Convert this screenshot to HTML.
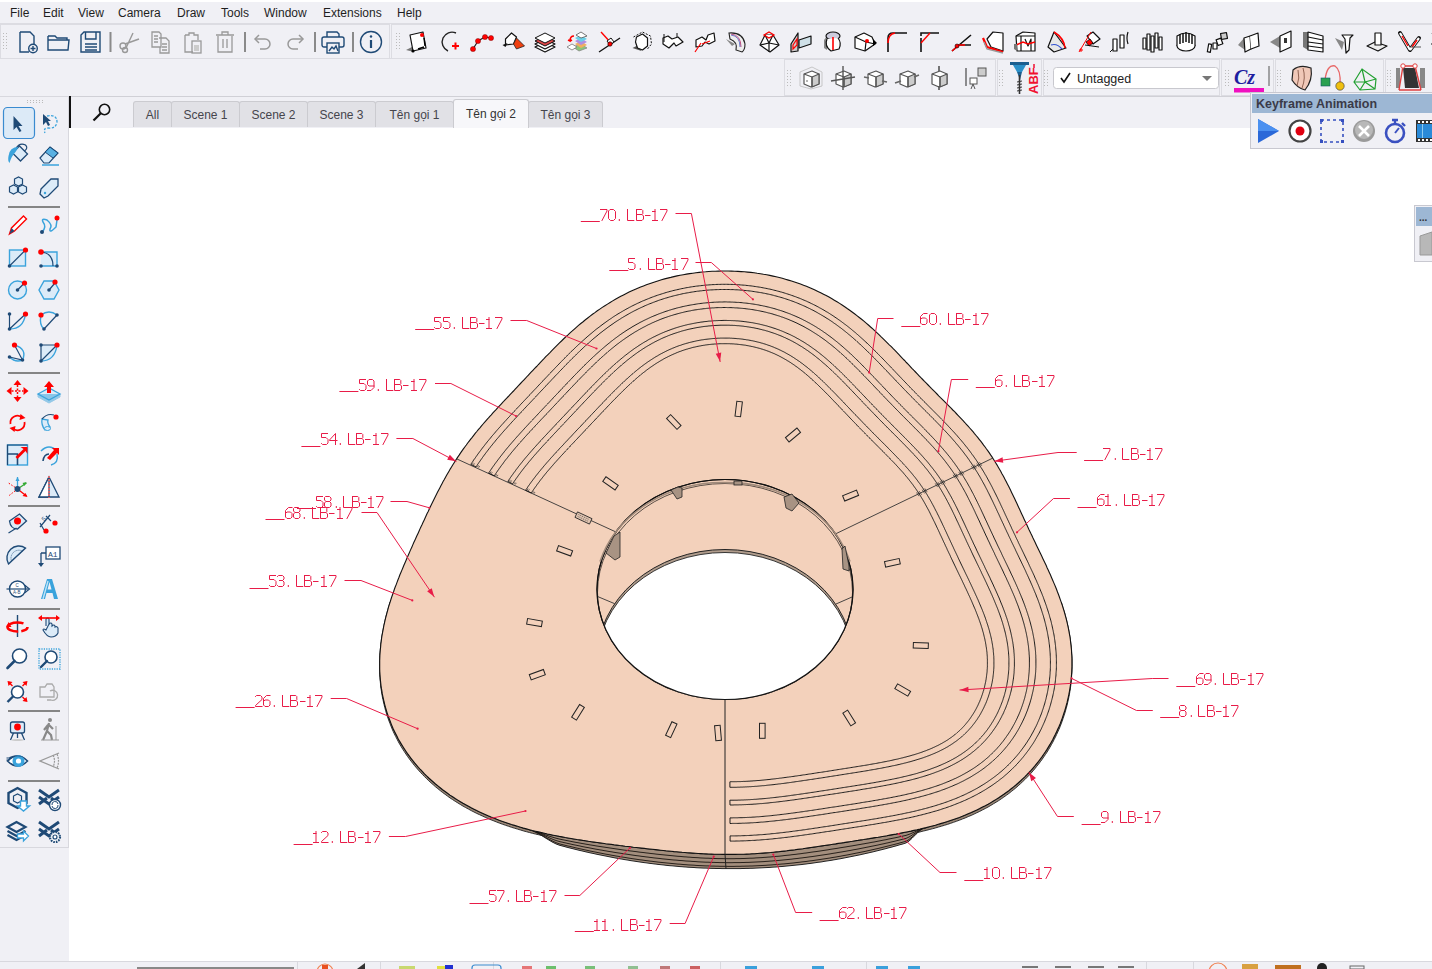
<!DOCTYPE html>
<html><head><meta charset="utf-8"><style>
*{margin:0;padding:0;box-sizing:border-box}
html,body{width:1432px;height:969px;overflow:hidden;background:#F0F0F5;font-family:"Liberation Sans",sans-serif;}
.abs{position:absolute}
#menu{position:absolute;left:0;top:2px;height:21px;width:1432px;font-size:12px;color:#1e1e1e}
#menu span{position:absolute;top:4px}
.tab{position:absolute;top:101px;height:26px;background:#E1E1E6;border:1px solid #CBCBD0;border-bottom:none;border-radius:3px 3px 0 0;font-size:12px;color:#45454c;text-align:center;line-height:27px}
</style></head><body>
<div class="abs" style="left:0;top:0;width:1432px;height:2px;background:#fff"></div>
<div id="menu">
<span style="left:10px">File</span><span style="left:43px">Edit</span><span style="left:78px">View</span><span style="left:118px">Camera</span><span style="left:177px">Draw</span><span style="left:221px">Tools</span><span style="left:264px">Window</span><span style="left:323px">Extensions</span><span style="left:397px">Help</span>
</div>
<div class="abs" style="left:0;top:23px;width:1432px;height:1px;background:#DCDCE2"></div>
<div class="abs" style="left:0;top:58px;width:1432px;height:1px;background:#DCDCE2"></div>
<!-- viewport -->
<div class="abs" style="left:69px;top:128px;width:1363px;height:833px;background:#fff"></div>
<div class="abs" style="left:69px;top:96px;width:1363px;height:1px;background:#D0D0D6"></div>
<div class="abs" style="left:69px;top:96px;width:2px;height:32px;background:#111"></div>
<!-- left panel -->
<div class="abs" style="left:0;top:96px;width:69px;height:752px;border-top:1px solid #D8D8DE;border-right:1px solid #D8D8DE;border-bottom:1px solid #D8D8DE"></div>
<!-- tabs -->
<div class="tab" style="left:133px;width:39px">All</div>
<div class="tab" style="left:171px;width:69px">Scene 1</div>
<div class="tab" style="left:239px;width:69px">Scene 2</div>
<div class="tab" style="left:307px;width:69px">Scene 3</div>
<div class="tab" style="left:375px;width:79px">Tên gọi 1</div>
<div class="tab" style="left:453px;width:76px;top:99px;height:29px;background:#F7F7FA;line-height:28px;color:#333">Tên gọi 2</div>
<div class="tab" style="left:528px;width:75px">Tên gọi 3</div>
<!-- status bar -->
<div class="abs" style="left:0;top:961px;width:1432px;height:8px;background:#F0F0F5;border-top:1px solid #D8D8DE"></div>
<svg class="abs" style="left:0;top:0" width="1432" height="969" viewBox="0 0 1432 969">
<g>
<path d="M1061.2 604.9 L1062.1 607.5 L1062.9 610.1 L1063.7 612.7 L1064.5 615.3 L1065.2 617.9 L1065.9 620.5 L1066.6 623.2 L1067.2 625.8 L1067.8 628.5 L1068.4 631.2 L1068.9 633.9 L1069.4 636.6 L1069.9 639.3 L1070.3 642.0 L1070.6 644.7 L1070.9 647.4 L1071.2 650.2 L1071.5 652.9 L1071.6 655.7 L1071.8 658.4 L1071.9 661.2 L1071.9 663.9 L1071.9 666.7 L1071.9 669.5 L1071.8 672.2 L1071.7 675.0 L1071.5 677.7 L1071.3 680.5 L1071.0 683.3 L1070.7 686.0 L1070.3 688.8 L1069.9 691.5 L1069.4 694.3 L1068.9 697.0 L1068.3 699.8 L1067.7 702.5 L1067.1 705.2 L1066.3 707.9 L1065.6 710.6 L1064.8 713.3 L1063.9 716.0 L1063.0 718.7 L1062.1 721.4 L1061.1 724.0 L1060.1 726.7 L1059.0 729.3 L1057.8 731.9 L1056.6 734.5 L1055.4 737.1 L1054.1 739.6 L1052.8 742.2 L1051.4 744.7 L1050.0 747.2 L1048.5 749.7 L1047.0 752.2 L1045.4 754.6 L1043.7 757.0 L1042.1 759.4 L1040.3 761.8 L1038.6 764.1 L1036.7 766.4 L1034.9 768.7 L1033.0 770.9 L1031.0 773.2 L1029.0 775.3 L1026.9 777.5 L1024.8 779.6 L1022.6 781.7 L1020.4 783.8 L1018.2 785.8 L1015.9 787.8 L1013.6 789.7 L1011.2 791.6 L1008.8 793.5 L1006.3 795.3 L1003.8 797.1 L1001.3 798.8 L998.7 800.6 L996.1 802.2 L993.4 803.8 L990.8 805.4 L988.1 807.0 L985.3 808.5 L982.5 809.9 L979.7 811.4 L976.9 812.7 L974.0 814.1 L971.2 815.4 L968.2 816.6 L965.3 817.9 L962.4 819.0 L959.4 820.2 L956.4 821.3 L953.5 822.3 L950.4 823.4 L947.4 824.4 L944.4 825.3 L941.4 826.2 L938.3 827.1 L935.3 828.0 L932.3 828.8 L929.2 829.6 L926.2 830.4 L923.1 831.1 L920.1 831.9 L917.0 832.6 L914.0 833.2 L910.9 833.9 L907.9 834.5 L904.9 835.1 L901.9 835.7 L898.9 836.3 L895.9 836.9 L892.9 837.4 L889.9 837.9 L886.9 838.5 L884.0 839.0 L881.1 839.5 L878.1 840.0 L875.2 840.4 L872.3 840.9 L869.4 841.4 L866.5 841.8 L863.7 842.3 L860.8 842.7 L858.0 843.2 L855.1 843.6 L852.3 844.1 L849.5 844.5 L846.7 844.9 L843.9 845.4 L841.1 845.8 L838.3 846.2 L835.6 846.7 L832.8 847.1 L830.1 847.5 L827.3 847.9 L824.6 848.3 L821.9 848.7 L819.2 849.1 L816.4 849.5 L813.7 849.9 L811.0 850.3 L808.3 850.7 L805.6 851.1 L802.9 851.5 L800.2 851.8 L797.6 852.2 L794.9 852.6 L792.2 852.9 L789.5 853.2 L786.8 853.6 L784.1 853.9 L781.4 854.2 L778.8 854.5 L776.1 854.7 L773.4 855.0 L770.7 855.3 L768.0 855.5 L765.3 855.7 L762.6 855.9 L760.0 856.1 L757.3 856.3 L754.6 856.5 L751.9 856.6 L749.2 856.8 L746.5 856.9 L743.8 857.0 L741.1 857.1 L738.4 857.1 L735.8 857.2 L733.1 857.2 L730.4 857.2 L727.7 857.2 L725.0 857.2 L722.3 857.2 L719.6 857.1 L716.9 857.1 L714.3 857.0 L711.6 856.9 L708.9 856.8 L706.2 856.7 L703.5 856.6 L700.8 856.4 L698.1 856.3 L695.5 856.1 L692.8 855.9 L690.1 855.7 L687.4 855.5 L684.7 855.3 L682.1 855.1 L679.4 854.8 L676.7 854.6 L674.0 854.4 L671.3 854.1 L668.6 853.8 L665.9 853.6 L663.3 853.3 L660.6 853.0 L657.9 852.7 L655.2 852.4 L652.5 852.1 L649.8 851.8 L647.0 851.5 L644.3 851.2 L641.6 850.9 L638.9 850.6 L636.1 850.3 L633.4 850.0 L630.7 849.6 L627.9 849.3 L625.1 849.0 L622.4 848.6 L619.6 848.3 L616.8 847.9 L614.0 847.6 L611.2 847.2 L608.4 846.8 L605.6 846.5 L602.8 846.1 L599.9 845.7 L597.1 845.3 L594.2 844.9 L591.4 844.5 L588.5 844.1 L585.6 843.6 L582.7 843.2 L579.8 842.7 L576.9 842.3 L574.0 841.8 L571.1 841.3 L568.1 840.8 L565.2 840.3 L562.2 839.7 L559.3 839.2 L556.3 838.6 L553.3 838.0 L550.3 837.4 L547.4 836.8 L544.4 836.1 L541.4 835.4 L538.4 834.7 L535.4 834.0 L532.4 833.3 L529.4 832.5 L526.4 831.7 L523.4 830.9 L520.5 830.0 L517.5 829.1 L514.5 828.2 L511.5 827.3 L508.6 826.3 L505.6 825.3 L502.7 824.3 L499.7 823.2 L496.8 822.1 L493.9 820.9 L491.0 819.8 L488.1 818.6 L485.2 817.3 L482.4 816.0 L479.6 814.7 L476.7 813.4 L474.0 812.0 L471.2 810.6 L468.5 809.1 L465.7 807.6 L463.0 806.1 L460.4 804.5 L457.8 802.9 L455.2 801.3 L452.6 799.6 L450.0 797.9 L447.5 796.1 L445.1 794.3 L442.6 792.5 L440.2 790.6 L437.9 788.7 L435.5 786.8 L433.3 784.8 L431.0 782.8 L428.8 780.8 L426.6 778.7 L424.5 776.6 L422.5 774.5 L420.4 772.3 L418.4 770.1 L416.5 767.9 L414.6 765.7 L412.8 763.4 L411.0 761.1 L409.2 758.7 L407.5 756.4 L405.9 754.0 L404.3 751.6 L402.7 749.1 L401.2 746.7 L399.7 744.2 L398.3 741.7 L397.0 739.1 L395.7 736.6 L394.4 734.0 L393.2 731.5 L392.1 728.9 L391.0 726.2 L390.0 723.6 L389.0 721.0 L388.0 718.3 L387.1 715.6 L386.3 713.0 L385.5 710.3 L384.8 707.6 L384.1 704.8 L383.5 702.1 L382.9 699.4 L382.3 696.7 L381.9 693.9 L381.4 691.2 L381.0 688.4 L380.7 685.7 L380.4 682.9 L380.2 680.1 L380.0 677.4 L379.8 674.6 L379.7 671.9 L379.7 669.1 L379.7 666.3 L379.7 663.6 L379.8 660.8 L379.9 658.1 L380.1 655.3 L380.3 652.6 L380.6 649.9 L380.8 647.2 L381.2 644.4 L381.5 641.7 L381.9 639.0 L382.4 636.3 L382.9 633.7 L383.4 631.0 L383.9 628.3 L384.5 625.7 L385.1 623.0 L385.7 620.4 L386.4 617.8 L387.1 615.2 L387.8 612.6 L388.5 610.0 L389.3 607.4 L390.1 604.9 L390.1 602.1 L389.3 604.6 L388.5 607.2 L387.8 609.8 L387.1 612.4 L386.4 615.0 L385.7 617.6 L385.1 620.2 L384.5 622.9 L383.9 625.5 L383.4 628.2 L382.9 630.9 L382.4 633.5 L381.9 636.2 L381.5 638.9 L381.2 641.6 L380.8 644.4 L380.6 647.1 L380.3 649.8 L380.1 652.5 L379.9 655.3 L379.8 658.0 L379.7 660.8 L379.7 663.5 L379.7 666.3 L379.7 669.1 L379.8 671.8 L380.0 674.6 L380.2 677.3 L380.4 680.1 L380.7 682.9 L381.0 685.6 L381.4 688.4 L381.9 691.1 L382.3 693.9 L382.9 696.6 L383.5 699.3 L384.1 702.0 L384.8 704.8 L385.5 707.5 L386.3 710.2 L387.1 712.8 L388.0 715.5 L389.0 718.2 L390.0 720.8 L391.0 723.4 L392.1 726.1 L393.2 728.7 L394.4 731.2 L395.7 733.8 L397.0 736.3 L398.3 738.9 L399.7 741.4 L401.2 743.9 L402.7 746.3 L404.3 748.8 L405.9 751.2 L407.5 753.6 L409.2 755.9 L411.0 758.3 L412.8 760.6 L414.6 762.9 L416.5 765.1 L418.4 767.3 L420.4 769.5 L422.5 771.7 L424.5 773.8 L426.6 775.9 L428.8 778.0 L431.0 780.0 L433.3 782.0 L435.5 784.0 L437.9 785.9 L440.2 787.8 L442.6 789.7 L445.1 791.5 L447.5 793.3 L450.0 795.1 L452.6 796.8 L455.2 798.5 L457.8 800.1 L460.4 801.7 L463.0 803.3 L465.7 804.8 L468.5 806.3 L471.2 807.8 L474.0 809.2 L476.7 810.6 L479.6 811.9 L482.4 813.2 L485.2 814.5 L488.1 815.8 L491.0 817.0 L493.9 818.1 L496.8 819.3 L499.7 820.4 L502.7 821.5 L505.6 822.5 L508.6 823.5 L511.5 824.5 L514.5 825.4 L517.5 826.3 L520.5 827.2 L523.4 828.1 L526.4 828.9 L529.4 829.7 L532.4 830.5 L535.4 831.2 L538.4 831.9 L541.4 832.6 L544.4 833.3 L547.4 834.0 L550.3 834.6 L553.3 835.2 L556.3 835.8 L559.3 836.4 L562.2 836.9 L565.2 837.5 L568.1 838.0 L571.1 838.5 L574.0 839.0 L576.9 839.5 L579.8 839.9 L582.7 840.4 L585.6 840.8 L588.5 841.3 L591.4 841.7 L594.2 842.1 L597.1 842.5 L599.9 842.9 L602.8 843.3 L605.6 843.7 L608.4 844.0 L611.2 844.4 L614.0 844.8 L616.8 845.1 L619.6 845.5 L622.4 845.8 L625.1 846.2 L627.9 846.5 L630.7 846.8 L633.4 847.2 L636.1 847.5 L638.9 847.8 L641.6 848.1 L644.3 848.4 L647.0 848.7 L649.8 849.0 L652.5 849.3 L655.2 849.6 L657.9 849.9 L660.6 850.2 L663.3 850.5 L665.9 850.8 L668.6 851.0 L671.3 851.3 L674.0 851.6 L676.7 851.8 L679.4 852.0 L682.1 852.3 L684.7 852.5 L687.4 852.7 L690.1 852.9 L692.8 853.1 L695.5 853.3 L698.1 853.5 L700.8 853.6 L703.5 853.8 L706.2 853.9 L708.9 854.0 L711.6 854.1 L714.3 854.2 L716.9 854.3 L719.6 854.3 L722.3 854.4 L725.0 854.4 L727.7 854.4 L730.4 854.4 L733.1 854.4 L735.8 854.4 L738.4 854.3 L741.1 854.3 L743.8 854.2 L746.5 854.1 L749.2 854.0 L751.9 853.8 L754.6 853.7 L757.3 853.5 L760.0 853.3 L762.6 853.1 L765.3 852.9 L768.0 852.7 L770.7 852.5 L773.4 852.2 L776.1 851.9 L778.8 851.7 L781.4 851.4 L784.1 851.1 L786.8 850.8 L789.5 850.4 L792.2 850.1 L794.9 849.8 L797.6 849.4 L800.2 849.0 L802.9 848.7 L805.6 848.3 L808.3 847.9 L811.0 847.5 L813.7 847.1 L816.4 846.7 L819.2 846.3 L821.9 845.9 L824.6 845.5 L827.3 845.1 L830.1 844.7 L832.8 844.3 L835.6 843.9 L838.3 843.4 L841.1 843.0 L843.9 842.6 L846.7 842.1 L849.5 841.7 L852.3 841.3 L855.1 840.8 L858.0 840.4 L860.8 839.9 L863.7 839.5 L866.5 839.0 L869.4 838.6 L872.3 838.1 L875.2 837.6 L878.1 837.2 L881.1 836.7 L884.0 836.2 L886.9 835.7 L889.9 835.1 L892.9 834.6 L895.9 834.1 L898.9 833.5 L901.9 832.9 L904.9 832.3 L907.9 831.7 L910.9 831.1 L914.0 830.4 L917.0 829.8 L920.1 829.1 L923.1 828.3 L926.2 827.6 L929.2 826.8 L932.3 826.0 L935.3 825.2 L938.3 824.3 L941.4 823.4 L944.4 822.5 L947.4 821.6 L950.4 820.6 L953.5 819.5 L956.4 818.5 L959.4 817.4 L962.4 816.2 L965.3 815.1 L968.2 813.8 L971.2 812.6 L974.0 811.3 L976.9 809.9 L979.7 808.6 L982.5 807.1 L985.3 805.7 L988.1 804.2 L990.8 802.6 L993.4 801.0 L996.1 799.4 L998.7 797.8 L1001.3 796.0 L1003.8 794.3 L1006.3 792.5 L1008.8 790.7 L1011.2 788.8 L1013.6 786.9 L1015.9 785.0 L1018.2 783.0 L1020.4 781.0 L1022.6 778.9 L1024.8 776.8 L1026.9 774.7 L1029.0 772.5 L1031.0 770.4 L1033.0 768.1 L1034.9 765.9 L1036.7 763.6 L1038.6 761.3 L1040.3 759.0 L1042.1 756.6 L1043.7 754.2 L1045.4 751.8 L1047.0 749.4 L1048.5 746.9 L1050.0 744.4 L1051.4 741.9 L1052.8 739.4 L1054.1 736.8 L1055.4 734.3 L1056.6 731.7 L1057.8 729.1 L1059.0 726.5 L1060.1 723.9 L1061.1 721.2 L1062.1 718.6 L1063.0 715.9 L1063.9 713.2 L1064.8 710.5 L1065.6 707.8 L1066.3 705.1 L1067.1 702.4 L1067.7 699.7 L1068.3 697.0 L1068.9 694.2 L1069.4 691.5 L1069.9 688.7 L1070.3 686.0 L1070.7 683.2 L1071.0 680.5 L1071.3 677.7 L1071.5 674.9 L1071.7 672.2 L1071.8 669.4 L1071.9 666.7 L1071.9 663.9 L1071.9 661.1 L1071.9 658.4 L1071.8 655.6 L1071.6 652.9 L1071.5 650.1 L1071.2 647.4 L1070.9 644.6 L1070.6 641.9 L1070.3 639.2 L1069.9 636.5 L1069.4 633.8 L1068.9 631.1 L1068.4 628.4 L1067.8 625.7 L1067.2 623.0 L1066.6 620.4 L1065.9 617.7 L1065.2 615.1 L1064.5 612.5 L1063.7 609.9 L1062.9 607.3 L1062.1 604.7 L1061.2 602.1 Z" fill="#9a8676" stroke="#222" stroke-width="0.9"/>
<path d="M528.0 829.3 L530.0 829.9 L532.0 830.7 L534.0 831.5 L536.0 832.5 L538.0 833.5 L540.0 834.6 L542.0 835.8 L544.0 837.0 L546.0 838.3 L548.0 839.5 L550.0 840.7 L552.0 841.9 L554.0 842.9 L556.0 843.9 L558.0 844.7 L560.0 845.4 L562.0 845.9 L564.0 846.4 L566.0 847.0 L568.0 847.5 L570.0 848.0 L572.0 848.5 L574.0 849.0 L576.0 849.5 L578.0 850.0 L580.0 850.5 L582.0 850.9 L584.0 851.4 L586.0 851.9 L588.0 852.3 L590.0 852.8 L592.0 853.2 L594.0 853.6 L596.0 854.1 L598.0 854.5 L600.0 854.9 L602.0 855.3 L604.0 855.7 L606.0 856.1 L608.0 856.5 L610.0 856.9 L612.0 857.3 L614.0 857.7 L616.0 858.1 L618.0 858.4 L620.0 858.8 L622.0 859.1 L624.0 859.5 L626.0 859.8 L628.0 860.1 L630.0 860.5 L632.0 860.8 L634.0 861.1 L636.0 861.4 L638.0 861.7 L640.0 862.0 L642.0 862.3 L644.0 862.6 L646.0 862.8 L648.0 863.1 L650.0 863.4 L652.0 863.6 L654.0 863.9 L656.0 864.1 L658.0 864.4 L660.0 864.6 L662.0 864.8 L664.0 865.0 L666.0 865.3 L668.0 865.5 L670.0 865.7 L672.0 865.8 L674.0 866.0 L676.0 866.2 L678.0 866.4 L680.0 866.6 L682.0 866.7 L684.0 866.9 L686.0 867.0 L688.0 867.2 L690.0 867.3 L692.0 867.4 L694.0 867.5 L696.0 867.7 L698.0 867.8 L700.0 867.9 L702.0 868.0 L704.0 868.1 L706.0 868.1 L708.0 868.2 L710.0 868.3 L712.0 868.4 L714.0 868.4 L716.0 868.5 L718.0 868.5 L720.0 868.5 L722.0 868.6 L724.0 868.6 L726.0 868.6 L728.0 868.6 L730.0 868.6 L732.0 868.6 L734.0 868.6 L736.0 868.6 L738.0 868.6 L740.0 868.6 L742.0 868.5 L744.0 868.5 L746.0 868.4 L748.0 868.4 L750.0 868.3 L752.0 868.3 L754.0 868.2 L756.0 868.1 L758.0 868.0 L760.0 867.9 L762.0 867.8 L764.0 867.7 L766.0 867.6 L768.0 867.5 L770.0 867.4 L772.0 867.2 L774.0 867.1 L776.0 867.0 L778.0 866.8 L780.0 866.6 L782.0 866.5 L784.0 866.3 L786.0 866.1 L788.0 865.9 L790.0 865.7 L792.0 865.5 L794.0 865.3 L796.0 865.1 L798.0 864.9 L800.0 864.7 L802.0 864.5 L804.0 864.2 L806.0 864.0 L808.0 863.7 L810.0 863.5 L812.0 863.2 L814.0 862.9 L816.0 862.6 L818.0 862.3 L820.0 862.1 L822.0 861.8 L824.0 861.4 L826.0 861.1 L828.0 860.8 L830.0 860.5 L832.0 860.2 L834.0 859.8 L836.0 859.5 L838.0 859.1 L840.0 858.8 L842.0 858.4 L844.0 858.0 L846.0 857.6 L848.0 857.2 L850.0 856.8 L852.0 856.4 L854.0 856.0 L856.0 855.6 L858.0 855.2 L860.0 854.8 L862.0 854.3 L864.0 853.9 L866.0 853.4 L868.0 853.0 L870.0 852.5 L872.0 852.1 L874.0 851.6 L876.0 851.1 L878.0 850.6 L880.0 850.1 L882.0 849.6 L884.0 849.1 L886.0 848.6 L888.0 848.0 L890.0 847.5 L892.0 847.0 L894.0 846.4 L896.0 845.9 L898.0 845.3 L900.0 844.7 L902.0 844.2 L904.0 843.6 L906.0 842.9 L908.0 841.8 L910.0 840.2 L912.0 838.3 L914.0 836.3 L916.0 834.2 L918.0 832.3 L920.0 830.6 L922.0 829.2 L924.0 828.2 L926.0 827.6 L924.0 828.1 L922.0 828.6 L920.0 829.1 L918.0 829.5 L916.0 830.0 L914.0 830.4 L912.0 830.9 L910.0 831.3 L908.0 831.7 L906.0 832.1 L904.0 832.5 L902.0 832.9 L900.0 833.3 L898.0 833.7 L896.0 834.0 L894.0 834.4 L892.0 834.8 L890.0 835.1 L888.0 835.5 L886.0 835.8 L884.0 836.2 L882.0 836.5 L880.0 836.8 L878.0 837.2 L876.0 837.5 L874.0 837.8 L872.0 838.2 L870.0 838.5 L868.0 838.8 L866.0 839.1 L864.0 839.4 L862.0 839.8 L860.0 840.1 L858.0 840.4 L856.0 840.7 L854.0 841.0 L852.0 841.3 L850.0 841.6 L848.0 841.9 L846.0 842.3 L844.0 842.6 L842.0 842.9 L840.0 843.2 L838.0 843.5 L836.0 843.8 L834.0 844.1 L832.0 844.4 L830.0 844.7 L828.0 845.0 L826.0 845.3 L824.0 845.6 L822.0 845.9 L820.0 846.2 L818.0 846.5 L816.0 846.8 L814.0 847.1 L812.0 847.4 L810.0 847.7 L808.0 848.0 L806.0 848.2 L804.0 848.5 L802.0 848.8 L800.0 849.1 L798.0 849.3 L796.0 849.6 L794.0 849.9 L792.0 850.1 L790.0 850.4 L788.0 850.6 L786.0 850.8 L784.0 851.1 L782.0 851.3 L780.0 851.5 L778.0 851.7 L776.0 851.9 L774.0 852.1 L772.0 852.3 L770.0 852.5 L768.0 852.7 L766.0 852.9 L764.0 853.0 L762.0 853.2 L760.0 853.3 L758.0 853.5 L756.0 853.6 L754.0 853.7 L752.0 853.8 L750.0 853.9 L748.0 854.0 L746.0 854.1 L744.0 854.2 L742.0 854.2 L740.0 854.3 L738.0 854.3 L736.0 854.4 L734.0 854.4 L732.0 854.4 L730.0 854.4 L728.0 854.4 L726.0 854.4 L724.0 854.4 L722.0 854.4 L720.0 854.3 L718.0 854.3 L716.0 854.2 L714.0 854.2 L712.0 854.1 L710.0 854.0 L708.0 854.0 L706.0 853.9 L704.0 853.8 L702.0 853.7 L700.0 853.6 L698.0 853.4 L696.0 853.3 L694.0 853.2 L692.0 853.0 L690.0 852.9 L688.0 852.8 L686.0 852.6 L684.0 852.4 L682.0 852.3 L680.0 852.1 L678.0 851.9 L676.0 851.7 L674.0 851.6 L672.0 851.4 L670.0 851.2 L668.0 851.0 L666.0 850.8 L664.0 850.6 L662.0 850.4 L660.0 850.2 L658.0 849.9 L656.0 849.7 L654.0 849.5 L652.0 849.3 L650.0 849.1 L648.0 848.9 L646.0 848.6 L644.0 848.4 L642.0 848.2 L640.0 847.9 L638.0 847.7 L636.0 847.5 L634.0 847.2 L632.0 847.0 L630.0 846.7 L628.0 846.5 L626.0 846.3 L624.0 846.0 L622.0 845.8 L620.0 845.5 L618.0 845.3 L616.0 845.0 L614.0 844.8 L612.0 844.5 L610.0 844.2 L608.0 844.0 L606.0 843.7 L604.0 843.4 L602.0 843.2 L600.0 842.9 L598.0 842.6 L596.0 842.3 L594.0 842.1 L592.0 841.8 L590.0 841.5 L588.0 841.2 L586.0 840.9 L584.0 840.6 L582.0 840.3 L580.0 840.0 L578.0 839.6 L576.0 839.3 L574.0 839.0 L572.0 838.7 L570.0 838.3 L568.0 838.0 L566.0 837.6 L564.0 837.3 L562.0 836.9 L560.0 836.5 L558.0 836.1 L556.0 835.7 L554.0 835.4 L552.0 834.9 L550.0 834.5 L548.0 834.1 L546.0 833.7 L544.0 833.2 L542.0 832.8 L540.0 832.3 L538.0 831.8 L536.0 831.4 L534.0 830.9 L532.0 830.4 L530.0 829.9 L528.0 829.3 Z" fill="#a38e7d" stroke="#222" stroke-width="1"/>
<clipPath id="bandclip"><path d="M528.0 829.3 L530.0 829.9 L532.0 830.7 L534.0 831.5 L536.0 832.5 L538.0 833.5 L540.0 834.6 L542.0 835.8 L544.0 837.0 L546.0 838.3 L548.0 839.5 L550.0 840.7 L552.0 841.9 L554.0 842.9 L556.0 843.9 L558.0 844.7 L560.0 845.4 L562.0 845.9 L564.0 846.4 L566.0 847.0 L568.0 847.5 L570.0 848.0 L572.0 848.5 L574.0 849.0 L576.0 849.5 L578.0 850.0 L580.0 850.5 L582.0 850.9 L584.0 851.4 L586.0 851.9 L588.0 852.3 L590.0 852.8 L592.0 853.2 L594.0 853.6 L596.0 854.1 L598.0 854.5 L600.0 854.9 L602.0 855.3 L604.0 855.7 L606.0 856.1 L608.0 856.5 L610.0 856.9 L612.0 857.3 L614.0 857.7 L616.0 858.1 L618.0 858.4 L620.0 858.8 L622.0 859.1 L624.0 859.5 L626.0 859.8 L628.0 860.1 L630.0 860.5 L632.0 860.8 L634.0 861.1 L636.0 861.4 L638.0 861.7 L640.0 862.0 L642.0 862.3 L644.0 862.6 L646.0 862.8 L648.0 863.1 L650.0 863.4 L652.0 863.6 L654.0 863.9 L656.0 864.1 L658.0 864.4 L660.0 864.6 L662.0 864.8 L664.0 865.0 L666.0 865.3 L668.0 865.5 L670.0 865.7 L672.0 865.8 L674.0 866.0 L676.0 866.2 L678.0 866.4 L680.0 866.6 L682.0 866.7 L684.0 866.9 L686.0 867.0 L688.0 867.2 L690.0 867.3 L692.0 867.4 L694.0 867.5 L696.0 867.7 L698.0 867.8 L700.0 867.9 L702.0 868.0 L704.0 868.1 L706.0 868.1 L708.0 868.2 L710.0 868.3 L712.0 868.4 L714.0 868.4 L716.0 868.5 L718.0 868.5 L720.0 868.5 L722.0 868.6 L724.0 868.6 L726.0 868.6 L728.0 868.6 L730.0 868.6 L732.0 868.6 L734.0 868.6 L736.0 868.6 L738.0 868.6 L740.0 868.6 L742.0 868.5 L744.0 868.5 L746.0 868.4 L748.0 868.4 L750.0 868.3 L752.0 868.3 L754.0 868.2 L756.0 868.1 L758.0 868.0 L760.0 867.9 L762.0 867.8 L764.0 867.7 L766.0 867.6 L768.0 867.5 L770.0 867.4 L772.0 867.2 L774.0 867.1 L776.0 867.0 L778.0 866.8 L780.0 866.6 L782.0 866.5 L784.0 866.3 L786.0 866.1 L788.0 865.9 L790.0 865.7 L792.0 865.5 L794.0 865.3 L796.0 865.1 L798.0 864.9 L800.0 864.7 L802.0 864.5 L804.0 864.2 L806.0 864.0 L808.0 863.7 L810.0 863.5 L812.0 863.2 L814.0 862.9 L816.0 862.6 L818.0 862.3 L820.0 862.1 L822.0 861.8 L824.0 861.4 L826.0 861.1 L828.0 860.8 L830.0 860.5 L832.0 860.2 L834.0 859.8 L836.0 859.5 L838.0 859.1 L840.0 858.8 L842.0 858.4 L844.0 858.0 L846.0 857.6 L848.0 857.2 L850.0 856.8 L852.0 856.4 L854.0 856.0 L856.0 855.6 L858.0 855.2 L860.0 854.8 L862.0 854.3 L864.0 853.9 L866.0 853.4 L868.0 853.0 L870.0 852.5 L872.0 852.1 L874.0 851.6 L876.0 851.1 L878.0 850.6 L880.0 850.1 L882.0 849.6 L884.0 849.1 L886.0 848.6 L888.0 848.0 L890.0 847.5 L892.0 847.0 L894.0 846.4 L896.0 845.9 L898.0 845.3 L900.0 844.7 L902.0 844.2 L904.0 843.6 L906.0 842.9 L908.0 841.8 L910.0 840.2 L912.0 838.3 L914.0 836.3 L916.0 834.2 L918.0 832.3 L920.0 830.6 L922.0 829.2 L924.0 828.2 L926.0 827.6 L924.0 828.1 L922.0 828.6 L920.0 829.1 L918.0 829.5 L916.0 830.0 L914.0 830.4 L912.0 830.9 L910.0 831.3 L908.0 831.7 L906.0 832.1 L904.0 832.5 L902.0 832.9 L900.0 833.3 L898.0 833.7 L896.0 834.0 L894.0 834.4 L892.0 834.8 L890.0 835.1 L888.0 835.5 L886.0 835.8 L884.0 836.2 L882.0 836.5 L880.0 836.8 L878.0 837.2 L876.0 837.5 L874.0 837.8 L872.0 838.2 L870.0 838.5 L868.0 838.8 L866.0 839.1 L864.0 839.4 L862.0 839.8 L860.0 840.1 L858.0 840.4 L856.0 840.7 L854.0 841.0 L852.0 841.3 L850.0 841.6 L848.0 841.9 L846.0 842.3 L844.0 842.6 L842.0 842.9 L840.0 843.2 L838.0 843.5 L836.0 843.8 L834.0 844.1 L832.0 844.4 L830.0 844.7 L828.0 845.0 L826.0 845.3 L824.0 845.6 L822.0 845.9 L820.0 846.2 L818.0 846.5 L816.0 846.8 L814.0 847.1 L812.0 847.4 L810.0 847.7 L808.0 848.0 L806.0 848.2 L804.0 848.5 L802.0 848.8 L800.0 849.1 L798.0 849.3 L796.0 849.6 L794.0 849.9 L792.0 850.1 L790.0 850.4 L788.0 850.6 L786.0 850.8 L784.0 851.1 L782.0 851.3 L780.0 851.5 L778.0 851.7 L776.0 851.9 L774.0 852.1 L772.0 852.3 L770.0 852.5 L768.0 852.7 L766.0 852.9 L764.0 853.0 L762.0 853.2 L760.0 853.3 L758.0 853.5 L756.0 853.6 L754.0 853.7 L752.0 853.8 L750.0 853.9 L748.0 854.0 L746.0 854.1 L744.0 854.2 L742.0 854.2 L740.0 854.3 L738.0 854.3 L736.0 854.4 L734.0 854.4 L732.0 854.4 L730.0 854.4 L728.0 854.4 L726.0 854.4 L724.0 854.4 L722.0 854.4 L720.0 854.3 L718.0 854.3 L716.0 854.2 L714.0 854.2 L712.0 854.1 L710.0 854.0 L708.0 854.0 L706.0 853.9 L704.0 853.8 L702.0 853.7 L700.0 853.6 L698.0 853.4 L696.0 853.3 L694.0 853.2 L692.0 853.0 L690.0 852.9 L688.0 852.8 L686.0 852.6 L684.0 852.4 L682.0 852.3 L680.0 852.1 L678.0 851.9 L676.0 851.7 L674.0 851.6 L672.0 851.4 L670.0 851.2 L668.0 851.0 L666.0 850.8 L664.0 850.6 L662.0 850.4 L660.0 850.2 L658.0 849.9 L656.0 849.7 L654.0 849.5 L652.0 849.3 L650.0 849.1 L648.0 848.9 L646.0 848.6 L644.0 848.4 L642.0 848.2 L640.0 847.9 L638.0 847.7 L636.0 847.5 L634.0 847.2 L632.0 847.0 L630.0 846.7 L628.0 846.5 L626.0 846.3 L624.0 846.0 L622.0 845.8 L620.0 845.5 L618.0 845.3 L616.0 845.0 L614.0 844.8 L612.0 844.5 L610.0 844.2 L608.0 844.0 L606.0 843.7 L604.0 843.4 L602.0 843.2 L600.0 842.9 L598.0 842.6 L596.0 842.3 L594.0 842.1 L592.0 841.8 L590.0 841.5 L588.0 841.2 L586.0 840.9 L584.0 840.6 L582.0 840.3 L580.0 840.0 L578.0 839.6 L576.0 839.3 L574.0 839.0 L572.0 838.7 L570.0 838.3 L568.0 838.0 L566.0 837.6 L564.0 837.3 L562.0 836.9 L560.0 836.5 L558.0 836.1 L556.0 835.7 L554.0 835.4 L552.0 834.9 L550.0 834.5 L548.0 834.1 L546.0 833.7 L544.0 833.2 L542.0 832.8 L540.0 832.3 L538.0 831.8 L536.0 831.4 L534.0 830.9 L532.0 830.4 L530.0 829.9 L528.0 829.3 Z"/></clipPath>
<path d="M528.0 829.3 L530.0 829.9 L532.0 830.5 L534.0 831.1 L536.0 831.7 L538.0 832.4 L540.0 833.0 L542.0 833.7 L544.0 834.4 L546.0 835.1 L548.0 835.7 L550.0 836.4 L552.0 837.0 L554.0 837.6 L556.0 838.2 L558.0 838.7 L560.0 839.2 L562.0 839.6 L564.0 840.0 L566.0 840.4 L568.0 840.8 L570.0 841.2 L572.0 841.6 L574.0 842.0 L576.0 842.4 L578.0 842.7 L580.0 843.1 L582.0 843.5 L584.0 843.8 L586.0 844.2 L588.0 844.5 L590.0 844.9 L592.0 845.2 L594.0 845.5 L596.0 845.9 L598.0 846.2 L600.0 846.5 L602.0 846.8 L604.0 847.1 L606.0 847.4 L608.0 847.7 L610.0 848.0 L612.0 848.3 L614.0 848.6 L616.0 848.9 L618.0 849.2 L620.0 849.5 L622.0 849.8 L624.0 850.1 L626.0 850.3 L628.0 850.6 L630.0 850.9 L632.0 851.1 L634.0 851.4 L636.0 851.6 L638.0 851.9 L640.0 852.2 L642.0 852.4 L644.0 852.6 L646.0 852.9 L648.0 853.1 L650.0 853.4 L652.0 853.6 L654.0 853.8 L656.0 854.1 L658.0 854.3 L660.0 854.5 L662.0 854.7 L664.0 854.9 L666.0 855.1 L668.0 855.3 L670.0 855.5 L672.0 855.7 L674.0 855.9 L676.0 856.1 L678.0 856.3 L680.0 856.4 L682.0 856.6 L684.0 856.8 L686.0 856.9 L688.0 857.1 L690.0 857.2 L692.0 857.4 L694.0 857.5 L696.0 857.6 L698.0 857.7 L700.0 857.9 L702.0 858.0 L704.0 858.1 L706.0 858.2 L708.0 858.2 L710.0 858.3 L712.0 858.4 L714.0 858.5 L716.0 858.5 L718.0 858.6 L720.0 858.6 L722.0 858.6 L724.0 858.7 L726.0 858.7 L728.0 858.7 L730.0 858.7 L732.0 858.7 L734.0 858.7 L736.0 858.6 L738.0 858.6 L740.0 858.6 L742.0 858.5 L744.0 858.5 L746.0 858.4 L748.0 858.3 L750.0 858.2 L752.0 858.2 L754.0 858.1 L756.0 857.9 L758.0 857.8 L760.0 857.7 L762.0 857.6 L764.0 857.4 L766.0 857.3 L768.0 857.1 L770.0 857.0 L772.0 856.8 L774.0 856.6 L776.0 856.4 L778.0 856.3 L780.0 856.1 L782.0 855.9 L784.0 855.6 L786.0 855.4 L788.0 855.2 L790.0 855.0 L792.0 854.7 L794.0 854.5 L796.0 854.3 L798.0 854.0 L800.0 853.8 L802.0 853.5 L804.0 853.2 L806.0 853.0 L808.0 852.7 L810.0 852.4 L812.0 852.1 L814.0 851.8 L816.0 851.6 L818.0 851.3 L820.0 851.0 L822.0 850.7 L824.0 850.4 L826.0 850.1 L828.0 849.8 L830.0 849.4 L832.0 849.1 L834.0 848.8 L836.0 848.5 L838.0 848.2 L840.0 847.8 L842.0 847.5 L844.0 847.2 L846.0 846.9 L848.0 846.5 L850.0 846.2 L852.0 845.9 L854.0 845.5 L856.0 845.2 L858.0 844.8 L860.0 844.5 L862.0 844.1 L864.0 843.8 L866.0 843.4 L868.0 843.1 L870.0 842.7 L872.0 842.3 L874.0 842.0 L876.0 841.6 L878.0 841.2 L880.0 840.8 L882.0 840.4 L884.0 840.0 L886.0 839.7 L888.0 839.2 L890.0 838.8 L892.0 838.4 L894.0 838.0 L896.0 837.6 L898.0 837.2 L900.0 836.7 L902.0 836.3 L904.0 835.8 L906.0 835.4 L908.0 834.7 L910.0 834.0 L912.0 833.1 L914.0 832.2 L916.0 831.3 L918.0 830.4 L920.0 829.5 L922.0 828.8 L924.0 828.1 M528.0 829.3 L530.0 829.9 L532.0 830.5 L534.0 831.2 L536.0 832.0 L538.0 832.8 L540.0 833.7 L542.0 834.5 L544.0 835.4 L546.0 836.3 L548.0 837.2 L550.0 838.1 L552.0 839.0 L554.0 839.8 L556.0 840.5 L558.0 841.1 L560.0 841.7 L562.0 842.1 L564.0 842.6 L566.0 843.0 L568.0 843.5 L570.0 843.9 L572.0 844.4 L574.0 844.8 L576.0 845.2 L578.0 845.6 L580.0 846.0 L582.0 846.5 L584.0 846.9 L586.0 847.3 L588.0 847.6 L590.0 848.0 L592.0 848.4 L594.0 848.8 L596.0 849.2 L598.0 849.5 L600.0 849.9 L602.0 850.2 L604.0 850.6 L606.0 850.9 L608.0 851.3 L610.0 851.6 L612.0 851.9 L614.0 852.3 L616.0 852.6 L618.0 852.9 L620.0 853.2 L622.0 853.5 L624.0 853.8 L626.0 854.1 L628.0 854.4 L630.0 854.7 L632.0 855.0 L634.0 855.3 L636.0 855.6 L638.0 855.8 L640.0 856.1 L642.0 856.4 L644.0 856.6 L646.0 856.9 L648.0 857.1 L650.0 857.4 L652.0 857.6 L654.0 857.9 L656.0 858.1 L658.0 858.3 L660.0 858.5 L662.0 858.8 L664.0 859.0 L666.0 859.2 L668.0 859.4 L670.0 859.6 L672.0 859.8 L674.0 860.0 L676.0 860.1 L678.0 860.3 L680.0 860.5 L682.0 860.6 L684.0 860.8 L686.0 861.0 L688.0 861.1 L690.0 861.2 L692.0 861.4 L694.0 861.5 L696.0 861.6 L698.0 861.8 L700.0 861.9 L702.0 862.0 L704.0 862.1 L706.0 862.2 L708.0 862.2 L710.0 862.3 L712.0 862.4 L714.0 862.4 L716.0 862.5 L718.0 862.5 L720.0 862.6 L722.0 862.6 L724.0 862.6 L726.0 862.7 L728.0 862.7 L730.0 862.7 L732.0 862.7 L734.0 862.6 L736.0 862.6 L738.0 862.6 L740.0 862.6 L742.0 862.5 L744.0 862.5 L746.0 862.4 L748.0 862.4 L750.0 862.3 L752.0 862.2 L754.0 862.1 L756.0 862.0 L758.0 861.9 L760.0 861.8 L762.0 861.7 L764.0 861.6 L766.0 861.4 L768.0 861.3 L770.0 861.1 L772.0 861.0 L774.0 860.8 L776.0 860.7 L778.0 860.5 L780.0 860.3 L782.0 860.1 L784.0 859.9 L786.0 859.7 L788.0 859.5 L790.0 859.3 L792.0 859.1 L794.0 858.8 L796.0 858.6 L798.0 858.4 L800.0 858.1 L802.0 857.9 L804.0 857.6 L806.0 857.4 L808.0 857.1 L810.0 856.8 L812.0 856.6 L814.0 856.3 L816.0 856.0 L818.0 855.7 L820.0 855.4 L822.0 855.1 L824.0 854.8 L826.0 854.5 L828.0 854.2 L830.0 853.9 L832.0 853.5 L834.0 853.2 L836.0 852.9 L838.0 852.5 L840.0 852.2 L842.0 851.9 L844.0 851.5 L846.0 851.2 L848.0 850.8 L850.0 850.5 L852.0 850.1 L854.0 849.7 L856.0 849.4 L858.0 849.0 L860.0 848.6 L862.0 848.2 L864.0 847.8 L866.0 847.4 L868.0 847.0 L870.0 846.6 L872.0 846.2 L874.0 845.8 L876.0 845.4 L878.0 845.0 L880.0 844.5 L882.0 844.1 L884.0 843.7 L886.0 843.2 L888.0 842.8 L890.0 842.3 L892.0 841.8 L894.0 841.4 L896.0 840.9 L898.0 840.4 L900.0 839.9 L902.0 839.4 L904.0 838.9 L906.0 838.4 L908.0 837.5 L910.0 836.4 L912.0 835.2 L914.0 833.8 L916.0 832.5 L918.0 831.1 L920.0 830.0 L922.0 828.9 L924.0 828.2 M528.0 829.3 L530.0 829.9 L532.0 830.6 L534.0 831.4 L536.0 832.3 L538.0 833.3 L540.0 834.3 L542.0 835.3 L544.0 836.4 L546.0 837.5 L548.0 838.7 L550.0 839.7 L552.0 840.8 L554.0 841.7 L556.0 842.6 L558.0 843.4 L560.0 844.0 L562.0 844.5 L564.0 845.0 L566.0 845.5 L568.0 846.0 L570.0 846.4 L572.0 846.9 L574.0 847.4 L576.0 847.9 L578.0 848.3 L580.0 848.8 L582.0 849.2 L584.0 849.7 L586.0 850.1 L588.0 850.5 L590.0 851.0 L592.0 851.4 L594.0 851.8 L596.0 852.2 L598.0 852.6 L600.0 853.0 L602.0 853.4 L604.0 853.8 L606.0 854.2 L608.0 854.5 L610.0 854.9 L612.0 855.3 L614.0 855.6 L616.0 856.0 L618.0 856.3 L620.0 856.7 L622.0 857.0 L624.0 857.3 L626.0 857.6 L628.0 858.0 L630.0 858.3 L632.0 858.6 L634.0 858.9 L636.0 859.2 L638.0 859.5 L640.0 859.8 L642.0 860.0 L644.0 860.3 L646.0 860.6 L648.0 860.8 L650.0 861.1 L652.0 861.3 L654.0 861.6 L656.0 861.8 L658.0 862.1 L660.0 862.3 L662.0 862.5 L664.0 862.7 L666.0 862.9 L668.0 863.1 L670.0 863.3 L672.0 863.5 L674.0 863.7 L676.0 863.9 L678.0 864.1 L680.0 864.2 L682.0 864.4 L684.0 864.6 L686.0 864.7 L688.0 864.9 L690.0 865.0 L692.0 865.1 L694.0 865.2 L696.0 865.4 L698.0 865.5 L700.0 865.6 L702.0 865.7 L704.0 865.8 L706.0 865.9 L708.0 865.9 L710.0 866.0 L712.0 866.1 L714.0 866.1 L716.0 866.2 L718.0 866.2 L720.0 866.3 L722.0 866.3 L724.0 866.3 L726.0 866.3 L728.0 866.4 L730.0 866.4 L732.0 866.4 L734.0 866.4 L736.0 866.3 L738.0 866.3 L740.0 866.3 L742.0 866.2 L744.0 866.2 L746.0 866.1 L748.0 866.1 L750.0 866.0 L752.0 866.0 L754.0 865.9 L756.0 865.8 L758.0 865.7 L760.0 865.6 L762.0 865.5 L764.0 865.4 L766.0 865.3 L768.0 865.1 L770.0 865.0 L772.0 864.9 L774.0 864.7 L776.0 864.6 L778.0 864.4 L780.0 864.2 L782.0 864.0 L784.0 863.9 L786.0 863.7 L788.0 863.5 L790.0 863.3 L792.0 863.1 L794.0 862.9 L796.0 862.6 L798.0 862.4 L800.0 862.2 L802.0 861.9 L804.0 861.7 L806.0 861.5 L808.0 861.2 L810.0 860.9 L812.0 860.7 L814.0 860.4 L816.0 860.1 L818.0 859.8 L820.0 859.5 L822.0 859.2 L824.0 858.9 L826.0 858.6 L828.0 858.3 L830.0 858.0 L832.0 857.6 L834.0 857.3 L836.0 857.0 L838.0 856.6 L840.0 856.3 L842.0 855.9 L844.0 855.5 L846.0 855.2 L848.0 854.8 L850.0 854.4 L852.0 854.0 L854.0 853.6 L856.0 853.2 L858.0 852.8 L860.0 852.4 L862.0 852.0 L864.0 851.6 L866.0 851.2 L868.0 850.7 L870.0 850.3 L872.0 849.8 L874.0 849.4 L876.0 848.9 L878.0 848.5 L880.0 848.0 L882.0 847.5 L884.0 847.0 L886.0 846.5 L888.0 846.0 L890.0 845.5 L892.0 845.0 L894.0 844.5 L896.0 844.0 L898.0 843.5 L900.0 842.9 L902.0 842.4 L904.0 841.8 L906.0 841.2 L908.0 840.2 L910.0 838.7 L912.0 837.1 L914.0 835.3 L916.0 833.6 L918.0 831.9 L920.0 830.3 L922.0 829.1 L924.0 828.2 " fill="none" stroke="#1a1410" stroke-width="0.9" clip-path="url(#bandclip)"/>
<path d="M394.3 589.5 L395.2 587.0 L396.2 584.6 L397.1 582.1 L398.0 579.7 L399.0 577.3 L399.9 574.8 L400.9 572.5 L401.9 570.1 L402.9 567.7 L403.9 565.3 L404.9 563.0 L405.9 560.7 L406.9 558.3 L407.9 556.0 L408.9 553.7 L409.9 551.4 L410.9 549.1 L411.9 546.9 L412.9 544.6 L413.9 542.3 L415.0 540.1 L416.0 537.8 L417.0 535.6 L418.0 533.4 L419.0 531.2 L420.0 528.9 L421.0 526.7 L422.1 524.5 L423.1 522.3 L424.1 520.2 L425.1 518.0 L426.1 515.8 L427.1 513.6 L428.2 511.5 L429.2 509.3 L430.2 507.1 L431.2 505.0 L432.3 502.8 L433.3 500.7 L434.4 498.5 L435.4 496.4 L436.5 494.3 L437.6 492.1 L438.7 490.0 L439.8 487.9 L440.9 485.8 L442.0 483.7 L443.1 481.6 L444.3 479.5 L445.4 477.4 L446.6 475.3 L447.8 473.2 L449.0 471.2 L450.2 469.1 L451.5 467.0 L452.7 465.0 L454.0 463.0 L455.3 460.9 L456.6 458.9 L457.9 456.9 L459.3 454.9 L460.6 452.9 L462.0 450.9 L463.4 448.9 L464.8 447.0 L466.3 445.0 L467.7 443.0 L469.2 441.1 L470.7 439.2 L472.2 437.3 L473.7 435.3 L475.2 433.4 L476.8 431.5 L478.3 429.6 L479.9 427.8 L481.5 425.9 L483.1 424.0 L484.7 422.2 L486.3 420.3 L488.0 418.5 L489.6 416.6 L491.3 414.8 L492.9 412.9 L494.6 411.1 L496.3 409.3 L498.0 407.4 L499.7 405.6 L501.4 403.8 L503.1 402.0 L504.8 400.1 L506.5 398.3 L508.3 396.5 L510.0 394.6 L511.7 392.8 L513.5 391.0 L515.2 389.1 L516.9 387.3 L518.7 385.4 L520.5 383.5 L522.2 381.7 L524.0 379.8 L525.8 377.9 L527.5 376.0 L529.3 374.1 L531.1 372.2 L532.9 370.3 L534.7 368.4 L536.6 366.5 L538.4 364.5 L540.2 362.6 L542.1 360.6 L544.0 358.7 L545.8 356.7 L547.7 354.8 L549.7 352.8 L551.6 350.8 L553.5 348.9 L555.5 346.9 L557.5 344.9 L559.5 342.9 L561.5 341.0 L563.5 339.0 L565.6 337.0 L567.7 335.1 L569.8 333.1 L572.0 331.2 L574.1 329.3 L576.3 327.3 L578.5 325.4 L580.8 323.5 L583.1 321.7 L585.4 319.8 L587.7 318.0 L590.1 316.1 L592.5 314.3 L594.9 312.6 L597.3 310.8 L599.8 309.1 L602.3 307.4 L604.9 305.7 L607.5 304.1 L610.1 302.5 L612.7 300.9 L615.4 299.3 L618.1 297.8 L620.8 296.3 L623.5 294.9 L626.3 293.5 L629.1 292.1 L631.9 290.8 L634.8 289.5 L637.7 288.3 L640.6 287.1 L643.5 285.9 L646.4 284.8 L649.4 283.7 L652.4 282.7 L655.4 281.7 L658.5 280.7 L661.5 279.8 L664.6 278.9 L667.7 278.1 L670.8 277.4 L673.9 276.6 L677.0 275.9 L680.1 275.3 L683.3 274.7 L686.5 274.1 L689.6 273.6 L692.8 273.2 L696.0 272.8 L699.2 272.4 L702.4 272.0 L705.6 271.8 L708.9 271.5 L712.1 271.3 L715.3 271.2 L718.5 271.1 L721.8 271.0 L725.0 271.0 L728.2 271.0 L731.5 271.1 L734.7 271.2 L737.9 271.4 L741.1 271.6 L744.4 271.8 L747.6 272.1 L750.8 272.4 L754.0 272.8 L757.2 273.3 L760.4 273.7 L763.5 274.3 L766.7 274.8 L769.8 275.4 L773.0 276.1 L776.1 276.8 L779.2 277.5 L782.3 278.3 L785.4 279.2 L788.4 280.1 L791.5 281.0 L794.5 282.0 L797.5 283.0 L800.5 284.1 L803.5 285.2 L806.4 286.3 L809.3 287.5 L812.2 288.8 L815.0 290.1 L817.9 291.4 L820.7 292.7 L823.5 294.2 L826.2 295.6 L829.0 297.1 L831.6 298.6 L834.3 300.2 L837.0 301.8 L839.6 303.4 L842.1 305.0 L844.7 306.7 L847.2 308.5 L849.7 310.2 L852.1 312.0 L854.5 313.8 L856.9 315.6 L859.3 317.5 L861.6 319.3 L863.9 321.2 L866.2 323.1 L868.4 325.0 L870.6 327.0 L872.8 328.9 L874.9 330.9 L877.1 332.8 L879.2 334.8 L881.2 336.8 L883.3 338.8 L885.3 340.8 L887.3 342.8 L889.3 344.8 L891.3 346.7 L893.2 348.7 L895.2 350.7 L897.1 352.7 L899.0 354.7 L900.8 356.6 L902.7 358.6 L904.6 360.5 L906.4 362.5 L908.3 364.4 L910.1 366.3 L911.9 368.3 L913.7 370.2 L915.5 372.0 L917.3 373.9 L919.1 375.8 L920.9 377.7 L922.7 379.5 L924.5 381.4 L926.3 383.2 L928.1 385.0 L929.9 386.8 L931.6 388.6 L933.4 390.4 L935.2 392.2 L937.0 394.0 L938.7 395.8 L940.5 397.6 L942.3 399.3 L944.1 401.1 L945.8 402.9 L947.6 404.7 L949.3 406.4 L951.1 408.2 L952.8 410.0 L954.6 411.7 L956.3 413.5 L958.0 415.3 L959.7 417.1 L961.4 418.9 L963.1 420.7 L964.8 422.5 L966.4 424.3 L968.1 426.2 L969.7 428.0 L971.4 429.9 L973.0 431.7 L974.5 433.6 L976.1 435.5 L977.7 437.4 L979.2 439.3 L980.7 441.2 L982.2 443.1 L983.6 445.1 L985.1 447.0 L986.5 449.0 L987.9 450.9 L989.3 452.9 L990.6 454.9 L992.0 456.9 L993.3 459.0 L994.6 461.0 L995.8 463.0 L997.1 465.1 L998.3 467.2 L999.5 469.2 L1000.7 471.3 L1001.8 473.4 L1003.0 475.5 L1004.1 477.6 L1005.2 479.7 L1006.3 481.8 L1007.4 483.9 L1008.5 486.0 L1009.5 488.1 L1010.6 490.3 L1011.6 492.4 L1012.6 494.5 L1013.7 496.7 L1014.7 498.8 L1015.7 501.0 L1016.7 503.1 L1017.7 505.3 L1018.7 507.4 L1019.7 509.6 L1020.7 511.7 L1021.7 513.9 L1022.7 516.1 L1023.7 518.3 L1024.7 520.4 L1025.8 522.6 L1026.8 524.8 L1027.8 527.0 L1028.8 529.2 L1029.9 531.4 L1030.9 533.6 L1032.0 535.8 L1033.0 538.0 L1034.1 540.2 L1035.2 542.5 L1036.2 544.7 L1037.3 547.0 L1038.4 549.2 L1039.5 551.5 L1040.6 553.8 L1041.7 556.1 L1042.8 558.4 L1043.9 560.7 L1045.0 563.0 L1046.1 565.3 L1047.1 567.7 L1048.2 570.1 L1049.3 572.4 L1050.4 574.8 L1051.4 577.2 L1052.5 579.7 L1053.5 582.1 L1054.6 584.6 L1055.6 587.0 L1056.6 589.5 L1057.5 592.0 L1058.5 594.5 L1059.4 597.0 L1060.3 599.6 L1061.2 602.1 L1062.1 604.7 L1062.9 607.3 L1063.7 609.9 L1064.5 612.5 L1065.2 615.1 L1065.9 617.7 L1066.6 620.4 L1067.2 623.0 L1067.8 625.7 L1068.4 628.4 L1068.9 631.1 L1069.4 633.8 L1069.9 636.5 L1070.3 639.2 L1070.6 641.9 L1070.9 644.6 L1071.2 647.4 L1071.5 650.1 L1071.6 652.9 L1071.8 655.6 L1071.9 658.4 L1071.9 661.1 L1071.9 663.9 L1071.9 666.7 L1071.8 669.4 L1071.7 672.2 L1071.5 674.9 L1071.3 677.7 L1071.0 680.5 L1070.7 683.2 L1070.3 686.0 L1069.9 688.7 L1069.4 691.5 L1068.9 694.2 L1068.3 697.0 L1067.7 699.7 L1067.1 702.4 L1066.3 705.1 L1065.6 707.8 L1064.8 710.5 L1063.9 713.2 L1063.0 715.9 L1062.1 718.6 L1061.1 721.2 L1060.1 723.9 L1059.0 726.5 L1057.8 729.1 L1056.6 731.7 L1055.4 734.3 L1054.1 736.8 L1052.8 739.4 L1051.4 741.9 L1050.0 744.4 L1048.5 746.9 L1047.0 749.4 L1045.4 751.8 L1043.7 754.2 L1042.1 756.6 L1040.3 759.0 L1038.6 761.3 L1036.7 763.6 L1034.9 765.9 L1033.0 768.1 L1031.0 770.4 L1029.0 772.5 L1026.9 774.7 L1024.8 776.8 L1022.6 778.9 L1020.4 781.0 L1018.2 783.0 L1015.9 785.0 L1013.6 786.9 L1011.2 788.8 L1008.8 790.7 L1006.3 792.5 L1003.8 794.3 L1001.3 796.0 L998.7 797.8 L996.1 799.4 L993.4 801.0 L990.8 802.6 L988.1 804.2 L985.3 805.7 L982.5 807.1 L979.7 808.6 L976.9 809.9 L974.0 811.3 L971.2 812.6 L968.2 813.8 L965.3 815.1 L962.4 816.2 L959.4 817.4 L956.4 818.5 L953.5 819.5 L950.4 820.6 L947.4 821.6 L944.4 822.5 L941.4 823.4 L938.3 824.3 L935.3 825.2 L932.3 826.0 L929.2 826.8 L926.2 827.6 L923.1 828.3 L920.1 829.1 L917.0 829.8 L914.0 830.4 L910.9 831.1 L907.9 831.7 L904.9 832.3 L901.9 832.9 L898.9 833.5 L895.9 834.1 L892.9 834.6 L889.9 835.1 L886.9 835.7 L884.0 836.2 L881.1 836.7 L878.1 837.2 L875.2 837.6 L872.3 838.1 L869.4 838.6 L866.5 839.0 L863.7 839.5 L860.8 839.9 L858.0 840.4 L855.1 840.8 L852.3 841.3 L849.5 841.7 L846.7 842.1 L843.9 842.6 L841.1 843.0 L838.3 843.4 L835.6 843.9 L832.8 844.3 L830.1 844.7 L827.3 845.1 L824.6 845.5 L821.9 845.9 L819.2 846.3 L816.4 846.7 L813.7 847.1 L811.0 847.5 L808.3 847.9 L805.6 848.3 L802.9 848.7 L800.2 849.0 L797.6 849.4 L794.9 849.8 L792.2 850.1 L789.5 850.4 L786.8 850.8 L784.1 851.1 L781.4 851.4 L778.8 851.7 L776.1 851.9 L773.4 852.2 L770.7 852.5 L768.0 852.7 L765.3 852.9 L762.6 853.1 L760.0 853.3 L757.3 853.5 L754.6 853.7 L751.9 853.8 L749.2 854.0 L746.5 854.1 L743.8 854.2 L741.1 854.3 L738.4 854.3 L735.8 854.4 L733.1 854.4 L730.4 854.4 L727.7 854.4 L725.0 854.4 L722.3 854.4 L719.6 854.3 L716.9 854.3 L714.3 854.2 L711.6 854.1 L708.9 854.0 L706.2 853.9 L703.5 853.8 L700.8 853.6 L698.1 853.5 L695.5 853.3 L692.8 853.1 L690.1 852.9 L687.4 852.7 L684.7 852.5 L682.1 852.3 L679.4 852.0 L676.7 851.8 L674.0 851.6 L671.3 851.3 L668.6 851.0 L665.9 850.8 L663.3 850.5 L660.6 850.2 L657.9 849.9 L655.2 849.6 L652.5 849.3 L649.8 849.0 L647.0 848.7 L644.3 848.4 L641.6 848.1 L638.9 847.8 L636.1 847.5 L633.4 847.2 L630.7 846.8 L627.9 846.5 L625.1 846.2 L622.4 845.8 L619.6 845.5 L616.8 845.1 L614.0 844.8 L611.2 844.4 L608.4 844.0 L605.6 843.7 L602.8 843.3 L599.9 842.9 L597.1 842.5 L594.2 842.1 L591.4 841.7 L588.5 841.3 L585.6 840.8 L582.7 840.4 L579.8 839.9 L576.9 839.5 L574.0 839.0 L571.1 838.5 L568.1 838.0 L565.2 837.5 L562.2 836.9 L559.3 836.4 L556.3 835.8 L553.3 835.2 L550.3 834.6 L547.4 834.0 L544.4 833.3 L541.4 832.6 L538.4 831.9 L535.4 831.2 L532.4 830.5 L529.4 829.7 L526.4 828.9 L523.4 828.1 L520.5 827.2 L517.5 826.3 L514.5 825.4 L511.5 824.5 L508.6 823.5 L505.6 822.5 L502.7 821.5 L499.7 820.4 L496.8 819.3 L493.9 818.1 L491.0 817.0 L488.1 815.8 L485.2 814.5 L482.4 813.2 L479.6 811.9 L476.7 810.6 L474.0 809.2 L471.2 807.8 L468.5 806.3 L465.7 804.8 L463.0 803.3 L460.4 801.7 L457.8 800.1 L455.2 798.5 L452.6 796.8 L450.0 795.1 L447.5 793.3 L445.1 791.5 L442.6 789.7 L440.2 787.8 L437.9 785.9 L435.5 784.0 L433.3 782.0 L431.0 780.0 L428.8 778.0 L426.6 775.9 L424.5 773.8 L422.5 771.7 L420.4 769.5 L418.4 767.3 L416.5 765.1 L414.6 762.9 L412.8 760.6 L411.0 758.3 L409.2 755.9 L407.5 753.6 L405.9 751.2 L404.3 748.8 L402.7 746.3 L401.2 743.9 L399.7 741.4 L398.3 738.9 L397.0 736.3 L395.7 733.8 L394.4 731.2 L393.2 728.7 L392.1 726.1 L391.0 723.4 L390.0 720.8 L389.0 718.2 L388.0 715.5 L387.1 712.8 L386.3 710.2 L385.5 707.5 L384.8 704.8 L384.1 702.0 L383.5 699.3 L382.9 696.6 L382.3 693.9 L381.9 691.1 L381.4 688.4 L381.0 685.6 L380.7 682.9 L380.4 680.1 L380.2 677.3 L380.0 674.6 L379.8 671.8 L379.7 669.1 L379.7 666.3 L379.7 663.5 L379.7 660.8 L379.8 658.0 L379.9 655.3 L380.1 652.5 L380.3 649.8 L380.6 647.1 L380.8 644.4 L381.2 641.6 L381.5 638.9 L381.9 636.2 L382.4 633.5 L382.9 630.9 L383.4 628.2 L383.9 625.5 L384.5 622.9 L385.1 620.2 L385.7 617.6 L386.4 615.0 L387.1 612.4 L387.8 609.8 L388.5 607.2 L389.3 604.6 L390.1 602.1 L390.9 599.5 L391.7 597.0 L392.6 594.5 L393.5 592.0 Z" fill="#F3D1BB" stroke="#111" stroke-width="1.1"/>
<path d="M725 699.5 L725 854 L726 869" stroke="#222" stroke-width="1" fill="none"/>
<path d="M457 459 L617.5 532.7 M993 458 L835.3 534" stroke="#333" stroke-width="0.9" fill="none"/>
<path d="M470.8 464.4 L471.4 463.5 L472.0 462.6 L472.6 461.8 L473.1 460.9 L473.7 460.0 L474.3 459.1 L475.0 458.3 L475.6 457.4 L476.2 456.5 L476.8 455.7 L477.4 454.8 L478.0 453.9 L478.7 453.1 L479.3 452.2 L479.9 451.4 L480.6 450.5 L481.2 449.7 L481.8 448.8 L482.5 448.0 L483.1 447.1 L483.8 446.3 L484.5 445.4 L485.1 444.6 L485.8 443.7 L486.5 442.9 L487.1 442.0 L487.8 441.2 L488.5 440.4 L489.2 439.5 L489.9 438.7 L490.6 437.9 L491.2 437.0 L491.9 436.2 L492.6 435.4 L493.4 434.5 L494.1 433.7 L494.8 432.9 L495.5 432.0 L496.2 431.2 L496.9 430.4 L497.6 429.6 L498.4 428.7 L499.1 427.9 L499.8 427.1 L500.6 426.3 L501.3 425.4 L502.0 424.6 L502.8 423.8 L503.5 423.0 L504.3 422.1 L505.0 421.3 L505.8 420.5 L506.5 419.7 L507.3 418.8 L508.0 418.0 L508.8 417.2 L509.6 416.4 L510.3 415.5 L511.1 414.7 L511.9 413.9 L512.6 413.0 L513.4 412.2 L514.2 411.4 L515.0 410.6 L515.7 409.7 L516.5 408.9 L517.3 408.1 L518.1 407.2 L518.9 406.4 L519.7 405.5 L520.4 404.7 L521.2 403.9 L522.0 403.0 L522.8 402.2 L523.6 401.4 L524.4 400.5 L525.2 399.7 L526.0 398.8 L526.8 398.0 L527.6 397.1 L528.4 396.3 L529.2 395.4 L530.0 394.6 L530.8 393.7 L531.6 392.9 L532.4 392.0 L533.2 391.2 L534.0 390.3 L534.9 389.4 L535.7 388.6 L536.5 387.7 L537.3 386.8 L538.1 386.0 L538.9 385.1 L539.7 384.2 L540.6 383.4 L541.4 382.5 L542.2 381.6 L543.0 380.8 L543.8 379.9 L544.7 379.0 L545.5 378.1 L546.3 377.3 L547.2 376.4 L548.0 375.5 L548.8 374.6 L549.7 373.7 L550.5 372.9 L551.3 372.0 L552.2 371.1 L553.0 370.2 L553.9 369.3 L554.7 368.4 L555.5 367.6 L556.4 366.7 L557.2 365.8 L558.1 364.9 L559.0 364.0 L559.8 363.1 L560.7 362.2 L561.5 361.4 L562.4 360.5 L563.3 359.6 L564.1 358.7 L565.0 357.8 L565.9 356.9 L566.8 356.0 L567.6 355.2 L568.5 354.3 L569.4 353.4 L570.3 352.5 L571.2 351.6 L572.1 350.8 L573.0 349.9 L573.9 349.0 L574.8 348.2 L575.7 347.3 L576.6 346.4 L577.6 345.5 L578.5 344.7 L579.4 343.8 L580.3 343.0 L581.3 342.1 L582.2 341.3 L583.2 340.4 L584.1 339.6 L585.1 338.7 L586.0 337.9 L587.0 337.0 L587.9 336.2 L588.9 335.4 L589.9 334.5 L590.9 333.7 L591.9 332.9 L592.8 332.1 L593.8 331.3 L594.8 330.4 L595.8 329.6 L596.8 328.8 L597.9 328.0 L598.9 327.3 L599.9 326.5 L600.9 325.7 L602.0 324.9 L603.0 324.1 L604.0 323.4 L605.1 322.6 L606.1 321.9 L607.2 321.1 L608.2 320.4 L609.3 319.6 L610.4 318.9 L611.5 318.2 L612.5 317.4 L613.6 316.7 L614.7 316.0 L615.8 315.3 L616.9 314.6 L618.0 313.9 L619.1 313.3 L620.3 312.6 L621.4 311.9 L622.5 311.3 L623.6 310.6 L624.8 310.0 L625.9 309.3 L627.1 308.7 L628.2 308.1 L629.4 307.4 L630.6 306.8 L631.7 306.2 L632.9 305.6 L634.1 305.0 L635.2 304.5 L636.4 303.9 L637.6 303.3 L638.8 302.8 L640.0 302.2 L641.2 301.7 L642.4 301.1 L643.7 300.6 L644.9 300.1 L646.1 299.6 L647.3 299.1 L648.6 298.6 L649.8 298.1 L651.0 297.6 L652.3 297.1 L653.5 296.7 L654.8 296.2 L656.0 295.8 L657.3 295.3 L658.6 294.9 L659.8 294.5 L661.1 294.1 L662.4 293.7 L663.7 293.3 L664.9 292.9 L666.2 292.5 L667.5 292.1 L668.8 291.8 L670.1 291.4 L671.4 291.1 L672.7 290.7 L674.0 290.4 L675.3 290.1 L676.6 289.8 L678.0 289.5 L679.3 289.2 L680.6 288.9 L681.9 288.6 L683.3 288.4 L684.6 288.1 L685.9 287.8 L687.2 287.6 L688.6 287.4 L689.9 287.1 L691.3 286.9 L692.6 286.7 L694.0 286.5 L695.3 286.3 L696.7 286.1 L698.0 286.0 L699.4 285.8 L700.7 285.7 L702.1 285.5 L703.4 285.4 L704.8 285.2 L706.1 285.1 L707.5 285.0 L708.9 284.9 L710.2 284.8 L711.6 284.7 L713.0 284.6 L714.3 284.6 L715.7 284.5 L717.0 284.4 L718.4 284.4 L719.8 284.4 L721.2 284.3 L722.5 284.3 L723.9 284.3 L725.3 284.3 L726.6 284.3 L728.0 284.3 L729.4 284.4 L730.7 284.4 L732.1 284.4 L733.5 284.5 L734.8 284.5 L736.2 284.6 L737.5 284.7 L738.9 284.8 L740.3 284.9 L741.6 285.0 L743.0 285.1 L744.4 285.2 L745.7 285.3 L747.1 285.5 L748.4 285.6 L749.8 285.8 L751.1 285.9 L752.5 286.1 L753.8 286.3 L755.2 286.5 L756.5 286.7 L757.8 286.9 L759.2 287.1 L760.5 287.3 L761.9 287.6 L763.2 287.8 L764.5 288.1 L765.8 288.3 L767.2 288.6 L768.5 288.9 L769.8 289.1 L771.1 289.4 L772.4 289.7 L773.7 290.1 L775.0 290.4 L776.3 290.7 L777.6 291.1 L778.9 291.4 L780.2 291.8 L781.5 292.1 L782.8 292.5 L784.1 292.9 L785.4 293.3 L786.6 293.7 L787.9 294.1 L789.2 294.5 L790.4 294.9 L791.7 295.4 L793.0 295.8 L794.2 296.3 L795.5 296.7 L796.7 297.2 L797.9 297.7 L799.2 298.1 L800.4 298.6 L801.6 299.1 L802.8 299.7 L804.1 300.2 L805.3 300.7 L806.5 301.2 L807.7 301.8 L808.9 302.3 L810.1 302.9 L811.3 303.5 L812.4 304.0 L813.6 304.6 L814.8 305.2 L816.0 305.8 L817.1 306.4 L818.3 307.0 L819.4 307.7 L820.6 308.3 L821.7 308.9 L822.9 309.6 L824.0 310.2 L825.1 310.9 L826.2 311.6 L827.4 312.2 L828.5 312.9 L829.6 313.6 L830.7 314.3 L831.8 315.0 L832.9 315.7 L833.9 316.4 L835.0 317.2 L836.1 317.9 L837.2 318.6 L838.2 319.4 L839.3 320.1 L840.4 320.9 L841.4 321.6 L842.4 322.4 L843.5 323.2 L844.5 324.0 L845.5 324.7 L846.6 325.5 L847.6 326.3 L848.6 327.1 L849.6 327.9 L850.6 328.7 L851.6 329.5 L852.6 330.4 L853.6 331.2 L854.6 332.0 L855.6 332.8 L856.5 333.7 L857.5 334.5 L858.5 335.4 L859.4 336.2 L860.4 337.1 L861.3 337.9 L862.3 338.8 L863.2 339.6 L864.2 340.5 L865.1 341.4 L866.0 342.2 L867.0 343.1 L867.9 344.0 L868.8 344.8 L869.7 345.7 L870.6 346.6 L871.5 347.5 L872.4 348.4 L873.3 349.2 L874.2 350.1 L875.1 351.0 L876.0 351.9 L876.9 352.8 L877.8 353.7 L878.7 354.6 L879.5 355.5 L880.4 356.4 L881.3 357.2 L882.2 358.1 L883.0 359.0 L883.9 359.9 L884.8 360.8 L885.6 361.7 L886.5 362.6 L887.3 363.5 L888.2 364.4 L889.1 365.3 L889.9 366.2 L890.8 367.1 L891.6 368.0 L892.5 368.8 L893.3 369.7 L894.1 370.6 L895.0 371.5 L895.8 372.4 L896.7 373.3 L897.5 374.2 L898.3 375.0 L899.2 375.9 L900.0 376.8 L900.9 377.7 L901.7 378.6 L902.5 379.4 L903.4 380.3 L904.2 381.2 L905.0 382.0 L905.9 382.9 L906.7 383.8 L907.5 384.6 L908.4 385.5 L909.2 386.4 L910.0 387.2 L910.8 388.1 L911.7 388.9 L912.5 389.8 L913.3 390.6 L914.2 391.5 L915.0 392.3 L915.8 393.2 L916.6 394.0 L917.5 394.9 L918.3 395.7 L919.1 396.5 L919.9 397.4 L920.8 398.2 L921.6 399.0 L922.4 399.8 L923.2 400.7 L924.0 401.5 L924.9 402.3 L925.7 403.1 L926.5 404.0 L927.3 404.8 L928.1 405.6 L928.9 406.4 L929.7 407.2 L930.5 408.0 L931.4 408.9 L932.2 409.7 L933.0 410.5 L933.8 411.3 L934.6 412.1 L935.4 412.9 L936.2 413.7 L937.0 414.5 L937.8 415.3 L938.6 416.1 L939.4 416.9 L940.1 417.7 L940.9 418.5 L941.7 419.3 L942.5 420.1 L943.3 420.9 L944.0 421.7 L944.8 422.5 L945.6 423.3 L946.4 424.1 L947.1 424.9 L947.9 425.7 L948.6 426.5 L949.4 427.3 L950.1 428.1 L950.9 428.9 L951.6 429.7 L952.4 430.5 L953.1 431.3 L953.9 432.1 L954.6 432.9 L955.3 433.7 L956.0 434.5 L956.8 435.3 L957.5 436.2 L958.2 437.0 L958.9 437.8 L959.6 438.6 L960.3 439.4 L961.0 440.2 L961.7 441.0 L962.4 441.9 L963.1 442.7 L963.7 443.5 L964.4 444.3 L965.1 445.2 L965.7 446.0 L966.4 446.8 L967.1 447.6 L967.7 448.5 L968.4 449.3 L969.0 450.1 L969.6 451.0 L970.3 451.8 L970.9 452.7 L971.5 453.5 L972.1 454.4 L972.8 455.2 L973.4 456.1 L974.0 456.9 L974.6 457.8 L975.2 458.6 L975.8 459.5 L976.4 460.4 L977.0 461.2 L977.5 462.1 L978.1 463.0 L978.7 463.8 L979.3 464.7 L979.8 465.6 L980.4 466.5 L980.9 467.4 L981.5 468.2 L982.0 469.1 L982.6 470.0 L983.1 470.9 L983.7 471.8 L984.2 472.7 L984.7 473.6 L985.2 474.5 L985.8 475.4 L986.3 476.3 L986.8 477.2 L987.3 478.1 L987.8 479.1 L988.3 480.0 L988.8 480.9 L989.3 481.8 L989.8 482.7 L990.3 483.7 L990.8 484.6 L991.3 485.5 L991.8 486.5 L992.3 487.4 L992.7 488.3 L993.2 489.3 L993.7 490.2 L994.2 491.2 L994.6 492.1 L995.1 493.1 L995.6 494.0 L996.1 495.0 L996.5 495.9 L997.0 496.9 L997.5 497.8 L997.9 498.8 L998.4 499.7 L998.8 500.7 L999.3 501.7 L999.8 502.6 L1000.2 503.6 L1000.7 504.6 L1001.1 505.6 L1001.6 506.5 L1002.0 507.5 L1002.5 508.5 L1003.0 509.5 L1003.4 510.4 L1003.9 511.4 L1004.3 512.4 L1004.8 513.4 L1005.2 514.4 L1005.7 515.4 L1006.2 516.4 L1006.6 517.4 L1007.1 518.3 L1007.5 519.3 L1008.0 520.3 L1008.5 521.3 L1008.9 522.3 L1009.4 523.3 L1009.9 524.3 L1010.3 525.3 L1010.8 526.3 L1011.3 527.3 L1011.7 528.4 L1012.2 529.4 L1012.7 530.4 L1013.2 531.4 L1013.6 532.4 L1014.1 533.4 L1014.6 534.4 L1015.1 535.4 L1015.5 536.4 L1016.0 537.5 L1016.5 538.5 L1017.0 539.5 L1017.5 540.5 L1018.0 541.5 L1018.4 542.6 L1018.9 543.6 L1019.4 544.6 L1019.9 545.6 L1020.4 546.7 L1020.9 547.7 L1021.4 548.7 L1021.9 549.7 L1022.4 550.8 L1022.9 551.8 L1023.4 552.8 L1023.9 553.9 L1024.4 554.9 L1024.9 556.0 L1025.4 557.0 L1025.9 558.0 L1026.4 559.1 L1026.9 560.1 L1027.4 561.2 L1027.9 562.2 L1028.4 563.3 L1028.9 564.3 L1029.3 565.4 L1029.8 566.4 L1030.3 567.5 L1030.8 568.5 L1031.3 569.6 L1031.8 570.6 L1032.3 571.7 L1032.8 572.7 L1033.3 573.8 L1033.8 574.9 L1034.3 575.9 L1034.7 577.0 L1035.2 578.1 L1035.7 579.2 L1036.2 580.2 L1036.7 581.3 L1037.1 582.4 L1037.6 583.5 L1038.1 584.5 L1038.5 585.6 L1039.0 586.7 L1039.4 587.8 L1039.9 588.9 L1040.3 590.0 L1040.8 591.1 L1041.2 592.1 L1041.7 593.2 L1042.1 594.3 L1042.5 595.4 L1043.0 596.5 L1043.4 597.6 L1043.8 598.8 L1044.2 599.9 L1044.6 601.0 L1045.0 602.1 L1045.4 603.2 L1045.8 604.3 L1046.2 605.4 L1046.6 606.5 L1046.9 607.7 L1047.3 608.8 L1047.7 609.9 L1048.0 611.0 L1048.4 612.2 L1048.7 613.3 L1049.1 614.4 L1049.4 615.5 L1049.7 616.7 L1050.0 617.8 L1050.4 619.0 L1050.7 620.1 L1051.0 621.2 L1051.3 622.4 L1051.5 623.5 L1051.8 624.7 L1052.1 625.8 L1052.3 627.0 L1052.6 628.1 L1052.8 629.3 L1053.1 630.4 L1053.3 631.6 L1053.5 632.7 L1053.8 633.9 L1054.0 635.0 L1054.2 636.2 L1054.4 637.4 L1054.5 638.5 L1054.7 639.7 L1054.9 640.8 L1055.0 642.0 L1055.2 643.2 L1055.3 644.3 L1055.5 645.5 L1055.6 646.7 L1055.7 647.9 L1055.8 649.0 L1055.9 650.2 L1056.0 651.4 L1056.1 652.5 L1056.2 653.7 L1056.2 654.9 L1056.3 656.1 L1056.3 657.2 L1056.4 658.4 L1056.4 659.6 L1056.4 660.8 L1056.4 661.9 L1056.4 663.1 L1056.4 664.3 L1056.4 665.5 L1056.4 666.7 L1056.4 667.8 L1056.3 669.0 L1056.3 670.2 L1056.2 671.4 L1056.1 672.5 L1056.0 673.7 L1056.0 674.9 L1055.9 676.1 L1055.7 677.3 L1055.6 678.4 L1055.5 679.6 L1055.4 680.8 L1055.2 682.0 L1055.1 683.1 L1054.9 684.3 L1054.7 685.5 L1054.6 686.6 L1054.4 687.8 L1054.2 689.0 L1054.0 690.2 L1053.7 691.3 L1053.5 692.5 L1053.3 693.7 L1053.0 694.8 L1052.8 696.0 L1052.5 697.1 L1052.2 698.3 L1051.9 699.5 L1051.6 700.6 L1051.3 701.8 L1051.0 702.9 L1050.7 704.1 L1050.4 705.2 L1050.0 706.4 L1049.7 707.5 L1049.3 708.7 L1049.0 709.8 L1048.6 710.9 L1048.2 712.1 L1047.8 713.2 L1047.4 714.3 L1047.0 715.5 L1046.6 716.6 L1046.1 717.7 L1045.7 718.8 L1045.2 719.9 L1044.8 721.1 L1044.3 722.2 L1043.8 723.3 L1043.3 724.4 L1042.8 725.5 L1042.3 726.6 L1041.8 727.7 L1041.3 728.8 L1040.8 729.8 L1040.2 730.9 L1039.7 732.0 L1039.1 733.1 L1038.5 734.2 L1037.9 735.2 L1037.3 736.3 L1036.7 737.3 L1036.1 738.4 L1035.5 739.4 L1034.9 740.5 L1034.3 741.5 L1033.6 742.6 L1033.0 743.6 L1032.3 744.6 L1031.6 745.6 L1030.9 746.6 L1030.2 747.7 L1029.5 748.7 L1028.8 749.7 L1028.1 750.7 L1027.4 751.6 L1026.6 752.6 L1025.9 753.6 L1025.1 754.6 L1024.4 755.5 L1023.6 756.5 L1022.8 757.5 L1022.0 758.4 L1021.2 759.4 L1020.4 760.3 L1019.6 761.2 L1018.8 762.1 L1017.9 763.1 L1017.1 764.0 L1016.2 764.9 L1015.4 765.8 L1014.5 766.7 L1013.6 767.6 L1012.7 768.4 L1011.8 769.3 L1010.9 770.2 L1010.0 771.0 L1009.1 771.9 L1008.2 772.7 L1007.2 773.6 L1006.3 774.4 L1005.3 775.2 L1004.4 776.0 L1003.4 776.9 L1002.4 777.7 L1001.4 778.5 L1000.4 779.2 L999.4 780.0 L998.4 780.8 L997.4 781.6 L996.3 782.3 L995.3 783.1 L994.2 783.8 L993.2 784.6 L992.1 785.3 L991.1 786.0 L990.0 786.7 L988.9 787.4 L987.8 788.1 L986.7 788.8 L985.6 789.5 L984.5 790.2 L983.4 790.8 L982.2 791.5 L981.1 792.2 L980.0 792.8 L978.8 793.4 L977.7 794.1 L976.5 794.7 L975.3 795.3 L974.2 795.9 L973.0 796.5 L971.8 797.1 L970.6 797.7 L969.4 798.3 L968.2 798.8 L967.0 799.4 L965.8 800.0 L964.6 800.5 L963.3 801.0 L962.1 801.6 L960.9 802.1 L959.6 802.6 L958.4 803.1 L957.1 803.6 L955.9 804.1 L954.6 804.6 L953.3 805.1 L952.1 805.6 L950.8 806.1 L949.5 806.5 L948.2 807.0 L947.0 807.4 L945.7 807.9 L944.4 808.3 L943.1 808.7 L941.8 809.1 L940.5 809.6 L939.2 810.0 L937.9 810.4 L936.6 810.8 L935.2 811.2 L933.9 811.5 L932.6 811.9 L931.3 812.3 L930.0 812.7 L928.6 813.0 L927.3 813.4 L926.0 813.7 L924.7 814.1 L923.3 814.4 L922.0 814.8 L920.7 815.1 L919.3 815.4 L918.0 815.7 L916.7 816.1 L915.3 816.4 L914.0 816.7 L912.6 817.0 L911.3 817.3 L910.0 817.6 L908.6 817.9 L907.3 818.1 L905.9 818.4 L904.6 818.7 L903.2 819.0 L901.9 819.2 L900.6 819.5 L899.2 819.8 L897.9 820.0 L896.5 820.3 L895.2 820.5 L893.9 820.8 L892.5 821.0 L891.2 821.3 L889.9 821.5 L888.5 821.8 L887.2 822.0 L885.8 822.3 L884.5 822.5 L883.2 822.7 L881.9 822.9 L880.5 823.2 L879.2 823.4 L877.9 823.6 L876.5 823.8 L875.2 824.1 L873.9 824.3 L872.6 824.5 L871.3 824.7 L869.9 824.9 L868.6 825.1 L867.3 825.4 L866.0 825.6 L864.7 825.8 L863.4 826.0 L862.1 826.2 L860.8 826.4 L859.5 826.6 L858.2 826.8 L856.9 827.0 L855.6 827.2 L854.3 827.4 L853.0 827.6 L851.7 827.8 L850.4 828.0 L849.1 828.2 L847.8 828.4 L846.5 828.6 L845.3 828.8 L844.0 829.0 L842.7 829.2 L841.4 829.4 L840.1 829.6 L838.9 829.8 L837.6 830.0 L836.3 830.2 L835.1 830.4 L833.8 830.6 L832.6 830.8 L831.3 831.0 L830.0 831.2 L828.8 831.4 L827.5 831.5 L826.3 831.7 L825.0 831.9 L823.8 832.1 L822.5 832.3 L821.3 832.5 L820.0 832.7 L818.8 832.9 L817.6 833.0 L816.3 833.2 L815.1 833.4 L813.9 833.6 L812.6 833.8 L811.4 834.0 L810.2 834.1 L808.9 834.3 L807.7 834.5 L806.5 834.7 L805.3 834.8 L804.1 835.0 L802.8 835.2 L801.6 835.4 L800.4 835.5 L799.2 835.7 L798.0 835.9 L796.8 836.0 L795.6 836.2 L794.3 836.3 L793.1 836.5 L791.9 836.7 L790.7 836.8 L789.5 837.0 L788.3 837.1 L787.1 837.3 L785.9 837.4 L784.7 837.5 L783.5 837.7 L782.3 837.8 L781.1 838.0 L779.9 838.1 L778.7 838.2 L777.5 838.4 L776.3 838.5 L775.1 838.6 L774.0 838.7 L772.8 838.9 L771.6 839.0 L770.4 839.1 L769.2 839.2 L768.0 839.3 L766.8 839.4 L765.6 839.5 L764.4 839.6 L763.2 839.7 L762.1 839.8 L760.9 839.9 L759.7 840.0 L758.5 840.1 L757.3 840.1 L756.1 840.2 L755.0 840.3 L753.8 840.4 L752.6 840.4 L751.4 840.5 L750.2 840.6 L749.0 840.6 L747.9 840.7 L746.7 840.7 L745.5 840.8 L744.3 840.8 L743.1 840.9 L741.9 840.9 L740.8 840.9 L739.6 841.0 L738.4 841.0 L737.2 841.0 L736.0 841.0 L734.8 841.1 L733.7 841.1 L732.5 841.1 L731.3 841.1 L730.1 841.1 M476.0 466.9 L476.6 466.1 L477.2 465.2 L477.7 464.3 L478.3 463.5 L478.9 462.6 L479.5 461.8 L480.1 460.9 L480.7 460.1 L481.3 459.2 L481.9 458.4 L482.5 457.5 L483.1 456.7 L483.7 455.8 L484.4 455.0 L485.0 454.1 L485.6 453.3 L486.2 452.5 L486.9 451.6 L487.5 450.8 L488.1 450.0 L488.8 449.1 L489.4 448.3 L490.1 447.5 L490.7 446.6 L491.4 445.8 L492.1 445.0 L492.7 444.2 L493.4 443.3 L494.1 442.5 L494.8 441.7 L495.4 440.9 L496.1 440.0 L496.8 439.2 L497.5 438.4 L498.2 437.6 L498.9 436.8 L499.6 435.9 L500.3 435.1 L501.0 434.3 L501.7 433.5 L502.4 432.7 L503.2 431.8 L503.9 431.0 L504.6 430.2 L505.3 429.4 L506.1 428.6 L506.8 427.8 L507.5 426.9 L508.3 426.1 L509.0 425.3 L509.7 424.5 L510.5 423.7 L511.2 422.8 L512.0 422.0 L512.7 421.2 L513.5 420.4 L514.3 419.6 L515.0 418.7 L515.8 417.9 L516.6 417.1 L517.3 416.3 L518.1 415.4 L518.9 414.6 L519.6 413.8 L520.4 413.0 L521.2 412.1 L522.0 411.3 L522.8 410.5 L523.5 409.6 L524.3 408.8 L525.1 408.0 L525.9 407.1 L526.7 406.3 L527.5 405.4 L528.3 404.6 L529.1 403.8 L529.9 402.9 L530.7 402.1 L531.5 401.2 L532.3 400.4 L533.1 399.5 L533.9 398.7 L534.7 397.8 L535.5 397.0 L536.3 396.1 L537.1 395.3 L537.9 394.4 L538.7 393.5 L539.5 392.7 L540.3 391.8 L541.1 391.0 L542.0 390.1 L542.8 389.2 L543.6 388.4 L544.4 387.5 L545.2 386.6 L546.0 385.8 L546.9 384.9 L547.7 384.0 L548.5 383.1 L549.3 382.3 L550.2 381.4 L551.0 380.5 L551.8 379.6 L552.6 378.8 L553.5 377.9 L554.3 377.0 L555.1 376.1 L556.0 375.2 L556.8 374.4 L557.7 373.5 L558.5 372.6 L559.3 371.7 L560.2 370.8 L561.0 370.0 L561.9 369.1 L562.7 368.2 L563.6 367.3 L564.4 366.4 L565.3 365.5 L566.1 364.7 L567.0 363.8 L567.8 362.9 L568.7 362.0 L569.6 361.2 L570.4 360.3 L571.3 359.4 L572.2 358.5 L573.1 357.7 L573.9 356.8 L574.8 355.9 L575.7 355.1 L576.6 354.2 L577.5 353.3 L578.4 352.5 L579.3 351.6 L580.2 350.7 L581.1 349.9 L582.0 349.0 L582.9 348.2 L583.8 347.3 L584.7 346.5 L585.6 345.6 L586.6 344.8 L587.5 344.0 L588.4 343.1 L589.4 342.3 L590.3 341.5 L591.2 340.7 L592.2 339.8 L593.1 339.0 L594.1 338.2 L595.1 337.4 L596.0 336.6 L597.0 335.8 L598.0 335.0 L598.9 334.2 L599.9 333.4 L600.9 332.6 L601.9 331.9 L602.9 331.1 L603.9 330.3 L604.9 329.6 L605.9 328.8 L606.9 328.1 L607.9 327.3 L608.9 326.6 L610.0 325.8 L611.0 325.1 L612.0 324.4 L613.1 323.7 L614.1 322.9 L615.2 322.2 L616.2 321.5 L617.3 320.8 L618.3 320.2 L619.4 319.5 L620.5 318.8 L621.5 318.1 L622.6 317.5 L623.7 316.8 L624.8 316.2 L625.9 315.5 L627.0 314.9 L628.1 314.3 L629.2 313.6 L630.3 313.0 L631.4 312.4 L632.5 311.8 L633.7 311.2 L634.8 310.6 L635.9 310.1 L637.1 309.5 L638.2 308.9 L639.4 308.4 L640.5 307.8 L641.7 307.3 L642.8 306.8 L644.0 306.2 L645.2 305.7 L646.3 305.2 L647.5 304.7 L648.7 304.2 L649.9 303.7 L651.1 303.3 L652.3 302.8 L653.5 302.3 L654.7 301.9 L655.9 301.4 L657.1 301.0 L658.3 300.5 L659.5 300.1 L660.7 299.7 L662.0 299.3 L663.2 298.9 L664.4 298.5 L665.7 298.1 L666.9 297.8 L668.2 297.4 L669.4 297.0 L670.6 296.7 L671.9 296.3 L673.2 296.0 L674.4 295.7 L675.7 295.4 L676.9 295.1 L678.2 294.8 L679.5 294.5 L680.8 294.2 L682.0 293.9 L683.3 293.6 L684.6 293.4 L685.9 293.1 L687.2 292.9 L688.5 292.7 L689.8 292.4 L691.1 292.2 L692.4 292.0 L693.7 291.8 L695.0 291.6 L696.3 291.4 L697.6 291.2 L698.9 291.1 L700.2 290.9 L701.5 290.8 L702.8 290.6 L704.1 290.5 L705.4 290.4 L706.7 290.2 L708.1 290.1 L709.4 290.0 L710.7 289.9 L712.0 289.9 L713.3 289.8 L714.7 289.7 L716.0 289.7 L717.3 289.6 L718.6 289.6 L719.9 289.5 L721.3 289.5 L722.6 289.5 L723.9 289.5 L725.2 289.5 L726.6 289.5 L727.9 289.5 L729.2 289.5 L730.5 289.6 L731.9 289.6 L733.2 289.6 L734.5 289.7 L735.8 289.8 L737.1 289.8 L738.5 289.9 L739.8 290.0 L741.1 290.1 L742.4 290.2 L743.7 290.3 L745.0 290.5 L746.3 290.6 L747.6 290.7 L749.0 290.9 L750.3 291.0 L751.6 291.2 L752.9 291.4 L754.2 291.6 L755.5 291.8 L756.8 292.0 L758.1 292.2 L759.3 292.4 L760.6 292.6 L761.9 292.8 L763.2 293.1 L764.5 293.3 L765.8 293.6 L767.0 293.9 L768.3 294.1 L769.6 294.4 L770.8 294.7 L772.1 295.0 L773.4 295.3 L774.6 295.7 L775.9 296.0 L777.1 296.3 L778.4 296.7 L779.6 297.0 L780.9 297.4 L782.1 297.7 L783.3 298.1 L784.6 298.5 L785.8 298.9 L787.0 299.3 L788.2 299.7 L789.4 300.1 L790.7 300.6 L791.9 301.0 L793.1 301.4 L794.3 301.9 L795.5 302.4 L796.7 302.8 L797.8 303.3 L799.0 303.8 L800.2 304.3 L801.4 304.8 L802.5 305.3 L803.7 305.8 L804.9 306.3 L806.0 306.9 L807.2 307.4 L808.3 308.0 L809.5 308.5 L810.6 309.1 L811.7 309.7 L812.9 310.2 L814.0 310.8 L815.1 311.4 L816.2 312.0 L817.3 312.6 L818.4 313.3 L819.5 313.9 L820.6 314.5 L821.7 315.2 L822.8 315.8 L823.9 316.5 L825.0 317.1 L826.0 317.8 L827.1 318.5 L828.2 319.1 L829.2 319.8 L830.3 320.5 L831.3 321.2 L832.4 321.9 L833.4 322.7 L834.4 323.4 L835.5 324.1 L836.5 324.8 L837.5 325.6 L838.5 326.3 L839.5 327.1 L840.6 327.8 L841.6 328.6 L842.6 329.4 L843.5 330.1 L844.5 330.9 L845.5 331.7 L846.5 332.5 L847.5 333.3 L848.4 334.1 L849.4 334.9 L850.4 335.7 L851.3 336.5 L852.3 337.3 L853.2 338.1 L854.2 339.0 L855.1 339.8 L856.1 340.6 L857.0 341.5 L857.9 342.3 L858.8 343.2 L859.8 344.0 L860.7 344.9 L861.6 345.7 L862.5 346.6 L863.4 347.4 L864.3 348.3 L865.2 349.2 L866.1 350.0 L867.0 350.9 L867.9 351.8 L868.8 352.6 L869.7 353.5 L870.6 354.4 L871.5 355.3 L872.3 356.1 L873.2 357.0 L874.1 357.9 L875.0 358.8 L875.8 359.7 L876.7 360.6 L877.6 361.5 L878.4 362.3 L879.3 363.2 L880.1 364.1 L881.0 365.0 L881.9 365.9 L882.7 366.8 L883.6 367.7 L884.4 368.6 L885.3 369.5 L886.1 370.3 L887.0 371.2 L887.8 372.1 L888.7 373.0 L889.5 373.9 L890.3 374.8 L891.2 375.7 L892.0 376.5 L892.9 377.4 L893.7 378.3 L894.5 379.2 L895.4 380.1 L896.2 381.0 L897.1 381.8 L897.9 382.7 L898.7 383.6 L899.6 384.5 L900.4 385.3 L901.2 386.2 L902.1 387.1 L902.9 387.9 L903.7 388.8 L904.6 389.7 L905.4 390.5 L906.2 391.4 L907.1 392.2 L907.9 393.1 L908.7 393.9 L909.6 394.8 L910.4 395.6 L911.2 396.5 L912.0 397.3 L912.9 398.2 L913.7 399.0 L914.5 399.9 L915.4 400.7 L916.2 401.5 L917.0 402.4 L917.8 403.2 L918.7 404.0 L919.5 404.9 L920.3 405.7 L921.1 406.5 L921.9 407.3 L922.7 408.1 L923.6 409.0 L924.4 409.8 L925.2 410.6 L926.0 411.4 L926.8 412.2 L927.6 413.0 L928.4 413.8 L929.2 414.6 L930.0 415.4 L930.8 416.2 L931.6 417.0 L932.4 417.8 L933.2 418.6 L934.0 419.4 L934.8 420.2 L935.6 421.0 L936.3 421.8 L937.1 422.6 L937.9 423.4 L938.7 424.2 L939.4 425.0 L940.2 425.8 L941.0 426.6 L941.7 427.4 L942.5 428.2 L943.2 429.0 L944.0 429.8 L944.7 430.6 L945.5 431.3 L946.2 432.1 L946.9 432.9 L947.7 433.7 L948.4 434.5 L949.1 435.3 L949.9 436.1 L950.6 436.9 L951.3 437.7 L952.0 438.5 L952.7 439.3 L953.4 440.1 L954.1 440.9 L954.8 441.7 L955.5 442.5 L956.1 443.3 L956.8 444.1 L957.5 444.9 L958.2 445.7 L958.8 446.5 L959.5 447.3 L960.1 448.1 L960.8 448.9 L961.4 449.7 L962.1 450.5 L962.7 451.3 L963.4 452.2 L964.0 453.0 L964.6 453.8 L965.2 454.6 L965.8 455.4 L966.5 456.3 L967.1 457.1 L967.7 457.9 L968.3 458.8 L968.9 459.6 L969.4 460.4 L970.0 461.3 L970.6 462.1 L971.2 463.0 L971.8 463.8 L972.3 464.7 L972.9 465.5 L973.5 466.4 L974.0 467.2 L974.6 468.1 L975.1 468.9 L975.6 469.8 L976.2 470.7 L976.7 471.5 L977.3 472.4 L977.8 473.3 L978.3 474.2 L978.8 475.0 L979.4 475.9 L979.9 476.8 L980.4 477.7 L980.9 478.6 L981.4 479.5 L981.9 480.4 L982.4 481.3 L982.9 482.2 L983.4 483.1 L983.9 484.0 L984.4 484.9 L984.9 485.8 L985.3 486.7 L985.8 487.6 L986.3 488.6 L986.8 489.5 L987.3 490.4 L987.7 491.3 L988.2 492.3 L988.7 493.2 L989.1 494.1 L989.6 495.1 L990.1 496.0 L990.5 497.0 L991.0 497.9 L991.4 498.9 L991.9 499.8 L992.4 500.8 L992.8 501.7 L993.3 502.7 L993.7 503.6 L994.2 504.6 L994.7 505.6 L995.1 506.5 L995.6 507.5 L996.0 508.5 L996.5 509.4 L996.9 510.4 L997.4 511.4 L997.8 512.4 L998.3 513.3 L998.8 514.3 L999.2 515.3 L999.7 516.3 L1000.1 517.3 L1000.6 518.3 L1001.0 519.3 L1001.5 520.3 L1002.0 521.3 L1002.4 522.3 L1002.9 523.2 L1003.4 524.2 L1003.8 525.3 L1004.3 526.3 L1004.8 527.3 L1005.2 528.3 L1005.7 529.3 L1006.2 530.3 L1006.6 531.3 L1007.1 532.3 L1007.6 533.3 L1008.1 534.3 L1008.5 535.3 L1009.0 536.4 L1009.5 537.4 L1010.0 538.4 L1010.5 539.4 L1010.9 540.4 L1011.4 541.4 L1011.9 542.5 L1012.4 543.5 L1012.9 544.5 L1013.4 545.5 L1013.9 546.6 L1014.4 547.6 L1014.9 548.6 L1015.4 549.7 L1015.8 550.7 L1016.3 551.7 L1016.8 552.7 L1017.3 553.8 L1017.8 554.8 L1018.3 555.8 L1018.8 556.9 L1019.3 557.9 L1019.8 559.0 L1020.3 560.0 L1020.8 561.0 L1021.3 562.1 L1021.8 563.1 L1022.3 564.2 L1022.8 565.2 L1023.3 566.2 L1023.8 567.3 L1024.3 568.3 L1024.8 569.4 L1025.3 570.4 L1025.8 571.5 L1026.2 572.5 L1026.7 573.6 L1027.2 574.6 L1027.7 575.7 L1028.2 576.8 L1028.7 577.8 L1029.1 578.9 L1029.6 579.9 L1030.1 581.0 L1030.6 582.1 L1031.0 583.1 L1031.5 584.2 L1032.0 585.3 L1032.4 586.3 L1032.9 587.4 L1033.3 588.5 L1033.8 589.5 L1034.2 590.6 L1034.7 591.7 L1035.1 592.8 L1035.6 593.8 L1036.0 594.9 L1036.4 596.0 L1036.8 597.1 L1037.3 598.2 L1037.7 599.2 L1038.1 600.3 L1038.5 601.4 L1038.9 602.5 L1039.3 603.6 L1039.7 604.7 L1040.1 605.8 L1040.4 606.9 L1040.8 608.0 L1041.2 609.1 L1041.5 610.2 L1041.9 611.3 L1042.2 612.4 L1042.6 613.5 L1042.9 614.6 L1043.3 615.7 L1043.6 616.8 L1043.9 617.9 L1044.2 619.0 L1044.5 620.1 L1044.8 621.2 L1045.1 622.4 L1045.4 623.5 L1045.7 624.6 L1045.9 625.7 L1046.2 626.8 L1046.5 627.9 L1046.7 629.1 L1046.9 630.2 L1047.2 631.3 L1047.4 632.4 L1047.6 633.6 L1047.8 634.7 L1048.0 635.8 L1048.2 636.9 L1048.4 638.1 L1048.6 639.2 L1048.8 640.3 L1048.9 641.5 L1049.1 642.6 L1049.2 643.7 L1049.4 644.9 L1049.5 646.0 L1049.6 647.1 L1049.7 648.3 L1049.8 649.4 L1049.9 650.6 L1050.0 651.7 L1050.1 652.8 L1050.2 654.0 L1050.2 655.1 L1050.3 656.3 L1050.3 657.4 L1050.4 658.5 L1050.4 659.7 L1050.4 660.8 L1050.4 662.0 L1050.4 663.1 L1050.4 664.3 L1050.4 665.4 L1050.4 666.5 L1050.4 667.7 L1050.3 668.8 L1050.3 670.0 L1050.2 671.1 L1050.1 672.3 L1050.1 673.4 L1050.0 674.5 L1049.9 675.7 L1049.8 676.8 L1049.7 678.0 L1049.5 679.1 L1049.4 680.3 L1049.3 681.4 L1049.1 682.5 L1049.0 683.7 L1048.8 684.8 L1048.6 685.9 L1048.4 687.1 L1048.2 688.2 L1048.0 689.4 L1047.8 690.5 L1047.6 691.6 L1047.4 692.7 L1047.1 693.9 L1046.9 695.0 L1046.6 696.1 L1046.3 697.3 L1046.1 698.4 L1045.8 699.5 L1045.5 700.6 L1045.2 701.7 L1044.9 702.9 L1044.6 704.0 L1044.2 705.1 L1043.9 706.2 L1043.5 707.3 L1043.2 708.4 L1042.8 709.5 L1042.4 710.6 L1042.1 711.7 L1041.7 712.8 L1041.3 713.9 L1040.9 715.0 L1040.4 716.1 L1040.0 717.2 L1039.6 718.2 L1039.1 719.3 L1038.7 720.4 L1038.2 721.5 L1037.7 722.5 L1037.3 723.6 L1036.8 724.7 L1036.3 725.7 L1035.8 726.8 L1035.2 727.8 L1034.7 728.9 L1034.2 729.9 L1033.6 730.9 L1033.1 732.0 L1032.5 733.0 L1031.9 734.0 L1031.4 735.1 L1030.8 736.1 L1030.2 737.1 L1029.6 738.1 L1029.0 739.1 L1028.3 740.1 L1027.7 741.1 L1027.1 742.1 L1026.4 743.1 L1025.8 744.0 L1025.1 745.0 L1024.4 746.0 L1023.7 747.0 L1023.0 747.9 L1022.3 748.9 L1021.6 749.8 L1020.9 750.8 L1020.2 751.7 L1019.4 752.6 L1018.7 753.6 L1017.9 754.5 L1017.2 755.4 L1016.4 756.3 L1015.6 757.2 L1014.8 758.1 L1014.0 759.0 L1013.2 759.9 L1012.4 760.7 L1011.6 761.6 L1010.8 762.5 L1009.9 763.3 L1009.1 764.2 L1008.2 765.0 L1007.4 765.9 L1006.5 766.7 L1005.6 767.5 L1004.7 768.4 L1003.8 769.2 L1002.9 770.0 L1002.0 770.8 L1001.1 771.6 L1000.2 772.3 L999.2 773.1 L998.3 773.9 L997.3 774.7 L996.4 775.4 L995.4 776.2 L994.4 776.9 L993.4 777.7 L992.4 778.4 L991.4 779.1 L990.4 779.8 L989.4 780.5 L988.4 781.2 L987.4 781.9 L986.3 782.6 L985.3 783.3 L984.2 784.0 L983.2 784.6 L982.1 785.3 L981.0 785.9 L980.0 786.6 L978.9 787.2 L977.8 787.9 L976.7 788.5 L975.6 789.1 L974.5 789.7 L973.3 790.3 L972.2 790.9 L971.1 791.5 L969.9 792.1 L968.8 792.6 L967.6 793.2 L966.5 793.8 L965.3 794.3 L964.2 794.9 L963.0 795.4 L961.8 795.9 L960.6 796.4 L959.4 797.0 L958.2 797.5 L957.0 798.0 L955.8 798.5 L954.6 799.0 L953.4 799.4 L952.2 799.9 L950.9 800.4 L949.7 800.8 L948.5 801.3 L947.2 801.8 L946.0 802.2 L944.7 802.6 L943.5 803.1 L942.2 803.5 L940.9 803.9 L939.7 804.3 L938.4 804.7 L937.1 805.1 L935.9 805.5 L934.6 805.9 L933.3 806.3 L932.0 806.7 L930.7 807.0 L929.4 807.4 L928.1 807.8 L926.8 808.1 L925.5 808.5 L924.2 808.8 L922.9 809.1 L921.6 809.5 L920.3 809.8 L919.0 810.1 L917.7 810.4 L916.4 810.8 L915.1 811.1 L913.8 811.4 L912.4 811.7 L911.1 812.0 L909.8 812.3 L908.5 812.6 L907.2 812.8 L905.8 813.1 L904.5 813.4 L903.2 813.7 L901.9 814.0 L900.5 814.2 L899.2 814.5 L897.9 814.7 L896.6 815.0 L895.2 815.3 L893.9 815.5 L892.6 815.8 L891.3 816.0 L889.9 816.2 L888.6 816.5 L887.3 816.7 L886.0 817.0 L884.6 817.2 L883.3 817.4 L882.0 817.7 L880.7 817.9 L879.4 818.1 L878.0 818.3 L876.7 818.6 L875.4 818.8 L874.1 819.0 L872.8 819.2 L871.5 819.4 L870.1 819.7 L868.8 819.9 L867.5 820.1 L866.2 820.3 L864.9 820.5 L863.6 820.7 L862.3 820.9 L861.0 821.1 L859.7 821.3 L858.4 821.5 L857.1 821.7 L855.8 821.9 L854.5 822.1 L853.2 822.3 L851.9 822.5 L850.6 822.7 L849.3 822.9 L848.0 823.1 L846.8 823.3 L845.5 823.5 L844.2 823.7 L842.9 823.9 L841.6 824.1 L840.4 824.3 L839.1 824.5 L837.8 824.7 L836.6 824.9 L835.3 825.1 L834.0 825.3 L832.8 825.5 L831.5 825.7 L830.2 825.9 L829.0 826.1 L827.7 826.3 L826.5 826.5 L825.2 826.7 L824.0 826.8 L822.7 827.0 L821.5 827.2 L820.3 827.4 L819.0 827.6 L817.8 827.8 L816.5 828.0 L815.3 828.1 L814.1 828.3 L812.8 828.5 L811.6 828.7 L810.4 828.9 L809.2 829.0 L807.9 829.2 L806.7 829.4 L805.5 829.6 L804.3 829.8 L803.1 829.9 L801.9 830.1 L800.7 830.3 L799.5 830.4 L798.2 830.6 L797.0 830.8 L795.8 830.9 L794.6 831.1 L793.4 831.2 L792.2 831.4 L791.0 831.6 L789.8 831.7 L788.7 831.9 L787.5 832.0 L786.3 832.1 L785.1 832.3 L783.9 832.4 L782.7 832.6 L781.5 832.7 L780.3 832.8 L779.1 833.0 L778.0 833.1 L776.8 833.2 L775.6 833.4 L774.4 833.5 L773.3 833.6 L772.1 833.7 L770.9 833.8 L769.7 834.0 L768.6 834.1 L767.4 834.2 L766.2 834.3 L765.0 834.4 L763.9 834.5 L762.7 834.6 L761.5 834.7 L760.4 834.7 L759.2 834.8 L758.0 834.9 L756.9 835.0 L755.7 835.1 L754.5 835.1 L753.4 835.2 L752.2 835.3 L751.0 835.3 L749.9 835.4 L748.7 835.5 L747.5 835.5 L746.4 835.6 L745.2 835.6 L744.0 835.7 L742.9 835.7 L741.7 835.7 L740.6 835.8 L739.4 835.8 L738.2 835.8 L737.1 835.9 L735.9 835.9 L734.7 835.9 L733.6 835.9 L732.4 835.9 L731.3 835.9 L730.1 835.9 M488.6 473.1 L489.2 472.3 L489.7 471.4 L490.3 470.6 L490.8 469.8 L491.4 469.0 L492.0 468.1 L492.5 467.3 L493.1 466.5 L493.7 465.7 L494.3 464.9 L494.8 464.1 L495.4 463.3 L496.0 462.5 L496.6 461.7 L497.2 460.9 L497.8 460.1 L498.4 459.3 L499.0 458.5 L499.6 457.7 L500.2 456.9 L500.8 456.1 L501.5 455.3 L502.1 454.5 L502.7 453.7 L503.4 452.9 L504.0 452.1 L504.6 451.3 L505.3 450.5 L505.9 449.7 L506.6 448.9 L507.2 448.1 L507.9 447.3 L508.6 446.5 L509.2 445.7 L509.9 444.9 L510.6 444.1 L511.3 443.3 L511.9 442.6 L512.6 441.8 L513.3 441.0 L514.0 440.2 L514.7 439.4 L515.4 438.6 L516.1 437.8 L516.8 437.0 L517.5 436.2 L518.3 435.4 L519.0 434.6 L519.7 433.8 L520.4 433.0 L521.2 432.2 L521.9 431.4 L522.6 430.6 L523.4 429.8 L524.1 428.9 L524.9 428.1 L525.6 427.3 L526.4 426.5 L527.1 425.7 L527.9 424.9 L528.6 424.1 L529.4 423.2 L530.2 422.4 L530.9 421.6 L531.7 420.8 L532.5 420.0 L533.3 419.1 L534.0 418.3 L534.8 417.5 L535.6 416.6 L536.4 415.8 L537.2 415.0 L538.0 414.1 L538.7 413.3 L539.5 412.5 L540.3 411.6 L541.1 410.8 L541.9 409.9 L542.7 409.1 L543.5 408.2 L544.3 407.4 L545.1 406.5 L545.9 405.7 L546.7 404.8 L547.5 404.0 L548.4 403.1 L549.2 402.3 L550.0 401.4 L550.8 400.5 L551.6 399.7 L552.4 398.8 L553.2 397.9 L554.0 397.1 L554.9 396.2 L555.7 395.3 L556.5 394.5 L557.3 393.6 L558.1 392.7 L559.0 391.9 L559.8 391.0 L560.6 390.1 L561.4 389.2 L562.2 388.4 L563.1 387.5 L563.9 386.6 L564.7 385.7 L565.6 384.9 L566.4 384.0 L567.2 383.1 L568.0 382.3 L568.9 381.4 L569.7 380.5 L570.5 379.6 L571.4 378.8 L572.2 377.9 L573.0 377.0 L573.9 376.1 L574.7 375.3 L575.6 374.4 L576.4 373.5 L577.2 372.7 L578.1 371.8 L578.9 371.0 L579.8 370.1 L580.6 369.2 L581.5 368.4 L582.3 367.5 L583.2 366.7 L584.0 365.8 L584.9 365.0 L585.7 364.1 L586.6 363.3 L587.5 362.4 L588.3 361.6 L589.2 360.8 L590.1 359.9 L590.9 359.1 L591.8 358.3 L592.7 357.5 L593.6 356.6 L594.4 355.8 L595.3 355.0 L596.2 354.2 L597.1 353.4 L598.0 352.6 L598.9 351.8 L599.8 351.0 L600.7 350.2 L601.6 349.4 L602.5 348.6 L603.4 347.9 L604.3 347.1 L605.2 346.3 L606.1 345.6 L607.0 344.8 L607.9 344.1 L608.9 343.3 L609.8 342.6 L610.7 341.8 L611.6 341.1 L612.6 340.4 L613.5 339.6 L614.5 338.9 L615.4 338.2 L616.4 337.5 L617.3 336.8 L618.3 336.1 L619.2 335.4 L620.2 334.7 L621.1 334.1 L622.1 333.4 L623.1 332.7 L624.1 332.1 L625.0 331.4 L626.0 330.8 L627.0 330.1 L628.0 329.5 L629.0 328.9 L630.0 328.3 L631.0 327.7 L632.0 327.0 L633.0 326.4 L634.0 325.9 L635.0 325.3 L636.0 324.7 L637.1 324.1 L638.1 323.6 L639.1 323.0 L640.1 322.4 L641.2 321.9 L642.2 321.4 L643.3 320.8 L644.3 320.3 L645.4 319.8 L646.4 319.3 L647.5 318.8 L648.5 318.3 L649.6 317.8 L650.7 317.3 L651.7 316.8 L652.8 316.4 L653.9 315.9 L655.0 315.5 L656.1 315.0 L657.2 314.6 L658.3 314.1 L659.4 313.7 L660.5 313.3 L661.6 312.9 L662.7 312.5 L663.8 312.1 L664.9 311.7 L666.0 311.3 L667.1 311.0 L668.3 310.6 L669.4 310.2 L670.5 309.9 L671.7 309.5 L672.8 309.2 L673.9 308.9 L675.1 308.6 L676.2 308.2 L677.4 307.9 L678.5 307.6 L679.7 307.4 L680.8 307.1 L682.0 306.8 L683.2 306.5 L684.3 306.3 L685.5 306.0 L686.7 305.8 L687.9 305.5 L689.0 305.3 L690.2 305.1 L691.4 304.9 L692.6 304.7 L693.8 304.5 L695.0 304.3 L696.2 304.1 L697.4 303.9 L698.6 303.7 L699.8 303.6 L701.0 303.4 L702.2 303.3 L703.4 303.1 L704.6 303.0 L705.8 302.9 L707.0 302.8 L708.2 302.7 L709.4 302.6 L710.6 302.5 L711.8 302.4 L713.0 302.3 L714.3 302.2 L715.5 302.2 L716.7 302.1 L717.9 302.1 L719.1 302.0 L720.3 302.0 L721.5 302.0 L722.8 302.0 L724.0 301.9 L725.2 301.9 L726.4 301.9 L727.6 302.0 L728.8 302.0 L730.1 302.0 L731.3 302.1 L732.5 302.1 L733.7 302.2 L734.9 302.2 L736.1 302.3 L737.3 302.4 L738.6 302.4 L739.8 302.5 L741.0 302.6 L742.2 302.7 L743.4 302.9 L744.6 303.0 L745.8 303.1 L747.0 303.2 L748.2 303.4 L749.4 303.5 L750.6 303.7 L751.8 303.9 L752.9 304.0 L754.1 304.2 L755.3 304.4 L756.5 304.6 L757.7 304.8 L758.9 305.0 L760.0 305.3 L761.2 305.5 L762.4 305.7 L763.5 306.0 L764.7 306.2 L765.9 306.5 L767.0 306.8 L768.2 307.0 L769.3 307.3 L770.5 307.6 L771.6 307.9 L772.8 308.2 L773.9 308.5 L775.0 308.8 L776.2 309.2 L777.3 309.5 L778.4 309.9 L779.5 310.2 L780.7 310.6 L781.8 310.9 L782.9 311.3 L784.0 311.7 L785.1 312.1 L786.2 312.5 L787.3 312.9 L788.4 313.3 L789.5 313.7 L790.6 314.1 L791.6 314.6 L792.7 315.0 L793.8 315.5 L794.9 315.9 L795.9 316.4 L797.0 316.9 L798.1 317.3 L799.1 317.8 L800.2 318.3 L801.2 318.8 L802.3 319.3 L803.3 319.9 L804.3 320.4 L805.4 320.9 L806.4 321.5 L807.4 322.0 L808.4 322.6 L809.5 323.1 L810.5 323.7 L811.5 324.3 L812.5 324.8 L813.5 325.4 L814.5 326.0 L815.5 326.6 L816.5 327.2 L817.5 327.9 L818.5 328.5 L819.5 329.1 L820.4 329.7 L821.4 330.4 L822.4 331.0 L823.3 331.7 L824.3 332.4 L825.3 333.0 L826.2 333.7 L827.2 334.4 L828.1 335.1 L829.1 335.8 L830.0 336.5 L831.0 337.2 L831.9 337.9 L832.8 338.6 L833.8 339.4 L834.7 340.1 L835.6 340.8 L836.6 341.6 L837.5 342.3 L838.4 343.1 L839.3 343.8 L840.2 344.6 L841.1 345.4 L842.0 346.1 L842.9 346.9 L843.8 347.7 L844.7 348.5 L845.6 349.3 L846.5 350.1 L847.4 350.9 L848.3 351.7 L849.2 352.5 L850.1 353.3 L850.9 354.1 L851.8 355.0 L852.7 355.8 L853.6 356.6 L854.4 357.5 L855.3 358.3 L856.2 359.1 L857.0 360.0 L857.9 360.8 L858.8 361.7 L859.6 362.5 L860.5 363.4 L861.3 364.3 L862.2 365.1 L863.0 366.0 L863.9 366.8 L864.7 367.7 L865.6 368.6 L866.4 369.5 L867.3 370.3 L868.1 371.2 L869.0 372.1 L869.8 373.0 L870.7 373.8 L871.5 374.7 L872.4 375.6 L873.2 376.5 L874.1 377.4 L874.9 378.2 L875.7 379.1 L876.6 380.0 L877.4 380.9 L878.3 381.8 L879.1 382.7 L880.0 383.6 L880.8 384.4 L881.6 385.3 L882.5 386.2 L883.3 387.1 L884.2 388.0 L885.0 388.9 L885.9 389.7 L886.7 390.6 L887.5 391.5 L888.4 392.4 L889.2 393.3 L890.1 394.1 L890.9 395.0 L891.7 395.9 L892.6 396.8 L893.4 397.6 L894.3 398.5 L895.1 399.4 L895.9 400.2 L896.8 401.1 L897.6 402.0 L898.5 402.8 L899.3 403.7 L900.1 404.5 L901.0 405.4 L901.8 406.2 L902.6 407.1 L903.5 407.9 L904.3 408.8 L905.1 409.6 L906.0 410.5 L906.8 411.3 L907.6 412.1 L908.4 413.0 L909.3 413.8 L910.1 414.6 L910.9 415.4 L911.7 416.3 L912.6 417.1 L913.4 417.9 L914.2 418.7 L915.0 419.5 L915.8 420.3 L916.6 421.1 L917.4 421.9 L918.2 422.7 L919.0 423.5 L919.8 424.3 L920.6 425.1 L921.4 425.9 L922.2 426.7 L922.9 427.5 L923.7 428.3 L924.5 429.1 L925.3 429.9 L926.0 430.7 L926.8 431.4 L927.5 432.2 L928.3 433.0 L929.0 433.8 L929.8 434.5 L930.5 435.3 L931.3 436.1 L932.0 436.9 L932.7 437.6 L933.5 438.4 L934.2 439.2 L934.9 439.9 L935.6 440.7 L936.3 441.5 L937.0 442.2 L937.7 443.0 L938.4 443.8 L939.1 444.5 L939.8 445.3 L940.5 446.0 L941.1 446.8 L941.8 447.6 L942.5 448.3 L943.1 449.1 L943.8 449.9 L944.4 450.6 L945.1 451.4 L945.7 452.1 L946.4 452.9 L947.0 453.7 L947.6 454.4 L948.2 455.2 L948.9 456.0 L949.5 456.7 L950.1 457.5 L950.7 458.3 L951.3 459.1 L951.9 459.8 L952.5 460.6 L953.0 461.4 L953.6 462.2 L954.2 462.9 L954.8 463.7 L955.3 464.5 L955.9 465.3 L956.5 466.1 L957.0 466.9 L957.6 467.7 L958.1 468.5 L958.7 469.3 L959.2 470.1 L959.7 470.9 L960.3 471.7 L960.8 472.5 L961.3 473.3 L961.9 474.1 L962.4 474.9 L962.9 475.7 L963.4 476.5 L963.9 477.4 L964.4 478.2 L964.9 479.0 L965.4 479.9 L965.9 480.7 L966.4 481.5 L966.9 482.4 L967.4 483.2 L967.9 484.1 L968.3 484.9 L968.8 485.8 L969.3 486.6 L969.8 487.5 L970.3 488.4 L970.7 489.2 L971.2 490.1 L971.7 491.0 L972.1 491.9 L972.6 492.8 L973.1 493.6 L973.5 494.5 L974.0 495.4 L974.4 496.3 L974.9 497.2 L975.3 498.1 L975.8 499.1 L976.3 500.0 L976.7 500.9 L977.2 501.8 L977.6 502.7 L978.1 503.7 L978.5 504.6 L979.0 505.5 L979.4 506.5 L979.9 507.4 L980.3 508.3 L980.8 509.3 L981.2 510.2 L981.7 511.2 L982.1 512.2 L982.6 513.1 L983.0 514.1 L983.5 515.1 L983.9 516.0 L984.4 517.0 L984.8 518.0 L985.3 519.0 L985.7 519.9 L986.2 520.9 L986.7 521.9 L987.1 522.9 L987.6 523.9 L988.0 524.9 L988.5 525.9 L989.0 526.9 L989.4 527.9 L989.9 528.9 L990.4 529.9 L990.8 530.9 L991.3 531.9 L991.8 532.9 L992.2 533.9 L992.7 534.9 L993.2 535.9 L993.7 537.0 L994.1 538.0 L994.6 539.0 L995.1 540.0 L995.6 541.0 L996.1 542.1 L996.6 543.1 L997.0 544.1 L997.5 545.1 L998.0 546.2 L998.5 547.2 L999.0 548.2 L999.5 549.3 L1000.0 550.3 L1000.5 551.3 L1001.0 552.3 L1001.5 553.4 L1001.9 554.4 L1002.4 555.4 L1002.9 556.5 L1003.4 557.5 L1003.9 558.5 L1004.4 559.6 L1004.9 560.6 L1005.4 561.6 L1005.9 562.7 L1006.4 563.7 L1006.9 564.7 L1007.4 565.8 L1007.9 566.8 L1008.4 567.8 L1008.9 568.9 L1009.4 569.9 L1009.9 571.0 L1010.4 572.0 L1010.8 573.0 L1011.3 574.1 L1011.8 575.1 L1012.3 576.1 L1012.8 577.2 L1013.3 578.2 L1013.7 579.2 L1014.2 580.3 L1014.7 581.3 L1015.2 582.3 L1015.6 583.4 L1016.1 584.4 L1016.6 585.5 L1017.0 586.5 L1017.5 587.5 L1017.9 588.6 L1018.4 589.6 L1018.8 590.6 L1019.3 591.7 L1019.7 592.7 L1020.1 593.8 L1020.6 594.8 L1021.0 595.8 L1021.4 596.9 L1021.9 597.9 L1022.3 599.0 L1022.7 600.0 L1023.1 601.0 L1023.5 602.1 L1023.9 603.1 L1024.3 604.2 L1024.7 605.2 L1025.0 606.2 L1025.4 607.3 L1025.8 608.3 L1026.2 609.4 L1026.5 610.4 L1026.9 611.5 L1027.2 612.5 L1027.6 613.5 L1027.9 614.6 L1028.2 615.6 L1028.6 616.7 L1028.9 617.7 L1029.2 618.8 L1029.5 619.8 L1029.8 620.9 L1030.1 621.9 L1030.4 623.0 L1030.7 624.0 L1030.9 625.1 L1031.2 626.1 L1031.5 627.2 L1031.7 628.2 L1032.0 629.3 L1032.2 630.3 L1032.5 631.4 L1032.7 632.4 L1032.9 633.5 L1033.1 634.5 L1033.3 635.6 L1033.5 636.6 L1033.7 637.7 L1033.9 638.7 L1034.1 639.8 L1034.2 640.8 L1034.4 641.9 L1034.5 643.0 L1034.7 644.0 L1034.8 645.1 L1034.9 646.1 L1035.1 647.2 L1035.2 648.2 L1035.3 649.3 L1035.4 650.4 L1035.5 651.4 L1035.6 652.5 L1035.6 653.5 L1035.7 654.6 L1035.8 655.7 L1035.8 656.7 L1035.8 657.8 L1035.9 658.8 L1035.9 659.9 L1035.9 661.0 L1035.9 662.0 L1035.9 663.1 L1035.9 664.1 L1035.9 665.2 L1035.9 666.3 L1035.9 667.3 L1035.8 668.4 L1035.8 669.5 L1035.7 670.5 L1035.7 671.6 L1035.6 672.6 L1035.5 673.7 L1035.4 674.7 L1035.3 675.8 L1035.2 676.9 L1035.1 677.9 L1035.0 679.0 L1034.8 680.0 L1034.7 681.1 L1034.6 682.1 L1034.4 683.2 L1034.2 684.3 L1034.1 685.3 L1033.9 686.4 L1033.7 687.4 L1033.5 688.5 L1033.3 689.5 L1033.1 690.5 L1032.9 691.6 L1032.6 692.6 L1032.4 693.7 L1032.1 694.7 L1031.9 695.8 L1031.6 696.8 L1031.4 697.8 L1031.1 698.9 L1030.8 699.9 L1030.5 700.9 L1030.2 702.0 L1029.9 703.0 L1029.6 704.0 L1029.2 705.0 L1028.9 706.0 L1028.5 707.1 L1028.2 708.1 L1027.8 709.1 L1027.5 710.1 L1027.1 711.1 L1026.7 712.1 L1026.3 713.1 L1025.9 714.1 L1025.5 715.1 L1025.1 716.1 L1024.6 717.1 L1024.2 718.0 L1023.8 719.0 L1023.3 720.0 L1022.8 721.0 L1022.4 721.9 L1021.9 722.9 L1021.4 723.9 L1020.9 724.8 L1020.4 725.8 L1019.9 726.7 L1019.4 727.7 L1018.9 728.6 L1018.4 729.5 L1017.8 730.5 L1017.3 731.4 L1016.7 732.3 L1016.2 733.2 L1015.6 734.2 L1015.0 735.1 L1014.4 736.0 L1013.8 736.9 L1013.2 737.8 L1012.6 738.7 L1012.0 739.5 L1011.4 740.4 L1010.7 741.3 L1010.1 742.2 L1009.5 743.0 L1008.8 743.9 L1008.1 744.7 L1007.5 745.6 L1006.8 746.4 L1006.1 747.2 L1005.4 748.1 L1004.7 748.9 L1004.0 749.7 L1003.3 750.5 L1002.6 751.3 L1001.9 752.1 L1001.1 752.9 L1000.4 753.7 L999.6 754.5 L998.9 755.3 L998.1 756.0 L997.3 756.8 L996.5 757.6 L995.8 758.3 L995.0 759.1 L994.2 759.8 L993.3 760.5 L992.5 761.3 L991.7 762.0 L990.9 762.7 L990.0 763.4 L989.2 764.1 L988.3 764.8 L987.5 765.5 L986.6 766.2 L985.7 766.9 L984.9 767.6 L984.0 768.2 L983.1 768.9 L982.2 769.5 L981.3 770.2 L980.3 770.8 L979.4 771.5 L978.5 772.1 L977.5 772.7 L976.6 773.3 L975.6 773.9 L974.7 774.5 L973.7 775.1 L972.7 775.7 L971.8 776.3 L970.8 776.9 L969.8 777.5 L968.8 778.0 L967.8 778.6 L966.7 779.1 L965.7 779.7 L964.7 780.2 L963.7 780.8 L962.6 781.3 L961.6 781.8 L960.5 782.3 L959.4 782.9 L958.4 783.4 L957.3 783.9 L956.2 784.4 L955.1 784.8 L954.0 785.3 L952.9 785.8 L951.8 786.3 L950.7 786.7 L949.6 787.2 L948.5 787.6 L947.4 788.1 L946.2 788.5 L945.1 789.0 L943.9 789.4 L942.8 789.8 L941.6 790.2 L940.5 790.7 L939.3 791.1 L938.1 791.5 L937.0 791.9 L935.8 792.2 L934.6 792.6 L933.4 793.0 L932.2 793.4 L931.0 793.8 L929.8 794.1 L928.6 794.5 L927.4 794.8 L926.2 795.2 L924.9 795.5 L923.7 795.9 L922.5 796.2 L921.2 796.5 L920.0 796.9 L918.8 797.2 L917.5 797.5 L916.3 797.8 L915.0 798.1 L913.8 798.4 L912.5 798.7 L911.3 799.0 L910.0 799.3 L908.7 799.6 L907.5 799.9 L906.2 800.2 L904.9 800.5 L903.7 800.7 L902.4 801.0 L901.1 801.3 L899.8 801.6 L898.5 801.8 L897.3 802.1 L896.0 802.3 L894.7 802.6 L893.4 802.8 L892.1 803.1 L890.8 803.3 L889.5 803.6 L888.2 803.8 L886.9 804.1 L885.6 804.3 L884.3 804.5 L883.0 804.8 L881.7 805.0 L880.4 805.2 L879.1 805.4 L877.8 805.7 L876.5 805.9 L875.2 806.1 L873.9 806.3 L872.6 806.5 L871.3 806.8 L870.0 807.0 L868.7 807.2 L867.4 807.4 L866.1 807.6 L864.8 807.8 L863.5 808.0 L862.2 808.2 L860.9 808.4 L859.6 808.7 L858.4 808.9 L857.1 809.1 L855.8 809.3 L854.5 809.5 L853.2 809.7 L851.9 809.9 L850.6 810.1 L849.3 810.3 L848.0 810.5 L846.7 810.7 L845.5 810.9 L844.2 811.1 L842.9 811.3 L841.6 811.5 L840.4 811.7 L839.1 811.9 L837.8 812.1 L836.5 812.3 L835.3 812.5 L834.0 812.6 L832.7 812.8 L831.5 813.0 L830.2 813.2 L829.0 813.4 L827.7 813.6 L826.5 813.8 L825.2 814.0 L824.0 814.2 L822.7 814.4 L821.5 814.6 L820.2 814.8 L819.0 814.9 L817.8 815.1 L816.5 815.3 L815.3 815.5 L814.1 815.7 L812.8 815.9 L811.6 816.0 L810.4 816.2 L809.2 816.4 L808.0 816.6 L806.8 816.8 L805.5 816.9 L804.3 817.1 L803.1 817.3 L801.9 817.4 L800.7 817.6 L799.5 817.8 L798.3 818.0 L797.2 818.1 L796.0 818.3 L794.8 818.4 L793.6 818.6 L792.4 818.8 L791.2 818.9 L790.1 819.1 L788.9 819.2 L787.7 819.4 L786.6 819.5 L785.4 819.7 L784.2 819.8 L783.1 819.9 L781.9 820.1 L780.7 820.2 L779.6 820.4 L778.4 820.5 L777.3 820.6 L776.1 820.7 L775.0 820.9 L773.8 821.0 L772.7 821.1 L771.6 821.2 L770.4 821.3 L769.3 821.4 L768.1 821.6 L767.0 821.7 L765.9 821.8 L764.7 821.9 L763.6 822.0 L762.5 822.1 L761.4 822.1 L760.2 822.2 L759.1 822.3 L758.0 822.4 L756.9 822.5 L755.7 822.6 L754.6 822.6 L753.5 822.7 L752.4 822.8 L751.3 822.8 L750.1 822.9 L749.0 823.0 L747.9 823.0 L746.8 823.1 L745.7 823.1 L744.5 823.2 L743.4 823.2 L742.3 823.2 L741.2 823.3 L740.1 823.3 L739.0 823.3 L737.9 823.4 L736.7 823.4 L735.6 823.4 L734.5 823.4 L733.4 823.4 L732.3 823.4 L731.2 823.5 L730.0 823.5 M494.3 475.8 L494.8 475.0 L495.4 474.2 L495.9 473.4 L496.4 472.6 L497.0 471.8 L497.5 471.0 L498.1 470.2 L498.7 469.4 L499.2 468.6 L499.8 467.8 L500.4 467.0 L500.9 466.2 L501.5 465.4 L502.1 464.7 L502.7 463.9 L503.3 463.1 L503.8 462.3 L504.4 461.5 L505.0 460.7 L505.6 459.9 L506.2 459.2 L506.9 458.4 L507.5 457.6 L508.1 456.8 L508.7 456.0 L509.3 455.3 L510.0 454.5 L510.6 453.7 L511.2 452.9 L511.9 452.1 L512.5 451.4 L513.2 450.6 L513.8 449.8 L514.5 449.0 L515.2 448.2 L515.8 447.4 L516.5 446.7 L517.2 445.9 L517.8 445.1 L518.5 444.3 L519.2 443.5 L519.9 442.7 L520.6 442.0 L521.3 441.2 L522.0 440.4 L522.7 439.6 L523.4 438.8 L524.1 438.0 L524.8 437.2 L525.6 436.4 L526.3 435.6 L527.0 434.8 L527.7 434.0 L528.5 433.2 L529.2 432.4 L530.0 431.6 L530.7 430.8 L531.4 430.0 L532.2 429.2 L533.0 428.4 L533.7 427.6 L534.5 426.7 L535.2 425.9 L536.0 425.1 L536.8 424.3 L537.5 423.5 L538.3 422.6 L539.1 421.8 L539.9 421.0 L540.6 420.2 L541.4 419.3 L542.2 418.5 L543.0 417.7 L543.8 416.8 L544.6 416.0 L545.4 415.1 L546.2 414.3 L547.0 413.5 L547.8 412.6 L548.6 411.8 L549.4 410.9 L550.2 410.1 L551.0 409.2 L551.8 408.3 L552.6 407.5 L553.4 406.6 L554.2 405.8 L555.0 404.9 L555.8 404.1 L556.6 403.2 L557.5 402.3 L558.3 401.5 L559.1 400.6 L559.9 399.7 L560.7 398.9 L561.5 398.0 L562.4 397.1 L563.2 396.2 L564.0 395.4 L564.8 394.5 L565.6 393.6 L566.5 392.8 L567.3 391.9 L568.1 391.0 L568.9 390.1 L569.8 389.3 L570.6 388.4 L571.4 387.5 L572.2 386.7 L573.1 385.8 L573.9 384.9 L574.7 384.1 L575.6 383.2 L576.4 382.3 L577.2 381.4 L578.0 380.6 L578.9 379.7 L579.7 378.9 L580.5 378.0 L581.4 377.1 L582.2 376.3 L583.1 375.4 L583.9 374.6 L584.7 373.7 L585.6 372.9 L586.4 372.0 L587.3 371.2 L588.1 370.3 L588.9 369.5 L589.8 368.6 L590.6 367.8 L591.5 367.0 L592.3 366.1 L593.2 365.3 L594.0 364.5 L594.9 363.7 L595.8 362.9 L596.6 362.0 L597.5 361.2 L598.3 360.4 L599.2 359.6 L600.1 358.8 L600.9 358.0 L601.8 357.2 L602.7 356.5 L603.5 355.7 L604.4 354.9 L605.3 354.1 L606.2 353.4 L607.1 352.6 L607.9 351.8 L608.8 351.1 L609.7 350.3 L610.6 349.6 L611.5 348.8 L612.4 348.1 L613.3 347.4 L614.2 346.7 L615.1 345.9 L616.0 345.2 L616.9 344.5 L617.8 343.8 L618.8 343.1 L619.7 342.4 L620.6 341.7 L621.5 341.1 L622.4 340.4 L623.4 339.7 L624.3 339.1 L625.2 338.4 L626.2 337.8 L627.1 337.1 L628.1 336.5 L629.0 335.9 L629.9 335.2 L630.9 334.6 L631.9 334.0 L632.8 333.4 L633.8 332.8 L634.7 332.2 L635.7 331.6 L636.7 331.1 L637.7 330.5 L638.6 329.9 L639.6 329.4 L640.6 328.8 L641.6 328.3 L642.6 327.7 L643.6 327.2 L644.6 326.7 L645.6 326.2 L646.6 325.6 L647.6 325.1 L648.6 324.6 L649.6 324.2 L650.6 323.7 L651.6 323.2 L652.6 322.7 L653.7 322.3 L654.7 321.8 L655.7 321.4 L656.8 320.9 L657.8 320.5 L658.8 320.1 L659.9 319.6 L660.9 319.2 L662.0 318.8 L663.0 318.4 L664.1 318.0 L665.2 317.6 L666.2 317.3 L667.3 316.9 L668.4 316.5 L669.4 316.2 L670.5 315.8 L671.6 315.5 L672.7 315.2 L673.8 314.8 L674.9 314.5 L676.0 314.2 L677.1 313.9 L678.2 313.6 L679.3 313.3 L680.4 313.0 L681.5 312.7 L682.6 312.5 L683.7 312.2 L684.8 311.9 L685.9 311.7 L687.1 311.4 L688.2 311.2 L689.3 311.0 L690.5 310.8 L691.6 310.5 L692.7 310.3 L693.9 310.1 L695.0 309.9 L696.1 309.8 L697.3 309.6 L698.4 309.4 L699.6 309.3 L700.7 309.1 L701.9 309.0 L703.0 308.8 L704.2 308.7 L705.4 308.6 L706.5 308.4 L707.7 308.3 L708.8 308.2 L710.0 308.1 L711.2 308.0 L712.3 307.9 L713.5 307.9 L714.7 307.8 L715.8 307.7 L717.0 307.7 L718.2 307.6 L719.3 307.6 L720.5 307.6 L721.7 307.6 L722.8 307.5 L724.0 307.5 L725.2 307.5 L726.4 307.5 L727.5 307.6 L728.7 307.6 L729.9 307.6 L731.0 307.6 L732.2 307.7 L733.4 307.7 L734.5 307.8 L735.7 307.9 L736.8 307.9 L738.0 308.0 L739.2 308.1 L740.3 308.2 L741.5 308.3 L742.6 308.4 L743.8 308.5 L744.9 308.6 L746.1 308.8 L747.2 308.9 L748.4 309.1 L749.5 309.2 L750.7 309.4 L751.8 309.5 L753.0 309.7 L754.1 309.9 L755.2 310.1 L756.4 310.3 L757.5 310.5 L758.6 310.7 L759.7 310.9 L760.9 311.2 L762.0 311.4 L763.1 311.6 L764.2 311.9 L765.3 312.1 L766.4 312.4 L767.5 312.7 L768.6 313.0 L769.7 313.2 L770.8 313.5 L771.9 313.8 L773.0 314.1 L774.1 314.5 L775.1 314.8 L776.2 315.1 L777.3 315.5 L778.4 315.8 L779.4 316.1 L780.5 316.5 L781.5 316.9 L782.6 317.2 L783.7 317.6 L784.7 318.0 L785.7 318.4 L786.8 318.8 L787.8 319.2 L788.9 319.6 L789.9 320.1 L790.9 320.5 L791.9 320.9 L793.0 321.4 L794.0 321.8 L795.0 322.3 L796.0 322.7 L797.0 323.2 L798.0 323.7 L799.0 324.2 L800.0 324.7 L801.0 325.2 L802.0 325.7 L803.0 326.2 L804.0 326.7 L805.0 327.3 L805.9 327.8 L806.9 328.4 L807.9 328.9 L808.9 329.5 L809.8 330.0 L810.8 330.6 L811.7 331.2 L812.7 331.8 L813.6 332.4 L814.6 333.0 L815.5 333.6 L816.5 334.2 L817.4 334.8 L818.4 335.4 L819.3 336.1 L820.2 336.7 L821.2 337.4 L822.1 338.0 L823.0 338.7 L823.9 339.3 L824.9 340.0 L825.8 340.7 L826.7 341.4 L827.6 342.1 L828.5 342.8 L829.4 343.5 L830.3 344.2 L831.2 344.9 L832.1 345.6 L833.0 346.4 L833.9 347.1 L834.8 347.8 L835.7 348.6 L836.5 349.3 L837.4 350.1 L838.3 350.9 L839.2 351.6 L840.1 352.4 L840.9 353.2 L841.8 354.0 L842.7 354.7 L843.6 355.5 L844.4 356.3 L845.3 357.1 L846.1 357.9 L847.0 358.7 L847.9 359.6 L848.7 360.4 L849.6 361.2 L850.4 362.0 L851.3 362.8 L852.1 363.7 L853.0 364.5 L853.8 365.4 L854.7 366.2 L855.5 367.0 L856.4 367.9 L857.2 368.7 L858.1 369.6 L858.9 370.5 L859.8 371.3 L860.6 372.2 L861.5 373.0 L862.3 373.9 L863.1 374.8 L864.0 375.7 L864.8 376.5 L865.7 377.4 L866.5 378.3 L867.4 379.2 L868.2 380.0 L869.0 380.9 L869.9 381.8 L870.7 382.7 L871.6 383.6 L872.4 384.4 L873.2 385.3 L874.1 386.2 L874.9 387.1 L875.8 388.0 L876.6 388.9 L877.5 389.8 L878.3 390.6 L879.1 391.5 L880.0 392.4 L880.8 393.3 L881.7 394.2 L882.5 395.1 L883.4 395.9 L884.2 396.8 L885.0 397.7 L885.9 398.6 L886.7 399.5 L887.6 400.3 L888.4 401.2 L889.3 402.1 L890.1 402.9 L891.0 403.8 L891.8 404.7 L892.6 405.5 L893.5 406.4 L894.3 407.3 L895.2 408.1 L896.0 409.0 L896.8 409.8 L897.7 410.7 L898.5 411.5 L899.3 412.4 L900.2 413.2 L901.0 414.1 L901.8 414.9 L902.7 415.8 L903.5 416.6 L904.3 417.4 L905.2 418.2 L906.0 419.1 L906.8 419.9 L907.6 420.7 L908.4 421.5 L909.2 422.3 L910.1 423.2 L910.9 424.0 L911.7 424.8 L912.5 425.6 L913.3 426.4 L914.1 427.2 L914.8 428.0 L915.6 428.8 L916.4 429.6 L917.2 430.3 L918.0 431.1 L918.8 431.9 L919.5 432.7 L920.3 433.5 L921.0 434.3 L921.8 435.0 L922.6 435.8 L923.3 436.6 L924.0 437.3 L924.8 438.1 L925.5 438.9 L926.2 439.6 L927.0 440.4 L927.7 441.2 L928.4 441.9 L929.1 442.7 L929.8 443.4 L930.5 444.2 L931.2 444.9 L931.9 445.7 L932.6 446.4 L933.3 447.2 L934.0 447.9 L934.6 448.7 L935.3 449.4 L936.0 450.2 L936.6 450.9 L937.3 451.7 L937.9 452.4 L938.5 453.2 L939.2 453.9 L939.8 454.7 L940.4 455.4 L941.1 456.2 L941.7 456.9 L942.3 457.6 L942.9 458.4 L943.5 459.1 L944.1 459.9 L944.7 460.6 L945.3 461.4 L945.9 462.1 L946.4 462.9 L947.0 463.7 L947.6 464.4 L948.1 465.2 L948.7 465.9 L949.3 466.7 L949.8 467.5 L950.4 468.2 L950.9 469.0 L951.5 469.8 L952.0 470.5 L952.5 471.3 L953.1 472.1 L953.6 472.8 L954.1 473.6 L954.6 474.4 L955.1 475.2 L955.6 476.0 L956.2 476.8 L956.7 477.6 L957.2 478.4 L957.7 479.2 L958.2 480.0 L958.6 480.8 L959.1 481.6 L959.6 482.4 L960.1 483.2 L960.6 484.0 L961.1 484.9 L961.5 485.7 L962.0 486.5 L962.5 487.4 L963.0 488.2 L963.4 489.0 L963.9 489.9 L964.4 490.7 L964.8 491.6 L965.3 492.4 L965.8 493.3 L966.2 494.2 L966.7 495.0 L967.1 495.9 L967.6 496.8 L968.0 497.7 L968.5 498.6 L968.9 499.5 L969.4 500.4 L969.8 501.3 L970.3 502.2 L970.7 503.1 L971.2 504.0 L971.6 504.9 L972.1 505.8 L972.5 506.7 L973.0 507.7 L973.4 508.6 L973.9 509.5 L974.3 510.5 L974.8 511.4 L975.2 512.4 L975.6 513.3 L976.1 514.3 L976.5 515.2 L977.0 516.2 L977.4 517.1 L977.9 518.1 L978.3 519.1 L978.8 520.0 L979.3 521.0 L979.7 522.0 L980.2 523.0 L980.6 524.0 L981.1 525.0 L981.5 526.0 L982.0 526.9 L982.5 527.9 L982.9 528.9 L983.4 529.9 L983.9 530.9 L984.3 532.0 L984.8 533.0 L985.3 534.0 L985.7 535.0 L986.2 536.0 L986.7 537.0 L987.2 538.0 L987.6 539.1 L988.1 540.1 L988.6 541.1 L989.1 542.1 L989.6 543.1 L990.0 544.2 L990.5 545.2 L991.0 546.2 L991.5 547.3 L992.0 548.3 L992.5 549.3 L993.0 550.3 L993.5 551.4 L994.0 552.4 L994.5 553.4 L994.9 554.5 L995.4 555.5 L995.9 556.5 L996.4 557.6 L996.9 558.6 L997.4 559.6 L997.9 560.7 L998.4 561.7 L998.9 562.7 L999.4 563.8 L999.9 564.8 L1000.4 565.8 L1000.9 566.9 L1001.4 567.9 L1001.9 568.9 L1002.4 570.0 L1002.9 571.0 L1003.4 572.0 L1003.8 573.1 L1004.3 574.1 L1004.8 575.1 L1005.3 576.2 L1005.8 577.2 L1006.3 578.2 L1006.7 579.2 L1007.2 580.3 L1007.7 581.3 L1008.2 582.3 L1008.6 583.3 L1009.1 584.4 L1009.6 585.4 L1010.0 586.4 L1010.5 587.5 L1010.9 588.5 L1011.4 589.5 L1011.8 590.5 L1012.3 591.6 L1012.7 592.6 L1013.2 593.6 L1013.6 594.6 L1014.0 595.6 L1014.5 596.7 L1014.9 597.7 L1015.3 598.7 L1015.7 599.7 L1016.1 600.8 L1016.5 601.8 L1016.9 602.8 L1017.3 603.8 L1017.7 604.8 L1018.1 605.9 L1018.5 606.9 L1018.8 607.9 L1019.2 608.9 L1019.6 610.0 L1019.9 611.0 L1020.3 612.0 L1020.6 613.0 L1021.0 614.0 L1021.3 615.1 L1021.6 616.1 L1022.0 617.1 L1022.3 618.1 L1022.6 619.1 L1022.9 620.2 L1023.2 621.2 L1023.5 622.2 L1023.8 623.2 L1024.1 624.2 L1024.3 625.3 L1024.6 626.3 L1024.9 627.3 L1025.1 628.3 L1025.4 629.3 L1025.6 630.4 L1025.8 631.4 L1026.1 632.4 L1026.3 633.4 L1026.5 634.4 L1026.7 635.5 L1026.9 636.5 L1027.1 637.5 L1027.3 638.5 L1027.4 639.5 L1027.6 640.6 L1027.8 641.6 L1027.9 642.6 L1028.1 643.6 L1028.2 644.7 L1028.4 645.7 L1028.5 646.7 L1028.6 647.7 L1028.7 648.7 L1028.8 649.8 L1028.9 650.8 L1029.0 651.8 L1029.1 652.8 L1029.1 653.9 L1029.2 654.9 L1029.3 655.9 L1029.3 656.9 L1029.4 658.0 L1029.4 659.0 L1029.4 660.0 L1029.4 661.0 L1029.4 662.1 L1029.4 663.1 L1029.4 664.1 L1029.4 665.1 L1029.4 666.1 L1029.4 667.2 L1029.3 668.2 L1029.3 669.2 L1029.2 670.2 L1029.2 671.3 L1029.1 672.3 L1029.0 673.3 L1028.9 674.3 L1028.8 675.3 L1028.7 676.4 L1028.6 677.4 L1028.5 678.4 L1028.4 679.4 L1028.3 680.4 L1028.1 681.5 L1028.0 682.5 L1027.8 683.5 L1027.6 684.5 L1027.5 685.5 L1027.3 686.5 L1027.1 687.5 L1026.9 688.6 L1026.7 689.6 L1026.5 690.6 L1026.3 691.6 L1026.0 692.6 L1025.8 693.6 L1025.5 694.6 L1025.3 695.6 L1025.0 696.6 L1024.8 697.6 L1024.5 698.6 L1024.2 699.6 L1023.9 700.6 L1023.6 701.5 L1023.3 702.5 L1023.0 703.5 L1022.6 704.5 L1022.3 705.5 L1022.0 706.4 L1021.6 707.4 L1021.3 708.4 L1020.9 709.4 L1020.5 710.3 L1020.2 711.3 L1019.8 712.2 L1019.4 713.2 L1019.0 714.1 L1018.6 715.1 L1018.1 716.0 L1017.7 717.0 L1017.3 717.9 L1016.8 718.9 L1016.4 719.8 L1015.9 720.7 L1015.5 721.6 L1015.0 722.5 L1014.5 723.5 L1014.0 724.4 L1013.5 725.3 L1013.0 726.2 L1012.5 727.1 L1012.0 728.0 L1011.5 728.9 L1011.0 729.7 L1010.4 730.6 L1009.9 731.5 L1009.3 732.4 L1008.8 733.2 L1008.2 734.1 L1007.6 734.9 L1007.0 735.8 L1006.4 736.6 L1005.8 737.5 L1005.2 738.3 L1004.6 739.1 L1004.0 740.0 L1003.4 740.8 L1002.8 741.6 L1002.1 742.4 L1001.5 743.2 L1000.8 744.0 L1000.2 744.8 L999.5 745.6 L998.8 746.4 L998.1 747.1 L997.5 747.9 L996.8 748.7 L996.1 749.4 L995.3 750.2 L994.6 750.9 L993.9 751.7 L993.2 752.4 L992.4 753.1 L991.7 753.8 L990.9 754.6 L990.2 755.3 L989.4 756.0 L988.7 756.7 L987.9 757.4 L987.1 758.1 L986.3 758.7 L985.5 759.4 L984.7 760.1 L983.9 760.8 L983.1 761.4 L982.2 762.1 L981.4 762.7 L980.6 763.4 L979.7 764.0 L978.9 764.6 L978.0 765.2 L977.1 765.9 L976.3 766.5 L975.4 767.1 L974.5 767.7 L973.6 768.3 L972.7 768.9 L971.8 769.4 L970.9 770.0 L969.9 770.6 L969.0 771.1 L968.1 771.7 L967.1 772.3 L966.2 772.8 L965.2 773.3 L964.3 773.9 L963.3 774.4 L962.3 774.9 L961.3 775.5 L960.3 776.0 L959.3 776.5 L958.3 777.0 L957.3 777.5 L956.3 778.0 L955.3 778.5 L954.2 778.9 L953.2 779.4 L952.2 779.9 L951.1 780.3 L950.0 780.8 L949.0 781.3 L947.9 781.7 L946.8 782.1 L945.8 782.6 L944.7 783.0 L943.6 783.4 L942.5 783.9 L941.4 784.3 L940.3 784.7 L939.1 785.1 L938.0 785.5 L936.9 785.9 L935.7 786.3 L934.6 786.6 L933.5 787.0 L932.3 787.4 L931.2 787.8 L930.0 788.1 L928.8 788.5 L927.7 788.8 L926.5 789.2 L925.3 789.5 L924.1 789.9 L922.9 790.2 L921.7 790.6 L920.5 790.9 L919.3 791.2 L918.1 791.5 L916.9 791.8 L915.7 792.2 L914.5 792.5 L913.2 792.8 L912.0 793.1 L910.8 793.4 L909.6 793.6 L908.3 793.9 L907.1 794.2 L905.8 794.5 L904.6 794.8 L903.3 795.1 L902.1 795.3 L900.8 795.6 L899.6 795.9 L898.3 796.1 L897.0 796.4 L895.8 796.6 L894.5 796.9 L893.2 797.1 L892.0 797.4 L890.7 797.6 L889.4 797.9 L888.1 798.1 L886.9 798.3 L885.6 798.6 L884.3 798.8 L883.0 799.0 L881.7 799.3 L880.4 799.5 L879.1 799.7 L877.9 800.0 L876.6 800.2 L875.3 800.4 L874.0 800.6 L872.7 800.8 L871.4 801.1 L870.1 801.3 L868.8 801.5 L867.5 801.7 L866.2 801.9 L864.9 802.1 L863.6 802.3 L862.3 802.5 L861.1 802.7 L859.8 803.0 L858.5 803.2 L857.2 803.4 L855.9 803.6 L854.6 803.8 L853.3 804.0 L852.0 804.2 L850.7 804.4 L849.4 804.6 L848.2 804.8 L846.9 805.0 L845.6 805.2 L844.3 805.4 L843.0 805.6 L841.8 805.8 L840.5 806.0 L839.2 806.2 L837.9 806.4 L836.7 806.6 L835.4 806.8 L834.1 807.0 L832.9 807.1 L831.6 807.3 L830.3 807.5 L829.1 807.7 L827.8 807.9 L826.6 808.1 L825.3 808.3 L824.1 808.5 L822.8 808.7 L821.6 808.9 L820.3 809.1 L819.1 809.2 L817.9 809.4 L816.6 809.6 L815.4 809.8 L814.2 810.0 L813.0 810.2 L811.7 810.4 L810.5 810.5 L809.3 810.7 L808.1 810.9 L806.9 811.1 L805.7 811.2 L804.5 811.4 L803.3 811.6 L802.1 811.8 L800.9 811.9 L799.7 812.1 L798.5 812.3 L797.3 812.4 L796.1 812.6 L794.9 812.8 L793.8 812.9 L792.6 813.1 L791.4 813.2 L790.3 813.4 L789.1 813.5 L787.9 813.7 L786.8 813.8 L785.6 814.0 L784.5 814.1 L783.3 814.3 L782.2 814.4 L781.0 814.5 L779.9 814.7 L778.7 814.8 L777.6 814.9 L776.5 815.1 L775.3 815.2 L774.2 815.3 L773.1 815.4 L771.9 815.6 L770.8 815.7 L769.7 815.8 L768.6 815.9 L767.4 816.0 L766.3 816.1 L765.2 816.2 L764.1 816.3 L763.0 816.4 L761.9 816.5 L760.8 816.6 L759.7 816.7 L758.5 816.8 L757.4 816.8 L756.3 816.9 L755.2 817.0 L754.1 817.1 L753.0 817.1 L751.9 817.2 L750.8 817.3 L749.7 817.3 L748.6 817.4 L747.5 817.4 L746.4 817.5 L745.3 817.5 L744.2 817.6 L743.2 817.6 L742.1 817.7 L741.0 817.7 L739.9 817.7 L738.8 817.7 L737.7 817.8 L736.6 817.8 L735.5 817.8 L734.4 817.8 L733.3 817.8 L732.2 817.9 L731.1 817.9 L730.0 817.9 M507.8 481.4 L508.4 480.7 L508.9 479.9 L509.4 479.1 L509.9 478.4 L510.4 477.6 L511.0 476.8 L511.5 476.1 L512.0 475.3 L512.6 474.6 L513.1 473.8 L513.7 473.1 L514.2 472.3 L514.8 471.6 L515.3 470.8 L515.9 470.1 L516.4 469.3 L517.0 468.6 L517.6 467.8 L518.1 467.1 L518.7 466.3 L519.3 465.6 L519.9 464.8 L520.5 464.1 L521.1 463.3 L521.7 462.6 L522.3 461.8 L522.9 461.1 L523.5 460.3 L524.1 459.6 L524.7 458.8 L525.4 458.1 L526.0 457.3 L526.6 456.6 L527.3 455.8 L527.9 455.1 L528.6 454.3 L529.2 453.6 L529.9 452.8 L530.5 452.0 L531.2 451.3 L531.9 450.5 L532.5 449.8 L533.2 449.0 L533.9 448.2 L534.6 447.4 L535.3 446.7 L536.0 445.9 L536.7 445.1 L537.4 444.3 L538.1 443.6 L538.8 442.8 L539.5 442.0 L540.2 441.2 L541.0 440.4 L541.7 439.6 L542.4 438.8 L543.2 438.0 L543.9 437.2 L544.7 436.4 L545.4 435.6 L546.2 434.8 L546.9 434.0 L547.7 433.2 L548.4 432.4 L549.2 431.6 L550.0 430.7 L550.8 429.9 L551.5 429.1 L552.3 428.3 L553.1 427.4 L553.9 426.6 L554.7 425.8 L555.4 424.9 L556.2 424.1 L557.0 423.3 L557.8 422.4 L558.6 421.6 L559.4 420.7 L560.2 419.9 L561.0 419.0 L561.8 418.2 L562.6 417.3 L563.4 416.5 L564.2 415.6 L565.1 414.8 L565.9 413.9 L566.7 413.0 L567.5 412.2 L568.3 411.3 L569.1 410.4 L569.9 409.6 L570.7 408.7 L571.6 407.8 L572.4 407.0 L573.2 406.1 L574.0 405.2 L574.8 404.4 L575.7 403.5 L576.5 402.6 L577.3 401.8 L578.1 400.9 L578.9 400.0 L579.8 399.2 L580.6 398.3 L581.4 397.4 L582.2 396.6 L583.0 395.7 L583.9 394.8 L584.7 394.0 L585.5 393.1 L586.3 392.2 L587.1 391.4 L588.0 390.5 L588.8 389.7 L589.6 388.8 L590.4 388.0 L591.2 387.1 L592.1 386.3 L592.9 385.4 L593.7 384.6 L594.5 383.7 L595.4 382.9 L596.2 382.1 L597.0 381.2 L597.8 380.4 L598.6 379.6 L599.5 378.7 L600.3 377.9 L601.1 377.1 L601.9 376.3 L602.8 375.5 L603.6 374.7 L604.4 373.9 L605.2 373.1 L606.1 372.3 L606.9 371.5 L607.7 370.7 L608.5 369.9 L609.4 369.2 L610.2 368.4 L611.0 367.6 L611.8 366.9 L612.7 366.1 L613.5 365.4 L614.3 364.6 L615.2 363.9 L616.0 363.2 L616.8 362.4 L617.7 361.7 L618.5 361.0 L619.4 360.3 L620.2 359.6 L621.0 358.9 L621.9 358.2 L622.7 357.5 L623.6 356.8 L624.4 356.1 L625.3 355.4 L626.1 354.8 L627.0 354.1 L627.8 353.5 L628.7 352.8 L629.5 352.2 L630.4 351.5 L631.2 350.9 L632.1 350.3 L632.9 349.7 L633.8 349.0 L634.7 348.4 L635.5 347.8 L636.4 347.3 L637.3 346.7 L638.1 346.1 L639.0 345.5 L639.9 344.9 L640.8 344.4 L641.6 343.8 L642.5 343.3 L643.4 342.7 L644.3 342.2 L645.2 341.7 L646.1 341.2 L647.0 340.7 L647.8 340.1 L648.7 339.6 L649.6 339.1 L650.5 338.7 L651.4 338.2 L652.3 337.7 L653.2 337.2 L654.2 336.8 L655.1 336.3 L656.0 335.9 L656.9 335.4 L657.8 335.0 L658.7 334.6 L659.7 334.1 L660.6 333.7 L661.5 333.3 L662.4 332.9 L663.4 332.5 L664.3 332.1 L665.2 331.7 L666.2 331.4 L667.1 331.0 L668.1 330.6 L669.0 330.3 L670.0 329.9 L670.9 329.6 L671.9 329.2 L672.9 328.9 L673.8 328.6 L674.8 328.2 L675.8 327.9 L676.7 327.6 L677.7 327.3 L678.7 327.0 L679.7 326.7 L680.7 326.4 L681.6 326.2 L682.6 325.9 L683.6 325.6 L684.6 325.4 L685.6 325.1 L686.6 324.9 L687.6 324.6 L688.6 324.4 L689.7 324.2 L690.7 324.0 L691.7 323.8 L692.7 323.6 L693.7 323.4 L694.7 323.2 L695.8 323.0 L696.8 322.8 L697.8 322.6 L698.9 322.5 L699.9 322.3 L700.9 322.1 L702.0 322.0 L703.0 321.9 L704.1 321.7 L705.1 321.6 L706.1 321.5 L707.2 321.4 L708.2 321.2 L709.3 321.1 L710.3 321.1 L711.4 321.0 L712.4 320.9 L713.5 320.8 L714.6 320.7 L715.6 320.7 L716.7 320.6 L717.7 320.6 L718.8 320.5 L719.8 320.5 L720.9 320.5 L722.0 320.5 L723.0 320.4 L724.1 320.4 L725.1 320.4 L726.2 320.4 L727.3 320.5 L728.3 320.5 L729.4 320.5 L730.4 320.5 L731.5 320.6 L732.5 320.6 L733.6 320.7 L734.7 320.7 L735.7 320.8 L736.8 320.9 L737.8 320.9 L738.8 321.0 L739.9 321.1 L740.9 321.2 L742.0 321.3 L743.0 321.4 L744.1 321.6 L745.1 321.7 L746.1 321.8 L747.2 322.0 L748.2 322.1 L749.2 322.3 L750.2 322.4 L751.3 322.6 L752.3 322.7 L753.3 322.9 L754.3 323.1 L755.3 323.3 L756.3 323.5 L757.4 323.7 L758.4 323.9 L759.4 324.1 L760.4 324.4 L761.3 324.6 L762.3 324.8 L763.3 325.1 L764.3 325.3 L765.3 325.6 L766.3 325.8 L767.3 326.1 L768.2 326.4 L769.2 326.7 L770.2 327.0 L771.1 327.2 L772.1 327.6 L773.0 327.9 L774.0 328.2 L775.0 328.5 L775.9 328.8 L776.8 329.2 L777.8 329.5 L778.7 329.8 L779.7 330.2 L780.6 330.6 L781.5 330.9 L782.5 331.3 L783.4 331.7 L784.3 332.1 L785.2 332.5 L786.1 332.9 L787.0 333.3 L788.0 333.7 L788.9 334.1 L789.8 334.5 L790.7 334.9 L791.6 335.4 L792.5 335.8 L793.4 336.3 L794.3 336.7 L795.2 337.2 L796.0 337.7 L796.9 338.2 L797.8 338.7 L798.7 339.1 L799.6 339.6 L800.4 340.2 L801.3 340.7 L802.2 341.2 L803.1 341.7 L803.9 342.2 L804.8 342.8 L805.7 343.3 L806.5 343.9 L807.4 344.5 L808.3 345.0 L809.1 345.6 L810.0 346.2 L810.8 346.8 L811.7 347.4 L812.5 348.0 L813.4 348.6 L814.2 349.2 L815.1 349.8 L815.9 350.4 L816.8 351.1 L817.6 351.7 L818.5 352.4 L819.3 353.0 L820.1 353.7 L821.0 354.4 L821.8 355.0 L822.6 355.7 L823.5 356.4 L824.3 357.1 L825.2 357.8 L826.0 358.5 L826.8 359.2 L827.6 359.9 L828.5 360.7 L829.3 361.4 L830.1 362.1 L831.0 362.9 L831.8 363.6 L832.6 364.4 L833.4 365.1 L834.3 365.9 L835.1 366.7 L835.9 367.4 L836.8 368.2 L837.6 369.0 L838.4 369.8 L839.2 370.6 L840.1 371.4 L840.9 372.2 L841.7 373.0 L842.5 373.8 L843.4 374.6 L844.2 375.5 L845.0 376.3 L845.8 377.1 L846.7 378.0 L847.5 378.8 L848.3 379.6 L849.1 380.5 L850.0 381.3 L850.8 382.2 L851.6 383.0 L852.5 383.9 L853.3 384.8 L854.1 385.6 L854.9 386.5 L855.8 387.4 L856.6 388.2 L857.4 389.1 L858.3 390.0 L859.1 390.9 L860.0 391.7 L860.8 392.6 L861.6 393.5 L862.5 394.4 L863.3 395.3 L864.2 396.1 L865.0 397.0 L865.8 397.9 L866.7 398.8 L867.5 399.7 L868.4 400.6 L869.2 401.5 L870.1 402.4 L870.9 403.3 L871.8 404.1 L872.6 405.0 L873.5 405.9 L874.3 406.8 L875.2 407.7 L876.0 408.6 L876.9 409.4 L877.7 410.3 L878.6 411.2 L879.4 412.1 L880.3 413.0 L881.1 413.8 L882.0 414.7 L882.8 415.6 L883.7 416.4 L884.5 417.3 L885.4 418.2 L886.2 419.0 L887.1 419.9 L887.9 420.7 L888.8 421.6 L889.6 422.4 L890.4 423.3 L891.3 424.1 L892.1 425.0 L892.9 425.8 L893.8 426.6 L894.6 427.5 L895.4 428.3 L896.2 429.1 L897.0 429.9 L897.9 430.7 L898.7 431.6 L899.5 432.4 L900.3 433.2 L901.1 434.0 L901.9 434.8 L902.7 435.6 L903.4 436.4 L904.2 437.1 L905.0 437.9 L905.8 438.7 L906.5 439.5 L907.3 440.3 L908.1 441.0 L908.8 441.8 L909.6 442.6 L910.3 443.3 L911.0 444.1 L911.8 444.8 L912.5 445.6 L913.2 446.3 L913.9 447.1 L914.7 447.8 L915.4 448.6 L916.1 449.3 L916.7 450.0 L917.4 450.8 L918.1 451.5 L918.8 452.2 L919.5 452.9 L920.1 453.7 L920.8 454.4 L921.4 455.1 L922.1 455.8 L922.7 456.5 L923.4 457.3 L924.0 458.0 L924.6 458.7 L925.2 459.4 L925.9 460.1 L926.5 460.8 L927.1 461.5 L927.7 462.2 L928.3 462.9 L928.8 463.6 L929.4 464.3 L930.0 465.1 L930.6 465.8 L931.1 466.5 L931.7 467.2 L932.3 467.9 L932.8 468.6 L933.4 469.3 L933.9 470.0 L934.4 470.7 L935.0 471.4 L935.5 472.1 L936.0 472.8 L936.6 473.5 L937.1 474.3 L937.6 475.0 L938.1 475.7 L938.6 476.4 L939.1 477.1 L939.6 477.9 L940.1 478.6 L940.6 479.3 L941.1 480.0 L941.6 480.8 L942.1 481.5 L942.5 482.2 L943.0 483.0 L943.5 483.7 L944.0 484.5 L944.4 485.2 L944.9 486.0 L945.4 486.8 L945.8 487.5 L946.3 488.3 L946.7 489.1 L947.2 489.8 L947.6 490.6 L948.1 491.4 L948.5 492.2 L949.0 493.0 L949.4 493.8 L949.9 494.6 L950.3 495.4 L950.8 496.2 L951.2 497.0 L951.7 497.8 L952.1 498.7 L952.5 499.5 L953.0 500.3 L953.4 501.2 L953.9 502.0 L954.3 502.9 L954.7 503.7 L955.2 504.6 L955.6 505.5 L956.0 506.3 L956.5 507.2 L956.9 508.1 L957.4 509.0 L957.8 509.9 L958.2 510.8 L958.7 511.7 L959.1 512.6 L959.5 513.5 L960.0 514.4 L960.4 515.3 L960.9 516.3 L961.3 517.2 L961.7 518.1 L962.2 519.1 L962.6 520.0 L963.1 521.0 L963.5 521.9 L964.0 522.9 L964.4 523.9 L964.9 524.8 L965.3 525.8 L965.8 526.8 L966.2 527.8 L966.7 528.7 L967.1 529.7 L967.6 530.7 L968.1 531.7 L968.5 532.7 L969.0 533.7 L969.5 534.7 L969.9 535.7 L970.4 536.7 L970.9 537.8 L971.3 538.8 L971.8 539.8 L972.3 540.8 L972.8 541.8 L973.2 542.9 L973.7 543.9 L974.2 544.9 L974.7 545.9 L975.2 547.0 L975.7 548.0 L976.2 549.0 L976.6 550.1 L977.1 551.1 L977.6 552.1 L978.1 553.2 L978.6 554.2 L979.1 555.2 L979.6 556.3 L980.1 557.3 L980.6 558.3 L981.1 559.4 L981.6 560.4 L982.1 561.5 L982.6 562.5 L983.1 563.5 L983.6 564.6 L984.1 565.6 L984.6 566.6 L985.0 567.7 L985.5 568.7 L986.0 569.7 L986.5 570.7 L987.0 571.8 L987.5 572.8 L988.0 573.8 L988.5 574.9 L989.0 575.9 L989.5 576.9 L990.0 577.9 L990.4 578.9 L990.9 580.0 L991.4 581.0 L991.9 582.0 L992.3 583.0 L992.8 584.0 L993.3 585.0 L993.7 586.0 L994.2 587.1 L994.7 588.1 L995.1 589.1 L995.6 590.1 L996.0 591.1 L996.5 592.1 L996.9 593.1 L997.4 594.1 L997.8 595.1 L998.2 596.1 L998.7 597.0 L999.1 598.0 L999.5 599.0 L999.9 600.0 L1000.3 601.0 L1000.7 602.0 L1001.1 603.0 L1001.5 604.0 L1001.9 604.9 L1002.3 605.9 L1002.7 606.9 L1003.1 607.9 L1003.4 608.8 L1003.8 609.8 L1004.2 610.8 L1004.5 611.8 L1004.9 612.7 L1005.2 613.7 L1005.6 614.7 L1005.9 615.6 L1006.2 616.6 L1006.6 617.6 L1006.9 618.5 L1007.2 619.5 L1007.5 620.5 L1007.8 621.4 L1008.1 622.4 L1008.4 623.3 L1008.6 624.3 L1008.9 625.3 L1009.2 626.2 L1009.5 627.2 L1009.7 628.1 L1010.0 629.1 L1010.2 630.0 L1010.4 631.0 L1010.7 631.9 L1010.9 632.9 L1011.1 633.8 L1011.3 634.8 L1011.5 635.7 L1011.7 636.7 L1011.9 637.6 L1012.1 638.6 L1012.3 639.5 L1012.4 640.5 L1012.6 641.4 L1012.8 642.3 L1012.9 643.3 L1013.1 644.2 L1013.2 645.2 L1013.3 646.1 L1013.4 647.1 L1013.6 648.0 L1013.7 648.9 L1013.8 649.9 L1013.9 650.8 L1013.9 651.8 L1014.0 652.7 L1014.1 653.7 L1014.2 654.6 L1014.2 655.5 L1014.3 656.5 L1014.3 657.4 L1014.4 658.4 L1014.4 659.3 L1014.4 660.2 L1014.4 661.2 L1014.4 662.1 L1014.4 663.1 L1014.4 664.0 L1014.4 664.9 L1014.4 665.9 L1014.4 666.8 L1014.3 667.7 L1014.3 668.7 L1014.2 669.6 L1014.2 670.6 L1014.1 671.5 L1014.1 672.4 L1014.0 673.4 L1013.9 674.3 L1013.8 675.2 L1013.7 676.2 L1013.6 677.1 L1013.5 678.0 L1013.4 679.0 L1013.2 679.9 L1013.1 680.8 L1012.9 681.7 L1012.8 682.7 L1012.6 683.6 L1012.5 684.5 L1012.3 685.4 L1012.1 686.4 L1011.9 687.3 L1011.7 688.2 L1011.5 689.1 L1011.3 690.0 L1011.1 691.0 L1010.9 691.9 L1010.6 692.8 L1010.4 693.7 L1010.2 694.6 L1009.9 695.5 L1009.6 696.4 L1009.4 697.3 L1009.1 698.2 L1008.8 699.1 L1008.5 700.0 L1008.2 700.9 L1007.9 701.8 L1007.6 702.7 L1007.3 703.6 L1007.0 704.5 L1006.6 705.3 L1006.3 706.2 L1006.0 707.1 L1005.6 708.0 L1005.3 708.8 L1004.9 709.7 L1004.5 710.5 L1004.1 711.4 L1003.8 712.3 L1003.4 713.1 L1003.0 714.0 L1002.6 714.8 L1002.1 715.6 L1001.7 716.5 L1001.3 717.3 L1000.9 718.1 L1000.4 718.9 L1000.0 719.8 L999.5 720.6 L999.1 721.4 L998.6 722.2 L998.1 723.0 L997.7 723.8 L997.2 724.6 L996.7 725.4 L996.2 726.1 L995.7 726.9 L995.2 727.7 L994.7 728.4 L994.1 729.2 L993.6 730.0 L993.1 730.7 L992.5 731.5 L992.0 732.2 L991.4 732.9 L990.9 733.7 L990.3 734.4 L989.8 735.1 L989.2 735.8 L988.6 736.5 L988.0 737.2 L987.4 737.9 L986.8 738.6 L986.2 739.3 L985.6 740.0 L985.0 740.7 L984.4 741.3 L983.7 742.0 L983.1 742.7 L982.5 743.3 L981.8 744.0 L981.2 744.6 L980.5 745.3 L979.8 745.9 L979.2 746.5 L978.5 747.1 L977.8 747.8 L977.1 748.4 L976.4 749.0 L975.7 749.6 L975.0 750.2 L974.3 750.8 L973.6 751.4 L972.9 751.9 L972.1 752.5 L971.4 753.1 L970.7 753.7 L969.9 754.2 L969.2 754.8 L968.4 755.3 L967.6 755.9 L966.8 756.4 L966.1 757.0 L965.3 757.5 L964.5 758.0 L963.7 758.5 L962.9 759.1 L962.1 759.6 L961.2 760.1 L960.4 760.6 L959.6 761.1 L958.7 761.6 L957.9 762.1 L957.0 762.5 L956.2 763.0 L955.3 763.5 L954.4 764.0 L953.5 764.4 L952.6 764.9 L951.7 765.4 L950.8 765.8 L949.9 766.3 L949.0 766.7 L948.1 767.1 L947.2 767.6 L946.2 768.0 L945.3 768.4 L944.3 768.8 L943.4 769.3 L942.4 769.7 L941.4 770.1 L940.4 770.5 L939.4 770.9 L938.4 771.3 L937.4 771.7 L936.4 772.0 L935.4 772.4 L934.4 772.8 L933.4 773.2 L932.3 773.5 L931.3 773.9 L930.2 774.3 L929.2 774.6 L928.1 775.0 L927.0 775.3 L926.0 775.7 L924.9 776.0 L923.8 776.3 L922.7 776.7 L921.6 777.0 L920.5 777.3 L919.4 777.6 L918.3 778.0 L917.1 778.3 L916.0 778.6 L914.9 778.9 L913.7 779.2 L912.6 779.5 L911.4 779.8 L910.3 780.1 L909.1 780.4 L908.0 780.6 L906.8 780.9 L905.6 781.2 L904.4 781.5 L903.2 781.7 L902.1 782.0 L900.9 782.3 L899.7 782.5 L898.4 782.8 L897.2 783.1 L896.0 783.3 L894.8 783.6 L893.6 783.8 L892.4 784.1 L891.1 784.3 L889.9 784.6 L888.7 784.8 L887.4 785.0 L886.2 785.3 L884.9 785.5 L883.7 785.7 L882.4 786.0 L881.2 786.2 L879.9 786.4 L878.7 786.6 L877.4 786.9 L876.2 787.1 L874.9 787.3 L873.6 787.5 L872.4 787.7 L871.1 788.0 L869.8 788.2 L868.5 788.4 L867.3 788.6 L866.0 788.8 L864.7 789.0 L863.4 789.2 L862.1 789.4 L860.9 789.6 L859.6 789.9 L858.3 790.1 L857.0 790.3 L855.7 790.5 L854.5 790.7 L853.2 790.9 L851.9 791.1 L850.6 791.3 L849.3 791.5 L848.0 791.7 L846.8 791.9 L845.5 792.1 L844.2 792.3 L842.9 792.5 L841.6 792.7 L840.4 792.9 L839.1 793.1 L837.8 793.3 L836.5 793.5 L835.3 793.7 L834.0 793.9 L832.7 794.1 L831.5 794.3 L830.2 794.4 L829.0 794.6 L827.7 794.8 L826.4 795.0 L825.2 795.2 L823.9 795.4 L822.7 795.6 L821.5 795.8 L820.2 796.0 L819.0 796.2 L817.7 796.4 L816.5 796.5 L815.3 796.7 L814.0 796.9 L812.8 797.1 L811.6 797.3 L810.4 797.5 L809.2 797.6 L808.0 797.8 L806.8 798.0 L805.6 798.2 L804.4 798.3 L803.2 798.5 L802.0 798.7 L800.8 798.9 L799.6 799.0 L798.4 799.2 L797.3 799.4 L796.1 799.5 L794.9 799.7 L793.8 799.9 L792.6 800.0 L791.4 800.2 L790.3 800.3 L789.1 800.5 L788.0 800.6 L786.9 800.8 L785.7 800.9 L784.6 801.1 L783.4 801.2 L782.3 801.4 L781.2 801.5 L780.1 801.6 L779.0 801.8 L777.8 801.9 L776.7 802.0 L775.6 802.2 L774.5 802.3 L773.4 802.4 L772.3 802.5 L771.2 802.6 L770.1 802.7 L769.1 802.9 L768.0 803.0 L766.9 803.1 L765.8 803.2 L764.7 803.3 L763.7 803.4 L762.6 803.5 L761.5 803.6 L760.4 803.6 L759.4 803.7 L758.3 803.8 L757.2 803.9 L756.2 804.0 L755.1 804.1 L754.1 804.1 L753.0 804.2 L752.0 804.3 L750.9 804.3 L749.9 804.4 L748.8 804.4 L747.8 804.5 L746.7 804.5 L745.7 804.6 L744.6 804.6 L743.6 804.7 L742.5 804.7 L741.5 804.8 L740.4 804.8 L739.4 804.8 L738.3 804.9 L737.3 804.9 L736.2 804.9 L735.2 804.9 L734.2 804.9 L733.1 805.0 L732.1 805.0 L731.0 805.0 L730.0 805.0 M512.6 483.8 L513.1 483.0 L513.6 482.3 L514.1 481.5 L514.6 480.8 L515.2 480.0 L515.7 479.3 L516.2 478.5 L516.7 477.8 L517.3 477.1 L517.8 476.3 L518.3 475.6 L518.9 474.8 L519.4 474.1 L519.9 473.4 L520.5 472.6 L521.0 471.9 L521.6 471.2 L522.2 470.4 L522.7 469.7 L523.3 469.0 L523.9 468.2 L524.4 467.5 L525.0 466.8 L525.6 466.0 L526.2 465.3 L526.8 464.6 L527.4 463.8 L528.0 463.1 L528.6 462.3 L529.2 461.6 L529.8 460.9 L530.5 460.1 L531.1 459.4 L531.7 458.6 L532.3 457.9 L533.0 457.1 L533.6 456.4 L534.3 455.6 L534.9 454.9 L535.6 454.1 L536.3 453.4 L536.9 452.6 L537.6 451.9 L538.3 451.1 L539.0 450.3 L539.6 449.6 L540.3 448.8 L541.0 448.0 L541.7 447.3 L542.4 446.5 L543.1 445.7 L543.8 444.9 L544.6 444.1 L545.3 443.4 L546.0 442.6 L546.7 441.8 L547.5 441.0 L548.2 440.2 L549.0 439.4 L549.7 438.6 L550.5 437.8 L551.2 437.0 L552.0 436.2 L552.7 435.4 L553.5 434.5 L554.3 433.7 L555.0 432.9 L555.8 432.1 L556.6 431.3 L557.4 430.4 L558.1 429.6 L558.9 428.8 L559.7 427.9 L560.5 427.1 L561.3 426.2 L562.1 425.4 L562.9 424.6 L563.7 423.7 L564.5 422.9 L565.3 422.0 L566.1 421.2 L566.9 420.3 L567.7 419.5 L568.5 418.6 L569.3 417.7 L570.1 416.9 L570.9 416.0 L571.8 415.2 L572.6 414.3 L573.4 413.4 L574.2 412.6 L575.0 411.7 L575.8 410.8 L576.7 410.0 L577.5 409.1 L578.3 408.2 L579.1 407.3 L579.9 406.5 L580.7 405.6 L581.6 404.7 L582.4 403.9 L583.2 403.0 L584.0 402.1 L584.8 401.3 L585.7 400.4 L586.5 399.5 L587.3 398.7 L588.1 397.8 L588.9 397.0 L589.8 396.1 L590.6 395.2 L591.4 394.4 L592.2 393.5 L593.0 392.7 L593.8 391.8 L594.7 391.0 L595.5 390.1 L596.3 389.3 L597.1 388.4 L597.9 387.6 L598.7 386.8 L599.6 385.9 L600.4 385.1 L601.2 384.3 L602.0 383.5 L602.8 382.6 L603.6 381.8 L604.4 381.0 L605.3 380.2 L606.1 379.4 L606.9 378.6 L607.7 377.8 L608.5 377.0 L609.3 376.2 L610.1 375.5 L611.0 374.7 L611.8 373.9 L612.6 373.1 L613.4 372.4 L614.2 371.6 L615.0 370.9 L615.8 370.1 L616.7 369.4 L617.5 368.6 L618.3 367.9 L619.1 367.2 L619.9 366.5 L620.8 365.8 L621.6 365.0 L622.4 364.3 L623.2 363.6 L624.0 363.0 L624.9 362.3 L625.7 361.6 L626.5 360.9 L627.3 360.2 L628.2 359.6 L629.0 358.9 L629.8 358.3 L630.6 357.6 L631.5 357.0 L632.3 356.4 L633.1 355.7 L634.0 355.1 L634.8 354.5 L635.6 353.9 L636.5 353.3 L637.3 352.7 L638.1 352.1 L639.0 351.5 L639.8 351.0 L640.7 350.4 L641.5 349.8 L642.3 349.3 L643.2 348.7 L644.0 348.2 L644.9 347.7 L645.7 347.1 L646.6 346.6 L647.4 346.1 L648.3 345.6 L649.1 345.1 L650.0 344.6 L650.9 344.1 L651.7 343.6 L652.6 343.1 L653.5 342.7 L654.3 342.2 L655.2 341.7 L656.1 341.3 L656.9 340.9 L657.8 340.4 L658.7 340.0 L659.6 339.6 L660.5 339.1 L661.3 338.7 L662.2 338.3 L663.1 337.9 L664.0 337.5 L664.9 337.1 L665.8 336.8 L666.7 336.4 L667.6 336.0 L668.5 335.6 L669.4 335.3 L670.3 334.9 L671.2 334.6 L672.1 334.3 L673.1 333.9 L674.0 333.6 L674.9 333.3 L675.8 333.0 L676.8 332.7 L677.7 332.4 L678.6 332.1 L679.6 331.8 L680.5 331.5 L681.4 331.2 L682.4 330.9 L683.3 330.7 L684.3 330.4 L685.2 330.2 L686.2 329.9 L687.1 329.7 L688.1 329.4 L689.1 329.2 L690.0 329.0 L691.0 328.8 L692.0 328.6 L693.0 328.4 L693.9 328.2 L694.9 328.0 L695.9 327.8 L696.9 327.6 L697.9 327.4 L698.9 327.3 L699.9 327.1 L700.8 327.0 L701.8 326.8 L702.8 326.7 L703.8 326.5 L704.8 326.4 L705.8 326.3 L706.9 326.2 L707.9 326.1 L708.9 325.9 L709.9 325.9 L710.9 325.8 L711.9 325.7 L712.9 325.6 L713.9 325.5 L714.9 325.5 L716.0 325.4 L717.0 325.4 L718.0 325.3 L719.0 325.3 L720.0 325.2 L721.1 325.2 L722.1 325.2 L723.1 325.2 L724.1 325.2 L725.1 325.2 L726.1 325.2 L727.2 325.2 L728.2 325.2 L729.2 325.2 L730.2 325.3 L731.2 325.3 L732.2 325.3 L733.3 325.4 L734.3 325.4 L735.3 325.5 L736.3 325.6 L737.3 325.7 L738.3 325.7 L739.3 325.8 L740.3 325.9 L741.3 326.0 L742.3 326.1 L743.3 326.2 L744.3 326.4 L745.3 326.5 L746.3 326.6 L747.3 326.8 L748.3 326.9 L749.3 327.1 L750.2 327.2 L751.2 327.4 L752.2 327.6 L753.2 327.7 L754.1 327.9 L755.1 328.1 L756.1 328.3 L757.0 328.5 L758.0 328.7 L758.9 328.9 L759.9 329.2 L760.8 329.4 L761.8 329.6 L762.7 329.9 L763.7 330.1 L764.6 330.3 L765.6 330.6 L766.5 330.9 L767.4 331.1 L768.3 331.4 L769.3 331.7 L770.2 332.0 L771.1 332.3 L772.0 332.6 L772.9 332.9 L773.8 333.2 L774.7 333.5 L775.6 333.8 L776.5 334.2 L777.4 334.5 L778.3 334.9 L779.2 335.2 L780.1 335.6 L781.0 335.9 L781.9 336.3 L782.8 336.7 L783.6 337.1 L784.5 337.5 L785.4 337.8 L786.2 338.3 L787.1 338.7 L788.0 339.1 L788.8 339.5 L789.7 339.9 L790.6 340.4 L791.4 340.8 L792.3 341.2 L793.1 341.7 L794.0 342.2 L794.8 342.6 L795.7 343.1 L796.5 343.6 L797.4 344.1 L798.2 344.6 L799.0 345.1 L799.9 345.6 L800.7 346.1 L801.6 346.6 L802.4 347.1 L803.2 347.7 L804.1 348.2 L804.9 348.8 L805.7 349.3 L806.5 349.9 L807.4 350.4 L808.2 351.0 L809.0 351.6 L809.8 352.2 L810.7 352.8 L811.5 353.4 L812.3 354.0 L813.1 354.6 L814.0 355.2 L814.8 355.9 L815.6 356.5 L816.4 357.2 L817.2 357.8 L818.0 358.5 L818.9 359.1 L819.7 359.8 L820.5 360.5 L821.3 361.2 L822.1 361.9 L822.9 362.6 L823.7 363.3 L824.6 364.0 L825.4 364.7 L826.2 365.4 L827.0 366.1 L827.8 366.9 L828.6 367.6 L829.4 368.4 L830.2 369.1 L831.1 369.9 L831.9 370.6 L832.7 371.4 L833.5 372.2 L834.3 372.9 L835.1 373.7 L835.9 374.5 L836.7 375.3 L837.6 376.1 L838.4 376.9 L839.2 377.7 L840.0 378.5 L840.8 379.4 L841.6 380.2 L842.5 381.0 L843.3 381.8 L844.1 382.7 L844.9 383.5 L845.7 384.4 L846.6 385.2 L847.4 386.1 L848.2 386.9 L849.0 387.8 L849.9 388.6 L850.7 389.5 L851.5 390.4 L852.4 391.2 L853.2 392.1 L854.0 393.0 L854.9 393.9 L855.7 394.7 L856.5 395.6 L857.4 396.5 L858.2 397.4 L859.1 398.3 L859.9 399.1 L860.7 400.0 L861.6 400.9 L862.4 401.8 L863.3 402.7 L864.1 403.6 L865.0 404.5 L865.8 405.4 L866.7 406.3 L867.5 407.1 L868.4 408.0 L869.2 408.9 L870.1 409.8 L870.9 410.7 L871.8 411.6 L872.7 412.5 L873.5 413.4 L874.4 414.2 L875.2 415.1 L876.1 416.0 L876.9 416.9 L877.8 417.7 L878.6 418.6 L879.5 419.5 L880.3 420.4 L881.2 421.2 L882.0 422.1 L882.9 422.9 L883.7 423.8 L884.6 424.7 L885.4 425.5 L886.2 426.4 L887.1 427.2 L887.9 428.0 L888.8 428.9 L889.6 429.7 L890.4 430.5 L891.2 431.4 L892.1 432.2 L892.9 433.0 L893.7 433.8 L894.5 434.6 L895.3 435.4 L896.1 436.2 L896.9 437.0 L897.7 437.8 L898.5 438.6 L899.3 439.4 L900.0 440.2 L900.8 441.0 L901.6 441.8 L902.4 442.5 L903.1 443.3 L903.9 444.1 L904.6 444.8 L905.4 445.6 L906.1 446.4 L906.8 447.1 L907.6 447.9 L908.3 448.6 L909.0 449.3 L909.7 450.1 L910.4 450.8 L911.1 451.6 L911.8 452.3 L912.5 453.0 L913.2 453.7 L913.8 454.5 L914.5 455.2 L915.2 455.9 L915.8 456.6 L916.5 457.3 L917.1 458.0 L917.7 458.7 L918.4 459.4 L919.0 460.1 L919.6 460.8 L920.2 461.5 L920.8 462.2 L921.4 462.9 L922.0 463.6 L922.6 464.3 L923.2 465.0 L923.8 465.7 L924.4 466.4 L924.9 467.1 L925.5 467.8 L926.1 468.5 L926.6 469.1 L927.2 469.8 L927.7 470.5 L928.2 471.2 L928.8 471.9 L929.3 472.6 L929.8 473.3 L930.4 474.0 L930.9 474.7 L931.4 475.4 L931.9 476.1 L932.4 476.7 L932.9 477.4 L933.4 478.1 L933.9 478.8 L934.4 479.6 L934.9 480.3 L935.4 481.0 L935.8 481.7 L936.3 482.4 L936.8 483.1 L937.3 483.8 L937.7 484.5 L938.2 485.3 L938.7 486.0 L939.1 486.7 L939.6 487.5 L940.0 488.2 L940.5 488.9 L940.9 489.7 L941.4 490.4 L941.8 491.2 L942.3 492.0 L942.7 492.7 L943.2 493.5 L943.6 494.3 L944.0 495.0 L944.5 495.8 L944.9 496.6 L945.4 497.4 L945.8 498.2 L946.2 499.0 L946.7 499.8 L947.1 500.6 L947.5 501.5 L948.0 502.3 L948.4 503.1 L948.8 503.9 L949.3 504.8 L949.7 505.6 L950.1 506.5 L950.6 507.3 L951.0 508.2 L951.4 509.1 L951.9 509.9 L952.3 510.8 L952.7 511.7 L953.2 512.6 L953.6 513.5 L954.0 514.4 L954.5 515.3 L954.9 516.2 L955.3 517.1 L955.8 518.1 L956.2 519.0 L956.6 519.9 L957.1 520.9 L957.5 521.8 L958.0 522.7 L958.4 523.7 L958.9 524.7 L959.3 525.6 L959.8 526.6 L960.2 527.6 L960.7 528.5 L961.1 529.5 L961.6 530.5 L962.0 531.5 L962.5 532.5 L963.0 533.5 L963.4 534.5 L963.9 535.5 L964.4 536.5 L964.8 537.5 L965.3 538.5 L965.8 539.5 L966.2 540.5 L966.7 541.6 L967.2 542.6 L967.7 543.6 L968.1 544.6 L968.6 545.6 L969.1 546.7 L969.6 547.7 L970.1 548.7 L970.6 549.8 L971.1 550.8 L971.5 551.8 L972.0 552.9 L972.5 553.9 L973.0 555.0 L973.5 556.0 L974.0 557.0 L974.5 558.1 L975.0 559.1 L975.5 560.1 L976.0 561.2 L976.5 562.2 L977.0 563.3 L977.5 564.3 L978.0 565.3 L978.5 566.4 L979.0 567.4 L979.5 568.4 L980.0 569.5 L980.5 570.5 L981.0 571.5 L981.4 572.5 L981.9 573.6 L982.4 574.6 L982.9 575.6 L983.4 576.6 L983.9 577.7 L984.4 578.7 L984.9 579.7 L985.3 580.7 L985.8 581.7 L986.3 582.7 L986.8 583.8 L987.2 584.8 L987.7 585.8 L988.2 586.8 L988.6 587.8 L989.1 588.8 L989.5 589.8 L990.0 590.8 L990.5 591.8 L990.9 592.8 L991.3 593.8 L991.8 594.7 L992.2 595.7 L992.6 596.7 L993.1 597.7 L993.5 598.7 L993.9 599.7 L994.3 600.6 L994.7 601.6 L995.1 602.6 L995.5 603.6 L995.9 604.5 L996.3 605.5 L996.7 606.5 L997.1 607.4 L997.5 608.4 L997.9 609.4 L998.2 610.3 L998.6 611.3 L998.9 612.2 L999.3 613.2 L999.6 614.1 L1000.0 615.1 L1000.3 616.0 L1000.6 617.0 L1001.0 617.9 L1001.3 618.9 L1001.6 619.8 L1001.9 620.8 L1002.2 621.7 L1002.5 622.6 L1002.8 623.6 L1003.0 624.5 L1003.3 625.4 L1003.6 626.4 L1003.8 627.3 L1004.1 628.2 L1004.3 629.2 L1004.6 630.1 L1004.8 631.0 L1005.1 632.0 L1005.3 632.9 L1005.5 633.8 L1005.7 634.7 L1005.9 635.6 L1006.1 636.6 L1006.3 637.5 L1006.5 638.4 L1006.7 639.3 L1006.8 640.2 L1007.0 641.2 L1007.2 642.1 L1007.3 643.0 L1007.5 643.9 L1007.6 644.8 L1007.7 645.7 L1007.9 646.7 L1008.0 647.6 L1008.1 648.5 L1008.2 649.4 L1008.3 650.3 L1008.4 651.2 L1008.5 652.1 L1008.5 653.0 L1008.6 654.0 L1008.7 654.9 L1008.7 655.8 L1008.8 656.7 L1008.8 657.6 L1008.9 658.5 L1008.9 659.4 L1008.9 660.3 L1008.9 661.2 L1008.9 662.1 L1008.9 663.0 L1008.9 664.0 L1008.9 664.9 L1008.9 665.8 L1008.9 666.7 L1008.8 667.6 L1008.8 668.5 L1008.8 669.4 L1008.7 670.3 L1008.6 671.2 L1008.6 672.1 L1008.5 673.0 L1008.4 673.9 L1008.3 674.8 L1008.2 675.7 L1008.1 676.6 L1008.0 677.5 L1007.9 678.4 L1007.8 679.3 L1007.6 680.2 L1007.5 681.1 L1007.3 682.0 L1007.2 682.9 L1007.0 683.8 L1006.9 684.7 L1006.7 685.6 L1006.5 686.5 L1006.3 687.3 L1006.1 688.2 L1005.9 689.1 L1005.7 690.0 L1005.5 690.9 L1005.3 691.8 L1005.0 692.6 L1004.8 693.5 L1004.6 694.4 L1004.3 695.3 L1004.1 696.1 L1003.8 697.0 L1003.5 697.9 L1003.2 698.7 L1003.0 699.6 L1002.7 700.5 L1002.4 701.3 L1002.1 702.2 L1001.7 703.0 L1001.4 703.9 L1001.1 704.7 L1000.8 705.5 L1000.4 706.4 L1000.1 707.2 L999.7 708.1 L999.4 708.9 L999.0 709.7 L998.6 710.5 L998.3 711.3 L997.9 712.2 L997.5 713.0 L997.1 713.8 L996.7 714.6 L996.3 715.4 L995.9 716.2 L995.4 717.0 L995.0 717.7 L994.6 718.5 L994.1 719.3 L993.7 720.1 L993.2 720.8 L992.8 721.6 L992.3 722.3 L991.8 723.1 L991.4 723.8 L990.9 724.6 L990.4 725.3 L989.9 726.1 L989.4 726.8 L988.9 727.5 L988.4 728.2 L987.9 728.9 L987.4 729.7 L986.8 730.4 L986.3 731.1 L985.8 731.7 L985.2 732.4 L984.7 733.1 L984.1 733.8 L983.6 734.5 L983.0 735.1 L982.4 735.8 L981.8 736.4 L981.3 737.1 L980.7 737.7 L980.1 738.4 L979.5 739.0 L978.9 739.6 L978.3 740.3 L977.6 740.9 L977.0 741.5 L976.4 742.1 L975.8 742.7 L975.1 743.3 L974.5 743.9 L973.8 744.5 L973.2 745.1 L972.5 745.7 L971.9 746.2 L971.2 746.8 L970.5 747.4 L969.8 747.9 L969.1 748.5 L968.4 749.0 L967.7 749.6 L967.0 750.1 L966.3 750.6 L965.6 751.2 L964.9 751.7 L964.1 752.2 L963.4 752.7 L962.7 753.2 L961.9 753.8 L961.1 754.3 L960.4 754.8 L959.6 755.2 L958.8 755.7 L958.0 756.2 L957.3 756.7 L956.5 757.2 L955.6 757.7 L954.8 758.1 L954.0 758.6 L953.2 759.0 L952.4 759.5 L951.5 759.9 L950.7 760.4 L949.8 760.8 L949.0 761.3 L948.1 761.7 L947.2 762.1 L946.3 762.6 L945.4 763.0 L944.6 763.4 L943.6 763.8 L942.7 764.2 L941.8 764.6 L940.9 765.0 L940.0 765.4 L939.0 765.8 L938.1 766.2 L937.1 766.6 L936.2 767.0 L935.2 767.3 L934.2 767.7 L933.2 768.1 L932.2 768.4 L931.2 768.8 L930.2 769.2 L929.2 769.5 L928.2 769.9 L927.2 770.2 L926.2 770.6 L925.1 770.9 L924.1 771.2 L923.0 771.6 L922.0 771.9 L920.9 772.2 L919.8 772.5 L918.7 772.8 L917.7 773.2 L916.6 773.5 L915.5 773.8 L914.4 774.1 L913.3 774.4 L912.1 774.7 L911.0 775.0 L909.9 775.2 L908.8 775.5 L907.6 775.8 L906.5 776.1 L905.3 776.4 L904.2 776.6 L903.0 776.9 L901.8 777.2 L900.7 777.4 L899.5 777.7 L898.3 778.0 L897.1 778.2 L895.9 778.5 L894.7 778.7 L893.5 779.0 L892.3 779.2 L891.1 779.5 L889.9 779.7 L888.7 779.9 L887.5 780.2 L886.2 780.4 L885.0 780.7 L883.8 780.9 L882.5 781.1 L881.3 781.3 L880.1 781.6 L878.8 781.8 L877.6 782.0 L876.3 782.2 L875.1 782.5 L873.8 782.7 L872.5 782.9 L871.3 783.1 L870.0 783.3 L868.8 783.5 L867.5 783.7 L866.2 784.0 L864.9 784.2 L863.7 784.4 L862.4 784.6 L861.1 784.8 L859.9 785.0 L858.6 785.2 L857.3 785.4 L856.0 785.6 L854.7 785.8 L853.5 786.0 L852.2 786.2 L850.9 786.4 L849.6 786.6 L848.3 786.8 L847.1 787.0 L845.8 787.2 L844.5 787.4 L843.2 787.6 L841.9 787.8 L840.7 788.0 L839.4 788.2 L838.1 788.4 L836.8 788.6 L835.6 788.8 L834.3 789.0 L833.0 789.2 L831.8 789.4 L830.5 789.6 L829.2 789.8 L828.0 790.0 L826.7 790.2 L825.5 790.4 L824.2 790.6 L823.0 790.8 L821.7 790.9 L820.5 791.1 L819.3 791.3 L818.0 791.5 L816.8 791.7 L815.6 791.9 L814.3 792.1 L813.1 792.3 L811.9 792.4 L810.7 792.6 L809.5 792.8 L808.2 793.0 L807.0 793.2 L805.8 793.3 L804.6 793.5 L803.4 793.7 L802.3 793.9 L801.1 794.0 L799.9 794.2 L798.7 794.4 L797.5 794.5 L796.4 794.7 L795.2 794.9 L794.0 795.0 L792.9 795.2 L791.7 795.3 L790.6 795.5 L789.4 795.7 L788.3 795.8 L787.2 796.0 L786.0 796.1 L784.9 796.3 L783.8 796.4 L782.7 796.5 L781.5 796.7 L780.4 796.8 L779.3 796.9 L778.2 797.1 L777.1 797.2 L776.0 797.3 L774.9 797.5 L773.8 797.6 L772.7 797.7 L771.7 797.8 L770.6 797.9 L769.5 798.1 L768.4 798.2 L767.3 798.3 L766.3 798.4 L765.2 798.5 L764.1 798.6 L763.1 798.7 L762.0 798.8 L761.0 798.9 L759.9 798.9 L758.9 799.0 L757.8 799.1 L756.8 799.2 L755.7 799.3 L754.7 799.3 L753.6 799.4 L752.6 799.5 L751.6 799.5 L750.5 799.6 L749.5 799.7 L748.5 799.7 L747.4 799.8 L746.4 799.8 L745.4 799.9 L744.3 799.9 L743.3 800.0 L742.3 800.0 L741.3 800.0 L740.2 800.1 L739.2 800.1 L738.2 800.1 L737.1 800.2 L736.1 800.2 L735.1 800.2 L734.1 800.2 L733.0 800.2 L732.0 800.2 L731.0 800.2 L729.9 800.2 M525.6 490.2 L526.1 489.5 L526.6 488.8 L527.1 488.0 L527.6 487.3 L528.0 486.6 L528.5 485.9 L529.0 485.2 L529.5 484.5 L530.0 483.8 L530.5 483.1 L531.0 482.4 L531.5 481.7 L532.1 481.0 L532.6 480.3 L533.1 479.6 L533.6 478.9 L534.2 478.2 L534.7 477.5 L535.2 476.8 L535.8 476.1 L536.3 475.4 L536.9 474.7 L537.4 474.0 L538.0 473.3 L538.5 472.6 L539.1 471.9 L539.7 471.2 L540.3 470.5 L540.8 469.8 L541.4 469.1 L542.0 468.4 L542.6 467.7 L543.2 467.0 L543.8 466.2 L544.4 465.5 L545.0 464.8 L545.7 464.1 L546.3 463.3 L546.9 462.6 L547.6 461.9 L548.2 461.2 L548.9 460.4 L549.5 459.7 L550.2 458.9 L550.8 458.2 L551.5 457.4 L552.2 456.7 L552.9 455.9 L553.6 455.2 L554.2 454.4 L554.9 453.7 L555.6 452.9 L556.3 452.1 L557.1 451.4 L557.8 450.6 L558.5 449.8 L559.2 449.0 L559.9 448.2 L560.7 447.4 L561.4 446.7 L562.2 445.9 L562.9 445.1 L563.7 444.3 L564.4 443.4 L565.2 442.6 L565.9 441.8 L566.7 441.0 L567.5 440.2 L568.2 439.4 L569.0 438.5 L569.8 437.7 L570.6 436.9 L571.4 436.1 L572.2 435.2 L572.9 434.4 L573.7 433.5 L574.5 432.7 L575.3 431.8 L576.1 431.0 L576.9 430.1 L577.7 429.3 L578.5 428.4 L579.4 427.6 L580.2 426.7 L581.0 425.9 L581.8 425.0 L582.6 424.1 L583.4 423.3 L584.2 422.4 L585.0 421.5 L585.9 420.7 L586.7 419.8 L587.5 418.9 L588.3 418.1 L589.1 417.2 L589.9 416.3 L590.8 415.5 L591.6 414.6 L592.4 413.7 L593.2 412.9 L594.0 412.0 L594.9 411.1 L595.7 410.3 L596.5 409.4 L597.3 408.5 L598.1 407.7 L598.9 406.8 L599.7 406.0 L600.6 405.1 L601.4 404.3 L602.2 403.4 L603.0 402.6 L603.8 401.7 L604.6 400.9 L605.4 400.0 L606.2 399.2 L607.0 398.4 L607.8 397.5 L608.6 396.7 L609.4 395.9 L610.2 395.1 L611.0 394.3 L611.8 393.5 L612.6 392.6 L613.4 391.8 L614.2 391.0 L615.0 390.3 L615.8 389.5 L616.6 388.7 L617.4 387.9 L618.2 387.1 L618.9 386.4 L619.7 385.6 L620.5 384.8 L621.3 384.1 L622.1 383.3 L622.9 382.6 L623.6 381.9 L624.4 381.1 L625.2 380.4 L626.0 379.7 L626.8 379.0 L627.5 378.3 L628.3 377.6 L629.1 376.9 L629.9 376.2 L630.6 375.5 L631.4 374.8 L632.2 374.2 L633.0 373.5 L633.7 372.8 L634.5 372.2 L635.3 371.5 L636.1 370.9 L636.8 370.3 L637.6 369.6 L638.4 369.0 L639.1 368.4 L639.9 367.8 L640.7 367.2 L641.4 366.6 L642.2 366.0 L643.0 365.5 L643.7 364.9 L644.5 364.3 L645.3 363.8 L646.0 363.2 L646.8 362.7 L647.6 362.1 L648.3 361.6 L649.1 361.1 L649.9 360.6 L650.6 360.1 L651.4 359.6 L652.2 359.1 L652.9 358.6 L653.7 358.1 L654.5 357.6 L655.2 357.1 L656.0 356.7 L656.8 356.2 L657.6 355.8 L658.3 355.3 L659.1 354.9 L659.9 354.4 L660.6 354.0 L661.4 353.6 L662.2 353.2 L663.0 352.8 L663.7 352.4 L664.5 352.0 L665.3 351.6 L666.1 351.2 L666.9 350.8 L667.7 350.4 L668.4 350.1 L669.2 349.7 L670.0 349.4 L670.8 349.0 L671.6 348.7 L672.4 348.3 L673.2 348.0 L674.0 347.7 L674.8 347.4 L675.6 347.0 L676.4 346.7 L677.2 346.4 L678.0 346.1 L678.8 345.8 L679.6 345.5 L680.5 345.3 L681.3 345.0 L682.1 344.7 L682.9 344.4 L683.7 344.2 L684.6 343.9 L685.4 343.7 L686.2 343.4 L687.1 343.2 L687.9 343.0 L688.8 342.7 L689.6 342.5 L690.4 342.3 L691.3 342.1 L692.1 341.9 L693.0 341.7 L693.9 341.5 L694.7 341.3 L695.6 341.1 L696.4 340.9 L697.3 340.7 L698.2 340.6 L699.1 340.4 L699.9 340.2 L700.8 340.1 L701.7 339.9 L702.6 339.8 L703.4 339.7 L704.3 339.5 L705.2 339.4 L706.1 339.3 L707.0 339.2 L707.9 339.1 L708.8 339.0 L709.7 338.9 L710.6 338.8 L711.5 338.7 L712.4 338.6 L713.3 338.5 L714.2 338.5 L715.1 338.4 L716.0 338.3 L716.9 338.3 L717.8 338.2 L718.7 338.2 L719.6 338.2 L720.5 338.1 L721.5 338.1 L722.4 338.1 L723.3 338.1 L724.2 338.1 L725.1 338.1 L726.0 338.1 L726.9 338.1 L727.8 338.1 L728.7 338.1 L729.6 338.1 L730.5 338.2 L731.4 338.2 L732.3 338.3 L733.2 338.3 L734.1 338.4 L735.0 338.4 L735.9 338.5 L736.8 338.6 L737.7 338.7 L738.6 338.7 L739.5 338.8 L740.4 338.9 L741.3 339.0 L742.2 339.1 L743.0 339.2 L743.9 339.4 L744.8 339.5 L745.7 339.6 L746.5 339.8 L747.4 339.9 L748.3 340.0 L749.1 340.2 L750.0 340.3 L750.9 340.5 L751.7 340.7 L752.6 340.8 L753.4 341.0 L754.3 341.2 L755.1 341.4 L755.9 341.6 L756.8 341.8 L757.6 342.0 L758.4 342.2 L759.3 342.4 L760.1 342.6 L760.9 342.9 L761.7 343.1 L762.6 343.3 L763.4 343.6 L764.2 343.8 L765.0 344.1 L765.8 344.3 L766.6 344.6 L767.4 344.9 L768.2 345.2 L769.0 345.4 L769.8 345.7 L770.6 346.0 L771.3 346.3 L772.1 346.6 L772.9 346.9 L773.7 347.2 L774.5 347.6 L775.2 347.9 L776.0 348.2 L776.8 348.5 L777.6 348.9 L778.3 349.2 L779.1 349.6 L779.9 350.0 L780.6 350.3 L781.4 350.7 L782.2 351.1 L782.9 351.5 L783.7 351.8 L784.4 352.2 L785.2 352.6 L785.9 353.1 L786.7 353.5 L787.4 353.9 L788.2 354.3 L789.0 354.8 L789.7 355.2 L790.5 355.6 L791.2 356.1 L792.0 356.6 L792.7 357.0 L793.5 357.5 L794.2 358.0 L795.0 358.5 L795.7 359.0 L796.5 359.5 L797.2 360.0 L798.0 360.5 L798.7 361.0 L799.5 361.5 L800.2 362.1 L801.0 362.6 L801.7 363.2 L802.5 363.7 L803.2 364.3 L804.0 364.9 L804.7 365.5 L805.5 366.1 L806.2 366.6 L807.0 367.2 L807.8 367.9 L808.5 368.5 L809.3 369.1 L810.0 369.7 L810.8 370.4 L811.6 371.0 L812.3 371.7 L813.1 372.3 L813.8 373.0 L814.6 373.7 L815.4 374.4 L816.1 375.0 L816.9 375.7 L817.7 376.4 L818.5 377.2 L819.2 377.9 L820.0 378.6 L820.8 379.3 L821.6 380.1 L822.3 380.8 L823.1 381.5 L823.9 382.3 L824.7 383.1 L825.5 383.8 L826.3 384.6 L827.1 385.4 L827.8 386.2 L828.6 387.0 L829.4 387.8 L830.2 388.6 L831.0 389.4 L831.8 390.2 L832.6 391.0 L833.4 391.8 L834.2 392.6 L835.1 393.5 L835.9 394.3 L836.7 395.2 L837.5 396.0 L838.3 396.9 L839.1 397.7 L840.0 398.6 L840.8 399.4 L841.6 400.3 L842.4 401.2 L843.3 402.0 L844.1 402.9 L844.9 403.8 L845.8 404.7 L846.6 405.5 L847.4 406.4 L848.3 407.3 L849.1 408.2 L850.0 409.1 L850.8 410.0 L851.7 410.9 L852.5 411.8 L853.4 412.7 L854.2 413.6 L855.1 414.5 L856.0 415.3 L856.8 416.2 L857.7 417.1 L858.5 418.0 L859.4 418.9 L860.3 419.8 L861.1 420.7 L862.0 421.6 L862.8 422.5 L863.7 423.4 L864.6 424.3 L865.4 425.2 L866.3 426.0 L867.2 426.9 L868.0 427.8 L868.9 428.7 L869.7 429.5 L870.6 430.4 L871.4 431.3 L872.3 432.2 L873.1 433.0 L874.0 433.9 L874.8 434.7 L875.7 435.6 L876.5 436.4 L877.4 437.3 L878.2 438.1 L879.0 438.9 L879.8 439.8 L880.7 440.6 L881.5 441.4 L882.3 442.2 L883.1 443.0 L883.9 443.8 L884.7 444.6 L885.5 445.4 L886.3 446.2 L887.1 447.0 L887.9 447.8 L888.6 448.6 L889.4 449.4 L890.2 450.1 L890.9 450.9 L891.7 451.7 L892.4 452.4 L893.1 453.2 L893.9 453.9 L894.6 454.6 L895.3 455.4 L896.0 456.1 L896.7 456.8 L897.4 457.6 L898.1 458.3 L898.8 459.0 L899.5 459.7 L900.2 460.4 L900.8 461.1 L901.5 461.8 L902.1 462.5 L902.8 463.2 L903.4 463.9 L904.0 464.6 L904.7 465.3 L905.3 465.9 L905.9 466.6 L906.5 467.3 L907.1 468.0 L907.7 468.6 L908.2 469.3 L908.8 469.9 L909.4 470.6 L910.0 471.3 L910.5 471.9 L911.1 472.6 L911.6 473.2 L912.2 473.9 L912.7 474.5 L913.2 475.2 L913.7 475.8 L914.3 476.5 L914.8 477.1 L915.3 477.7 L915.8 478.4 L916.3 479.0 L916.8 479.7 L917.3 480.3 L917.8 481.0 L918.2 481.6 L918.7 482.3 L919.2 482.9 L919.7 483.5 L920.1 484.2 L920.6 484.8 L921.0 485.5 L921.5 486.2 L922.0 486.8 L922.4 487.5 L922.8 488.1 L923.3 488.8 L923.7 489.5 L924.2 490.1 L924.6 490.8 L925.0 491.5 L925.5 492.2 L925.9 492.8 L926.3 493.5 L926.8 494.2 L927.2 494.9 L927.6 495.6 L928.0 496.3 L928.5 497.0 L928.9 497.8 L929.3 498.5 L929.7 499.2 L930.1 499.9 L930.6 500.7 L931.0 501.4 L931.4 502.2 L931.8 502.9 L932.2 503.7 L932.6 504.4 L933.0 505.2 L933.5 506.0 L933.9 506.8 L934.3 507.6 L934.7 508.4 L935.1 509.2 L935.5 510.0 L935.9 510.8 L936.4 511.6 L936.8 512.4 L937.2 513.3 L937.6 514.1 L938.0 515.0 L938.5 515.8 L938.9 516.7 L939.3 517.6 L939.7 518.4 L940.2 519.3 L940.6 520.2 L941.0 521.1 L941.4 522.0 L941.9 522.9 L942.3 523.8 L942.7 524.8 L943.2 525.7 L943.6 526.6 L944.1 527.6 L944.5 528.5 L944.9 529.5 L945.4 530.4 L945.8 531.4 L946.3 532.3 L946.7 533.3 L947.2 534.3 L947.6 535.3 L948.1 536.3 L948.6 537.3 L949.0 538.3 L949.5 539.3 L950.0 540.3 L950.4 541.3 L950.9 542.3 L951.4 543.3 L951.8 544.3 L952.3 545.3 L952.8 546.4 L953.3 547.4 L953.7 548.4 L954.2 549.4 L954.7 550.5 L955.2 551.5 L955.7 552.5 L956.2 553.6 L956.7 554.6 L957.2 555.7 L957.7 556.7 L958.1 557.7 L958.6 558.8 L959.1 559.8 L959.6 560.9 L960.1 561.9 L960.6 563.0 L961.1 564.0 L961.6 565.1 L962.1 566.1 L962.6 567.1 L963.1 568.2 L963.6 569.2 L964.1 570.2 L964.6 571.3 L965.1 572.3 L965.6 573.4 L966.1 574.4 L966.6 575.4 L967.1 576.4 L967.6 577.5 L968.1 578.5 L968.6 579.5 L969.0 580.5 L969.5 581.5 L970.0 582.6 L970.5 583.6 L971.0 584.6 L971.4 585.6 L971.9 586.6 L972.4 587.6 L972.8 588.6 L973.3 589.6 L973.8 590.6 L974.2 591.5 L974.7 592.5 L975.1 593.5 L975.6 594.5 L976.0 595.5 L976.5 596.4 L976.9 597.4 L977.3 598.4 L977.8 599.3 L978.2 600.3 L978.6 601.3 L979.0 602.2 L979.4 603.2 L979.8 604.1 L980.2 605.0 L980.6 606.0 L981.0 606.9 L981.4 607.9 L981.8 608.8 L982.2 609.7 L982.5 610.6 L982.9 611.6 L983.3 612.5 L983.6 613.4 L984.0 614.3 L984.3 615.2 L984.6 616.1 L985.0 617.0 L985.3 617.9 L985.6 618.8 L985.9 619.7 L986.2 620.6 L986.5 621.5 L986.8 622.4 L987.1 623.3 L987.4 624.2 L987.7 625.1 L988.0 625.9 L988.2 626.8 L988.5 627.7 L988.8 628.6 L989.0 629.4 L989.3 630.3 L989.5 631.2 L989.7 632.0 L989.9 632.9 L990.2 633.8 L990.4 634.6 L990.6 635.5 L990.8 636.3 L991.0 637.2 L991.2 638.0 L991.4 638.9 L991.5 639.7 L991.7 640.6 L991.9 641.4 L992.0 642.3 L992.2 643.1 L992.3 643.9 L992.5 644.8 L992.6 645.6 L992.7 646.5 L992.8 647.3 L993.0 648.1 L993.1 649.0 L993.2 649.8 L993.3 650.6 L993.3 651.5 L993.4 652.3 L993.5 653.1 L993.6 653.9 L993.6 654.8 L993.7 655.6 L993.8 656.4 L993.8 657.3 L993.8 658.1 L993.9 658.9 L993.9 659.7 L993.9 660.6 L993.9 661.4 L993.9 662.2 L993.9 663.0 L993.9 663.8 L993.9 664.7 L993.9 665.5 L993.9 666.3 L993.9 667.1 L993.8 667.9 L993.8 668.8 L993.7 669.6 L993.7 670.4 L993.6 671.2 L993.5 672.0 L993.5 672.8 L993.4 673.7 L993.3 674.5 L993.2 675.3 L993.1 676.1 L993.0 676.9 L992.9 677.7 L992.8 678.5 L992.6 679.3 L992.5 680.2 L992.4 681.0 L992.2 681.8 L992.1 682.6 L991.9 683.4 L991.7 684.2 L991.6 685.0 L991.4 685.8 L991.2 686.6 L991.0 687.4 L990.8 688.2 L990.6 689.0 L990.4 689.8 L990.2 690.6 L990.0 691.3 L989.8 692.1 L989.5 692.9 L989.3 693.7 L989.0 694.5 L988.8 695.2 L988.5 696.0 L988.3 696.8 L988.0 697.6 L987.7 698.3 L987.5 699.1 L987.2 699.8 L986.9 700.6 L986.6 701.4 L986.3 702.1 L986.0 702.9 L985.7 703.6 L985.3 704.3 L985.0 705.1 L984.7 705.8 L984.3 706.5 L984.0 707.3 L983.6 708.0 L983.3 708.7 L982.9 709.4 L982.6 710.1 L982.2 710.8 L981.8 711.5 L981.4 712.2 L981.1 712.9 L980.7 713.6 L980.3 714.3 L979.9 715.0 L979.5 715.6 L979.1 716.3 L978.7 717.0 L978.2 717.6 L977.8 718.3 L977.4 718.9 L977.0 719.6 L976.5 720.2 L976.1 720.8 L975.6 721.5 L975.2 722.1 L974.7 722.7 L974.3 723.3 L973.8 723.9 L973.3 724.5 L972.9 725.1 L972.4 725.7 L971.9 726.3 L971.4 726.9 L970.9 727.5 L970.4 728.0 L969.9 728.6 L969.4 729.2 L968.9 729.7 L968.4 730.3 L967.9 730.8 L967.3 731.4 L966.8 731.9 L966.3 732.5 L965.8 733.0 L965.2 733.5 L964.7 734.0 L964.1 734.6 L963.6 735.1 L963.0 735.6 L962.4 736.1 L961.9 736.6 L961.3 737.1 L960.7 737.6 L960.1 738.0 L959.5 738.5 L958.9 739.0 L958.3 739.5 L957.7 740.0 L957.1 740.4 L956.5 740.9 L955.9 741.3 L955.3 741.8 L954.6 742.2 L954.0 742.7 L953.3 743.1 L952.7 743.6 L952.0 744.0 L951.4 744.4 L950.7 744.9 L950.0 745.3 L949.3 745.7 L948.7 746.1 L948.0 746.6 L947.3 747.0 L946.5 747.4 L945.8 747.8 L945.1 748.2 L944.4 748.6 L943.6 749.0 L942.9 749.4 L942.1 749.8 L941.4 750.1 L940.6 750.5 L939.8 750.9 L939.1 751.3 L938.3 751.7 L937.5 752.0 L936.7 752.4 L935.8 752.8 L935.0 753.1 L934.2 753.5 L933.4 753.8 L932.5 754.2 L931.7 754.5 L930.8 754.9 L929.9 755.2 L929.1 755.6 L928.2 755.9 L927.3 756.2 L926.4 756.6 L925.5 756.9 L924.6 757.2 L923.6 757.6 L922.7 757.9 L921.8 758.2 L920.8 758.5 L919.9 758.8 L918.9 759.1 L917.9 759.4 L916.9 759.7 L915.9 760.0 L915.0 760.3 L913.9 760.6 L912.9 760.9 L911.9 761.2 L910.9 761.5 L909.9 761.8 L908.8 762.0 L907.8 762.3 L906.7 762.6 L905.6 762.9 L904.6 763.1 L903.5 763.4 L902.4 763.7 L901.3 763.9 L900.2 764.2 L899.1 764.5 L898.0 764.7 L896.9 765.0 L895.8 765.2 L894.6 765.5 L893.5 765.7 L892.3 765.9 L891.2 766.2 L890.0 766.4 L888.9 766.7 L887.7 766.9 L886.5 767.1 L885.4 767.4 L884.2 767.6 L883.0 767.8 L881.8 768.1 L880.6 768.3 L879.4 768.5 L878.2 768.7 L877.0 768.9 L875.8 769.2 L874.5 769.4 L873.3 769.6 L872.1 769.8 L870.8 770.0 L869.6 770.2 L868.4 770.5 L867.1 770.7 L865.9 770.9 L864.6 771.1 L863.4 771.3 L862.1 771.5 L860.9 771.7 L859.6 771.9 L858.3 772.1 L857.1 772.3 L855.8 772.5 L854.5 772.7 L853.3 772.9 L852.0 773.1 L850.7 773.3 L849.5 773.5 L848.2 773.7 L846.9 773.9 L845.6 774.1 L844.4 774.3 L843.1 774.5 L841.8 774.7 L840.5 774.9 L839.3 775.1 L838.0 775.3 L836.7 775.5 L835.5 775.7 L834.2 775.9 L832.9 776.1 L831.7 776.3 L830.4 776.5 L829.1 776.7 L827.9 776.9 L826.6 777.1 L825.4 777.3 L824.1 777.5 L822.8 777.7 L821.6 777.9 L820.4 778.1 L819.1 778.2 L817.9 778.4 L816.6 778.6 L815.4 778.8 L814.2 779.0 L813.0 779.2 L811.7 779.4 L810.5 779.5 L809.3 779.7 L808.1 779.9 L806.9 780.1 L805.7 780.3 L804.5 780.4 L803.3 780.6 L802.1 780.8 L800.9 781.0 L799.8 781.1 L798.6 781.3 L797.4 781.5 L796.3 781.6 L795.1 781.8 L793.9 782.0 L792.8 782.1 L791.7 782.3 L790.5 782.5 L789.4 782.6 L788.3 782.8 L787.1 782.9 L786.0 783.1 L784.9 783.2 L783.8 783.4 L782.7 783.5 L781.6 783.6 L780.5 783.8 L779.4 783.9 L778.3 784.0 L777.2 784.2 L776.2 784.3 L775.1 784.4 L774.0 784.6 L773.0 784.7 L771.9 784.8 L770.8 784.9 L769.8 785.0 L768.7 785.1 L767.7 785.2 L766.7 785.3 L765.6 785.5 L764.6 785.6 L763.6 785.7 L762.6 785.7 L761.5 785.8 L760.5 785.9 L759.5 786.0 L758.5 786.1 L757.5 786.2 L756.5 786.3 L755.5 786.3 L754.5 786.4 L753.5 786.5 L752.5 786.5 L751.5 786.6 L750.5 786.7 L749.5 786.7 L748.5 786.8 L747.5 786.8 L746.6 786.9 L745.6 786.9 L744.6 787.0 L743.6 787.0 L742.6 787.1 L741.6 787.1 L740.7 787.1 L739.7 787.2 L738.7 787.2 L737.7 787.2 L736.7 787.3 L735.8 787.3 L734.8 787.3 L733.8 787.3 L732.8 787.3 L731.9 787.3 L730.9 787.3 L729.9 787.3 M531.3 493.0 L531.7 492.3 L532.2 491.6 L532.7 490.9 L533.2 490.2 L533.6 489.5 L534.1 488.8 L534.6 488.1 L535.1 487.4 L535.6 486.7 L536.1 486.1 L536.6 485.4 L537.0 484.7 L537.5 484.0 L538.1 483.3 L538.6 482.6 L539.1 482.0 L539.6 481.3 L540.1 480.6 L540.6 479.9 L541.2 479.2 L541.7 478.6 L542.2 477.9 L542.8 477.2 L543.3 476.5 L543.9 475.8 L544.4 475.1 L545.0 474.4 L545.6 473.7 L546.1 473.0 L546.7 472.3 L547.3 471.6 L547.9 470.9 L548.5 470.2 L549.1 469.5 L549.7 468.8 L550.3 468.1 L550.9 467.4 L551.5 466.7 L552.1 466.0 L552.8 465.3 L553.4 464.5 L554.0 463.8 L554.7 463.1 L555.3 462.3 L556.0 461.6 L556.7 460.9 L557.3 460.1 L558.0 459.4 L558.7 458.6 L559.4 457.9 L560.0 457.1 L560.7 456.4 L561.4 455.6 L562.1 454.8 L562.9 454.1 L563.6 453.3 L564.3 452.5 L565.0 451.7 L565.7 450.9 L566.5 450.1 L567.2 449.4 L568.0 448.6 L568.7 447.8 L569.5 447.0 L570.2 446.1 L571.0 445.3 L571.7 444.5 L572.5 443.7 L573.3 442.9 L574.1 442.1 L574.8 441.2 L575.6 440.4 L576.4 439.6 L577.2 438.7 L578.0 437.9 L578.8 437.1 L579.6 436.2 L580.4 435.4 L581.2 434.5 L582.0 433.7 L582.8 432.8 L583.6 432.0 L584.4 431.1 L585.2 430.2 L586.0 429.4 L586.8 428.5 L587.6 427.7 L588.5 426.8 L589.3 425.9 L590.1 425.1 L590.9 424.2 L591.7 423.3 L592.5 422.5 L593.4 421.6 L594.2 420.7 L595.0 419.9 L595.8 419.0 L596.6 418.1 L597.5 417.3 L598.3 416.4 L599.1 415.5 L599.9 414.7 L600.7 413.8 L601.5 412.9 L602.3 412.1 L603.2 411.2 L604.0 410.4 L604.8 409.5 L605.6 408.7 L606.4 407.8 L607.2 407.0 L608.0 406.1 L608.8 405.3 L609.6 404.4 L610.4 403.6 L611.2 402.8 L612.0 401.9 L612.8 401.1 L613.6 400.3 L614.4 399.5 L615.2 398.7 L616.0 397.9 L616.8 397.1 L617.6 396.3 L618.3 395.5 L619.1 394.7 L619.9 393.9 L620.7 393.1 L621.5 392.4 L622.3 391.6 L623.0 390.8 L623.8 390.1 L624.6 389.3 L625.4 388.6 L626.1 387.8 L626.9 387.1 L627.7 386.4 L628.4 385.6 L629.2 384.9 L630.0 384.2 L630.7 383.5 L631.5 382.8 L632.3 382.1 L633.0 381.4 L633.8 380.8 L634.5 380.1 L635.3 379.4 L636.0 378.8 L636.8 378.1 L637.5 377.5 L638.3 376.8 L639.0 376.2 L639.8 375.6 L640.5 374.9 L641.3 374.3 L642.0 373.7 L642.8 373.1 L643.5 372.5 L644.3 372.0 L645.0 371.4 L645.8 370.8 L646.5 370.2 L647.2 369.7 L648.0 369.1 L648.7 368.6 L649.4 368.1 L650.2 367.5 L650.9 367.0 L651.7 366.5 L652.4 366.0 L653.1 365.5 L653.9 365.0 L654.6 364.5 L655.3 364.0 L656.1 363.5 L656.8 363.1 L657.5 362.6 L658.3 362.2 L659.0 361.7 L659.7 361.3 L660.5 360.8 L661.2 360.4 L661.9 360.0 L662.7 359.6 L663.4 359.1 L664.1 358.7 L664.9 358.3 L665.6 357.9 L666.3 357.6 L667.1 357.2 L667.8 356.8 L668.6 356.4 L669.3 356.1 L670.0 355.7 L670.8 355.4 L671.5 355.0 L672.3 354.7 L673.0 354.3 L673.8 354.0 L674.5 353.7 L675.3 353.4 L676.0 353.0 L676.8 352.7 L677.5 352.4 L678.3 352.1 L679.0 351.8 L679.8 351.5 L680.6 351.3 L681.3 351.0 L682.1 350.7 L682.9 350.4 L683.6 350.2 L684.4 349.9 L685.2 349.7 L686.0 349.4 L686.7 349.2 L687.5 349.0 L688.3 348.7 L689.1 348.5 L689.9 348.3 L690.7 348.1 L691.5 347.8 L692.3 347.6 L693.1 347.4 L693.9 347.2 L694.7 347.1 L695.5 346.9 L696.3 346.7 L697.1 346.5 L698.0 346.3 L698.8 346.2 L699.6 346.0 L700.4 345.9 L701.2 345.7 L702.1 345.6 L702.9 345.4 L703.7 345.3 L704.6 345.2 L705.4 345.0 L706.3 344.9 L707.1 344.8 L707.9 344.7 L708.8 344.6 L709.6 344.5 L710.5 344.4 L711.3 344.3 L712.2 344.2 L713.0 344.2 L713.9 344.1 L714.7 344.0 L715.6 344.0 L716.5 343.9 L717.3 343.9 L718.2 343.8 L719.0 343.8 L719.9 343.7 L720.8 343.7 L721.6 343.7 L722.5 343.7 L723.3 343.7 L724.2 343.7 L725.1 343.7 L725.9 343.7 L726.8 343.7 L727.6 343.7 L728.5 343.7 L729.4 343.7 L730.2 343.8 L731.1 343.8 L731.9 343.8 L732.8 343.9 L733.6 343.9 L734.5 344.0 L735.3 344.1 L736.2 344.1 L737.0 344.2 L737.9 344.3 L738.7 344.4 L739.6 344.5 L740.4 344.6 L741.2 344.7 L742.1 344.8 L742.9 344.9 L743.7 345.0 L744.5 345.1 L745.4 345.2 L746.2 345.4 L747.0 345.5 L747.8 345.7 L748.6 345.8 L749.4 346.0 L750.2 346.1 L751.0 346.3 L751.8 346.5 L752.6 346.6 L753.4 346.8 L754.2 347.0 L755.0 347.2 L755.8 347.4 L756.6 347.6 L757.4 347.8 L758.1 348.0 L758.9 348.2 L759.7 348.4 L760.4 348.6 L761.2 348.9 L762.0 349.1 L762.7 349.3 L763.5 349.6 L764.2 349.8 L765.0 350.1 L765.7 350.3 L766.5 350.6 L767.2 350.9 L768.0 351.1 L768.7 351.4 L769.4 351.7 L770.2 352.0 L770.9 352.3 L771.6 352.6 L772.4 352.9 L773.1 353.2 L773.8 353.5 L774.6 353.8 L775.3 354.2 L776.0 354.5 L776.7 354.8 L777.4 355.2 L778.2 355.5 L778.9 355.9 L779.6 356.3 L780.3 356.6 L781.0 357.0 L781.7 357.4 L782.5 357.8 L783.2 358.2 L783.9 358.6 L784.6 359.0 L785.3 359.4 L786.0 359.8 L786.7 360.2 L787.4 360.7 L788.2 361.1 L788.9 361.5 L789.6 362.0 L790.3 362.4 L791.0 362.9 L791.7 363.4 L792.5 363.9 L793.2 364.4 L793.9 364.8 L794.6 365.3 L795.3 365.9 L796.0 366.4 L796.8 366.9 L797.5 367.4 L798.2 368.0 L798.9 368.5 L799.7 369.1 L800.4 369.6 L801.1 370.2 L801.8 370.8 L802.6 371.3 L803.3 371.9 L804.0 372.5 L804.8 373.1 L805.5 373.7 L806.2 374.4 L807.0 375.0 L807.7 375.6 L808.5 376.3 L809.2 376.9 L810.0 377.6 L810.7 378.2 L811.4 378.9 L812.2 379.6 L813.0 380.3 L813.7 381.0 L814.5 381.7 L815.2 382.4 L816.0 383.1 L816.7 383.8 L817.5 384.5 L818.3 385.3 L819.0 386.0 L819.8 386.8 L820.6 387.5 L821.4 388.3 L822.1 389.0 L822.9 389.8 L823.7 390.6 L824.5 391.4 L825.3 392.2 L826.1 393.0 L826.9 393.8 L827.7 394.6 L828.5 395.4 L829.3 396.2 L830.1 397.1 L830.9 397.9 L831.7 398.7 L832.5 399.6 L833.3 400.4 L834.1 401.3 L834.9 402.1 L835.8 403.0 L836.6 403.8 L837.4 404.7 L838.2 405.6 L839.1 406.4 L839.9 407.3 L840.7 408.2 L841.6 409.1 L842.4 410.0 L843.3 410.9 L844.1 411.7 L845.0 412.6 L845.8 413.5 L846.7 414.4 L847.5 415.3 L848.4 416.2 L849.2 417.1 L850.1 418.0 L850.9 418.9 L851.8 419.8 L852.7 420.7 L853.5 421.6 L854.4 422.5 L855.3 423.4 L856.1 424.3 L857.0 425.2 L857.9 426.1 L858.7 427.0 L859.6 427.9 L860.4 428.7 L861.3 429.6 L862.2 430.5 L863.0 431.4 L863.9 432.3 L864.8 433.2 L865.6 434.0 L866.5 434.9 L867.3 435.8 L868.2 436.6 L869.0 437.5 L869.9 438.3 L870.7 439.2 L871.6 440.0 L872.4 440.9 L873.2 441.7 L874.1 442.6 L874.9 443.4 L875.7 444.2 L876.5 445.0 L877.4 445.9 L878.2 446.7 L879.0 447.5 L879.8 448.3 L880.6 449.1 L881.4 449.9 L882.1 450.7 L882.9 451.4 L883.7 452.2 L884.4 453.0 L885.2 453.7 L886.0 454.5 L886.7 455.3 L887.4 456.0 L888.2 456.8 L888.9 457.5 L889.6 458.2 L890.3 459.0 L891.0 459.7 L891.7 460.4 L892.4 461.1 L893.1 461.8 L893.8 462.5 L894.4 463.2 L895.1 463.9 L895.8 464.6 L896.4 465.3 L897.0 466.0 L897.7 466.7 L898.3 467.4 L898.9 468.0 L899.5 468.7 L900.1 469.4 L900.7 470.0 L901.3 470.7 L901.9 471.3 L902.5 472.0 L903.1 472.6 L903.6 473.3 L904.2 473.9 L904.7 474.6 L905.3 475.2 L905.8 475.9 L906.3 476.5 L906.9 477.1 L907.4 477.7 L907.9 478.4 L908.4 479.0 L908.9 479.6 L909.4 480.3 L909.9 480.9 L910.4 481.5 L910.9 482.1 L911.3 482.7 L911.8 483.4 L912.3 484.0 L912.8 484.6 L913.2 485.2 L913.7 485.9 L914.1 486.5 L914.6 487.1 L915.0 487.8 L915.5 488.4 L915.9 489.0 L916.4 489.7 L916.8 490.3 L917.2 490.9 L917.7 491.6 L918.1 492.2 L918.5 492.9 L918.9 493.5 L919.3 494.2 L919.8 494.8 L920.2 495.5 L920.6 496.2 L921.0 496.8 L921.4 497.5 L921.8 498.2 L922.3 498.9 L922.7 499.6 L923.1 500.3 L923.5 501.0 L923.9 501.7 L924.3 502.4 L924.7 503.1 L925.1 503.8 L925.5 504.6 L925.9 505.3 L926.3 506.0 L926.7 506.8 L927.1 507.5 L927.5 508.3 L928.0 509.1 L928.4 509.9 L928.8 510.6 L929.2 511.4 L929.6 512.2 L930.0 513.0 L930.4 513.8 L930.8 514.7 L931.2 515.5 L931.6 516.3 L932.1 517.2 L932.5 518.0 L932.9 518.9 L933.3 519.7 L933.7 520.6 L934.2 521.5 L934.6 522.3 L935.0 523.2 L935.4 524.1 L935.9 525.0 L936.3 525.9 L936.7 526.9 L937.2 527.8 L937.6 528.7 L938.0 529.6 L938.5 530.6 L938.9 531.5 L939.4 532.5 L939.8 533.5 L940.2 534.4 L940.7 535.4 L941.2 536.4 L941.6 537.3 L942.1 538.3 L942.5 539.3 L943.0 540.3 L943.4 541.3 L943.9 542.3 L944.4 543.3 L944.9 544.3 L945.3 545.4 L945.8 546.4 L946.3 547.4 L946.8 548.4 L947.2 549.5 L947.7 550.5 L948.2 551.5 L948.7 552.6 L949.2 553.6 L949.7 554.6 L950.2 555.7 L950.6 556.7 L951.1 557.8 L951.6 558.8 L952.1 559.9 L952.6 560.9 L953.1 562.0 L953.6 563.0 L954.1 564.0 L954.6 565.1 L955.1 566.1 L955.6 567.2 L956.1 568.2 L956.6 569.3 L957.1 570.3 L957.6 571.3 L958.1 572.4 L958.6 573.4 L959.1 574.5 L959.6 575.5 L960.1 576.5 L960.6 577.5 L961.1 578.6 L961.6 579.6 L962.1 580.6 L962.5 581.6 L963.0 582.6 L963.5 583.7 L964.0 584.7 L964.5 585.7 L964.9 586.7 L965.4 587.7 L965.9 588.7 L966.4 589.7 L966.8 590.7 L967.3 591.6 L967.7 592.6 L968.2 593.6 L968.6 594.6 L969.1 595.6 L969.5 596.5 L970.0 597.5 L970.4 598.5 L970.8 599.4 L971.3 600.4 L971.7 601.3 L972.1 602.3 L972.5 603.2 L972.9 604.2 L973.3 605.1 L973.7 606.0 L974.1 607.0 L974.5 607.9 L974.9 608.8 L975.3 609.7 L975.6 610.6 L976.0 611.5 L976.4 612.5 L976.7 613.4 L977.1 614.3 L977.4 615.2 L977.8 616.1 L978.1 616.9 L978.4 617.8 L978.8 618.7 L979.1 619.6 L979.4 620.5 L979.7 621.3 L980.0 622.2 L980.3 623.1 L980.6 623.9 L980.9 624.8 L981.2 625.7 L981.4 626.5 L981.7 627.4 L982.0 628.2 L982.2 629.1 L982.5 629.9 L982.7 630.8 L982.9 631.6 L983.2 632.4 L983.4 633.3 L983.6 634.1 L983.8 634.9 L984.0 635.8 L984.2 636.6 L984.4 637.4 L984.6 638.2 L984.8 639.1 L985.0 639.9 L985.1 640.7 L985.3 641.5 L985.5 642.3 L985.6 643.1 L985.7 643.9 L985.9 644.7 L986.0 645.6 L986.1 646.4 L986.3 647.2 L986.4 648.0 L986.5 648.8 L986.6 649.6 L986.7 650.4 L986.8 651.2 L986.9 652.0 L987.0 652.7 L987.0 653.5 L987.1 654.3 L987.2 655.1 L987.2 655.9 L987.3 656.7 L987.3 657.5 L987.3 658.3 L987.4 659.1 L987.4 659.9 L987.4 660.7 L987.4 661.4 L987.4 662.2 L987.4 663.0 L987.4 663.8 L987.4 664.6 L987.4 665.4 L987.4 666.1 L987.4 666.9 L987.3 667.7 L987.3 668.5 L987.2 669.3 L987.2 670.1 L987.1 670.8 L987.1 671.6 L987.0 672.4 L986.9 673.2 L986.8 673.9 L986.7 674.7 L986.6 675.5 L986.5 676.3 L986.4 677.0 L986.3 677.8 L986.2 678.6 L986.1 679.4 L985.9 680.1 L985.8 680.9 L985.7 681.7 L985.5 682.4 L985.3 683.2 L985.2 684.0 L985.0 684.7 L984.8 685.5 L984.7 686.2 L984.5 687.0 L984.3 687.8 L984.1 688.5 L983.9 689.3 L983.7 690.0 L983.5 690.8 L983.2 691.5 L983.0 692.3 L982.8 693.0 L982.5 693.7 L982.3 694.5 L982.0 695.2 L981.8 695.9 L981.5 696.7 L981.3 697.4 L981.0 698.1 L980.7 698.8 L980.4 699.5 L980.1 700.2 L979.9 701.0 L979.6 701.7 L979.2 702.4 L978.9 703.1 L978.6 703.8 L978.3 704.4 L978.0 705.1 L977.7 705.8 L977.3 706.5 L977.0 707.2 L976.6 707.8 L976.3 708.5 L975.9 709.2 L975.6 709.8 L975.2 710.5 L974.8 711.1 L974.5 711.8 L974.1 712.4 L973.7 713.0 L973.3 713.7 L972.9 714.3 L972.5 714.9 L972.1 715.5 L971.7 716.1 L971.3 716.7 L970.9 717.3 L970.5 717.9 L970.1 718.5 L969.7 719.1 L969.2 719.7 L968.8 720.3 L968.4 720.8 L967.9 721.4 L967.5 722.0 L967.0 722.5 L966.6 723.1 L966.1 723.6 L965.7 724.2 L965.2 724.7 L964.7 725.2 L964.3 725.8 L963.8 726.3 L963.3 726.8 L962.8 727.3 L962.4 727.8 L961.9 728.3 L961.4 728.8 L960.9 729.3 L960.4 729.8 L959.9 730.3 L959.3 730.8 L958.8 731.2 L958.3 731.7 L957.8 732.2 L957.2 732.6 L956.7 733.1 L956.2 733.6 L955.6 734.0 L955.1 734.5 L954.5 734.9 L954.0 735.3 L953.4 735.8 L952.8 736.2 L952.3 736.6 L951.7 737.1 L951.1 737.5 L950.5 737.9 L949.9 738.3 L949.3 738.7 L948.7 739.2 L948.1 739.6 L947.5 740.0 L946.8 740.4 L946.2 740.8 L945.6 741.2 L944.9 741.6 L944.3 741.9 L943.6 742.3 L942.9 742.7 L942.3 743.1 L941.6 743.5 L940.9 743.8 L940.2 744.2 L939.5 744.6 L938.8 745.0 L938.1 745.3 L937.4 745.7 L936.6 746.0 L935.9 746.4 L935.2 746.7 L934.4 747.1 L933.6 747.4 L932.9 747.8 L932.1 748.1 L931.3 748.5 L930.5 748.8 L929.7 749.2 L928.9 749.5 L928.1 749.8 L927.2 750.1 L926.4 750.5 L925.6 750.8 L924.7 751.1 L923.8 751.4 L923.0 751.7 L922.1 752.1 L921.2 752.4 L920.3 752.7 L919.4 753.0 L918.5 753.3 L917.6 753.6 L916.6 753.9 L915.7 754.2 L914.8 754.5 L913.8 754.8 L912.8 755.0 L911.9 755.3 L910.9 755.6 L909.9 755.9 L908.9 756.2 L907.9 756.4 L906.9 756.7 L905.9 757.0 L904.8 757.2 L903.8 757.5 L902.8 757.8 L901.7 758.0 L900.6 758.3 L899.6 758.5 L898.5 758.8 L897.4 759.1 L896.3 759.3 L895.2 759.5 L894.1 759.8 L893.0 760.0 L891.9 760.3 L890.8 760.5 L889.7 760.8 L888.5 761.0 L887.4 761.2 L886.2 761.5 L885.1 761.7 L883.9 761.9 L882.8 762.1 L881.6 762.4 L880.4 762.6 L879.2 762.8 L878.0 763.0 L876.8 763.3 L875.6 763.5 L874.4 763.7 L873.2 763.9 L872.0 764.1 L870.8 764.3 L869.6 764.5 L868.3 764.8 L867.1 765.0 L865.9 765.2 L864.6 765.4 L863.4 765.6 L862.1 765.8 L860.9 766.0 L859.6 766.2 L858.4 766.4 L857.1 766.6 L855.9 766.8 L854.6 767.0 L853.4 767.2 L852.1 767.4 L850.8 767.6 L849.6 767.8 L848.3 768.0 L847.0 768.2 L845.7 768.4 L844.5 768.6 L843.2 768.8 L841.9 769.0 L840.7 769.2 L839.4 769.4 L838.1 769.6 L836.8 769.8 L835.6 770.0 L834.3 770.2 L833.0 770.4 L831.8 770.6 L830.5 770.8 L829.2 771.0 L828.0 771.2 L826.7 771.4 L825.5 771.6 L824.2 771.8 L823.0 772.0 L821.7 772.2 L820.5 772.4 L819.2 772.5 L818.0 772.7 L816.7 772.9 L815.5 773.1 L814.3 773.3 L813.0 773.5 L811.8 773.7 L810.6 773.9 L809.4 774.0 L808.2 774.2 L807.0 774.4 L805.8 774.6 L804.6 774.8 L803.4 774.9 L802.2 775.1 L801.0 775.3 L799.8 775.5 L798.7 775.6 L797.5 775.8 L796.3 776.0 L795.2 776.1 L794.0 776.3 L792.9 776.5 L791.7 776.6 L790.6 776.8 L789.5 776.9 L788.4 777.1 L787.2 777.2 L786.1 777.4 L785.0 777.5 L783.9 777.7 L782.8 777.8 L781.7 778.0 L780.6 778.1 L779.5 778.2 L778.5 778.4 L777.4 778.5 L776.3 778.6 L775.3 778.8 L774.2 778.9 L773.2 779.0 L772.1 779.1 L771.1 779.2 L770.0 779.4 L769.0 779.5 L768.0 779.6 L766.9 779.7 L765.9 779.8 L764.9 779.9 L763.9 780.0 L762.9 780.1 L761.9 780.2 L760.9 780.3 L759.9 780.4 L758.9 780.5 L757.9 780.5 L756.9 780.6 L755.9 780.7 L754.9 780.8 L753.9 780.8 L753.0 780.9 L752.0 781.0 L751.0 781.0 L750.0 781.1 L749.1 781.2 L748.1 781.2 L747.1 781.3 L746.2 781.3 L745.2 781.4 L744.2 781.4 L743.3 781.4 L742.3 781.5 L741.4 781.5 L740.4 781.6 L739.4 781.6 L738.5 781.6 L737.5 781.6 L736.6 781.7 L735.6 781.7 L734.7 781.7 L733.7 781.7 L732.7 781.7 L731.8 781.7 L730.8 781.7 L729.9 781.8 M730.1 841.1 L730.1 835.9 M470.8 464.4 L476.0 466.9 M730.0 823.5 L730.0 817.9 M488.6 473.1 L494.3 475.8 M730.0 805.0 L729.9 800.2 M507.8 481.4 L512.6 483.8 M729.9 787.3 L729.9 781.8 M525.6 490.2 L531.3 493.0 " fill="none" stroke="#151515" stroke-width="0.95"/>
<path d="M976.7 463.5 L979.1 467.2 M978.0 462.8 L980.4 466.5 M979.4 462.1 L981.8 465.8 M971.4 466.0 L973.8 469.7 M972.8 465.3 L975.2 469.0 M974.1 464.6 L976.5 468.3 M958.8 472.1 L961.2 475.8 M960.1 471.4 L962.5 475.1 M961.5 470.7 L963.9 474.4 M953.1 474.8 L955.5 478.5 M954.5 474.1 L956.8 477.8 M955.8 473.5 L958.2 477.2 M940.0 481.1 L942.4 484.8 M941.4 480.5 L943.8 484.2 M942.7 479.8 L945.1 483.5 M935.2 483.4 L937.6 487.1 M936.6 482.8 L939.0 486.5 M937.9 482.1 L940.3 485.8 M922.1 489.7 L924.5 493.4 M923.5 489.1 L925.9 492.8 M924.8 488.4 L927.2 492.1 M916.5 492.5 L918.9 496.2 M917.8 491.8 L920.2 495.5 M919.2 491.1 L921.6 494.8 M472.2 464.5 L473.3 462.8 M473.4 465.1 L474.5 463.5 M477.4 467.1 L478.5 465.4 M478.6 467.7 L479.7 466.0 M490.0 473.2 L491.1 471.5 M491.2 473.8 L492.3 472.2 M495.6 476.0 L496.7 474.3 M496.9 476.6 L498.0 474.9 M509.2 481.6 L510.3 479.9 M510.5 482.2 L511.6 480.5 M514.0 483.9 L515.1 482.2 M515.2 484.5 L516.3 482.9 M527.0 490.3 L528.1 488.6 M528.3 490.9 L529.4 489.3 M532.6 493.1 L533.8 491.4 M533.9 493.7 L535.0 492.0 " fill="none" stroke="#333" stroke-width="0.7"/>
<g fill="none" stroke="#222" stroke-width="1"><rect x="-7.5" y="-2.8" width="15" height="5.6" transform="translate(738.7 409.0) rotate(97)"/><rect x="-7.5" y="-2.8" width="15" height="5.6" transform="translate(673.8 422.0) rotate(46)"/><rect x="-7.5" y="-2.8" width="15" height="5.6" transform="translate(793.0 435.0) rotate(-40)"/><rect x="-7.5" y="-2.8" width="15" height="5.6" transform="translate(610.5 483.4) rotate(35)"/><rect x="-7.5" y="-2.8" width="15" height="5.6" transform="translate(564.6 550.8) rotate(20)"/><rect x="-7.5" y="-2.8" width="15" height="5.6" transform="translate(534.5 622.6) rotate(10)"/><rect x="-7.5" y="-2.8" width="15" height="5.6" transform="translate(537.3 674.7) rotate(-20)"/><rect x="-7.5" y="-2.8" width="15" height="5.6" transform="translate(578.0 712.3) rotate(-58)"/><rect x="-7.5" y="-2.8" width="15" height="5.6" transform="translate(671.3 729.7) rotate(-65)"/><rect x="-7.5" y="-2.8" width="15" height="5.6" transform="translate(718.0 733.0) rotate(85)"/><rect x="-7.5" y="-2.8" width="15" height="5.6" transform="translate(762.3 730.8) rotate(90)"/><rect x="-7.5" y="-2.8" width="15" height="5.6" transform="translate(849.2 718.0) rotate(58)"/><rect x="-7.5" y="-2.8" width="15" height="5.6" transform="translate(902.7 690.0) rotate(30)"/><rect x="-7.5" y="-2.8" width="15" height="5.6" transform="translate(920.8 645.5) rotate(2)"/><rect x="-7.5" y="-2.8" width="15" height="5.6" transform="translate(892.4 562.8) rotate(-12)"/><rect x="-7.5" y="-2.8" width="15" height="5.6" transform="translate(850.6 495.6) rotate(-22)"/></g>
<ellipse cx="725" cy="589.5" rx="128" ry="110" fill="#F3D1BB" stroke="#111" stroke-width="1.1"/>
<clipPath id="hc"><ellipse cx="725" cy="589.5" rx="128" ry="110"/></clipPath>
<clipPath id="upper"><rect x="0" y="0" width="1432" height="640"/></clipPath>
<g clip-path="url(#hc)">
<ellipse cx="725" cy="592.5" rx="127.5" ry="109" fill="none" stroke="#5a4e46" stroke-width="1" clip-path="url(#upper)"/>
<ellipse cx="725" cy="659.5" rx="128" ry="110" fill="#b09c8c" stroke="#222" stroke-width="1"/>
<ellipse cx="725" cy="662.5" rx="128" ry="110" fill="#fff" stroke="#222" stroke-width="0.9"/>
</g>
<ellipse cx="725" cy="589.5" rx="128" ry="110" fill="none" stroke="#111" stroke-width="1.2"/>
<path d="M727 481 A128 110 0 0 0 600 560" fill="none" stroke="#a08a7a" stroke-width="1.6" transform="translate(0 1.6)"/>
<path d="M727 481 A128 110 0 0 1 850 560" fill="none" stroke="#a08a7a" stroke-width="1.6" transform="translate(0 1.6)"/>
<path d="M598 596.7 L614.7 603.7 M852 597 L836 604" stroke="#333" stroke-width="0.9"/>
<g fill="#A89383" stroke="#222" stroke-width="0.8">
<path d="M606 553 L614 536 L620 532 L620 557 L615 560 Z"/>
<path d="M671 490 L678 487 L682 488 L682 497 L677 499 Z"/>
<path d="M784 497 L792 494 L799 503 L792 511 L786 508 Z"/>
<path d="M842 549 L845 546 L849 566 L849 571 L843 569 Z"/>
<rect x="734" y="481" width="8" height="4"/>
</g>
<rect x="-8" y="-3" width="16" height="6" transform="translate(583.5 518) rotate(25)" fill="#e0c4b0" stroke="#222" stroke-width="0.8"/><path d="M-6 -1 H6 M-6 1 H6" transform="translate(583.5 518) rotate(25)" stroke="#333" stroke-width=".6" stroke-dasharray="1 1"/>
</g>
<rect x="0.5" y="24.5" width="389" height="34" fill="none" stroke="#DCDCE2"/><rect x="391.5" y="24.5" width="1045" height="34" fill="none" stroke="#DCDCE2"/><g transform="translate(-7.0 29.0) scale(1.0)"><g fill="#bbb"><rect x="10" y="4" width="1" height="1"/><rect x="10" y="7" width="1" height="1"/><rect x="10" y="10" width="1" height="1"/><rect x="10" y="13" width="1" height="1"/><rect x="10" y="16" width="1" height="1"/><rect x="10" y="19" width="1" height="1"/><rect x="13" y="4" width="1" height="1"/><rect x="13" y="7" width="1" height="1"/><rect x="13" y="10" width="1" height="1"/><rect x="13" y="13" width="1" height="1"/><rect x="13" y="16" width="1" height="1"/><rect x="13" y="19" width="1" height="1"/></g></g><g transform="translate(386.0 29.0) scale(1.0)"><g fill="#bbb"><rect x="10" y="4" width="1" height="1"/><rect x="10" y="7" width="1" height="1"/><rect x="10" y="10" width="1" height="1"/><rect x="10" y="13" width="1" height="1"/><rect x="10" y="16" width="1" height="1"/><rect x="10" y="19" width="1" height="1"/><rect x="13" y="4" width="1" height="1"/><rect x="13" y="7" width="1" height="1"/><rect x="13" y="10" width="1" height="1"/><rect x="13" y="13" width="1" height="1"/><rect x="13" y="16" width="1" height="1"/><rect x="13" y="19" width="1" height="1"/></g></g><g transform="translate(15.0 30.0) scale(1.0)"><g fill="none" stroke="#1F4A76" stroke-width="1.4"><path d="M5 2 H15 L19 6 V14"/><path d="M14 22 H5 V2"/><circle cx="18" cy="18.5" r="4.3" fill="#F0F0F5"/><path d="M18 16 V21 M15.5 18.5 H20.5"/></g></g><g transform="translate(47.0 30.0) scale(1.0)"><g fill="none" stroke="#1F4A76" stroke-width="1.4"><path d="M1 6 H8 L10 8 H20 V10"/><path d="M1 6 V20 H21 L22 10 H1"/></g></g><g transform="translate(79.0 30.0) scale(1.0)"><g fill="none" stroke="#1F4A76" stroke-width="1.4"><path d="M5 2 H21 V22 H2 V5 Z"/><path d="M6.5 2 V9 H17 V2"/><path d="M6 14 H18 M6 17 H18 M6 20 H18"/></g></g><g transform="translate(98.5 30.0) scale(1.0)"><path d="M12 2.0 V22.0" stroke="#8a8a8a" stroke-width="2"/></g><g transform="translate(117.0 30.0) scale(1.0)"><g fill="none" stroke="#999" stroke-width="1.4"><circle cx="6" cy="16" r="3"/><circle cx="8" cy="20" r="2.5"/><path d="M8 14 L22 9 M9 18 L16 3"/></g></g><g transform="translate(149.0 30.0) scale(1.0)"><g fill="none" stroke="#999" stroke-width="1.3"><path d="M3 2 H10 L12 4 V17 H3 Z"/><path d="M10 8 H17 L20 11 V23 H11 V17"/><path d="M5 6 H9 M5 9 H9 M5 12 H9 M13 14 H18 M13 17 H18 M13 20 H18"/></g></g><g transform="translate(181.0 30.0) scale(1.0)"><g fill="none" stroke="#999" stroke-width="1.3"><path d="M4 5 H8 V3 H13 V5 H17 V10"/><path d="M12 22 H4 V5"/><rect x="11" y="11" width="9" height="12"/><rect x="13" y="15" width="5" height="6" fill="#ccc" stroke="none"/></g></g><g transform="translate(213.0 30.0) scale(1.0)"><g fill="none" stroke="#999" stroke-width="1.3"><path d="M3 5 H21 M9 5 V2 H15 V5"/><path d="M5 6 V22 H19 V6"/><path d="M10 9 V18 M14 9 V18"/></g></g><g transform="translate(233.0 30.0) scale(1.0)"><path d="M12 2.0 V22.0" stroke="#8a8a8a" stroke-width="2"/></g><g transform="translate(251.0 30.0) scale(1.0)"><g fill="none" stroke="#999" stroke-width="1.5"><path d="M4 9 H14 A5 5 0 0 1 14 19 H9"/><path d="M8 5 L4 9 L8 13" /></g></g><g transform="translate(283.0 30.0) scale(1.0)"><g fill="none" stroke="#999" stroke-width="1.5"><path d="M20 9 H10 A5 5 0 0 0 10 19 H15"/><path d="M16 5 L20 9 L16 13"/></g></g><g transform="translate(303.0 30.0) scale(1.0)"><path d="M12 2.0 V22.0" stroke="#8a8a8a" stroke-width="2"/></g><g transform="translate(321.0 30.0) scale(1.0)"><g fill="none" stroke="#1F4A76" stroke-width="1.4"><path d="M6 7 V2 H16 L18 4 V7"/><rect x="1" y="7" width="22" height="10" rx="2"/><rect x="6" y="13" width="12" height="10" fill="#F0F0F5"/><path d="M8 21 L11 17 L13 19 L15 16 L17 21"/></g></g><g transform="translate(341.0 30.0) scale(1.0)"><path d="M12 2.0 V22.0" stroke="#8a8a8a" stroke-width="2"/></g><g transform="translate(359.0 30.0) scale(1.0)"><g fill="none" stroke="#1F4A76" stroke-width="1.4"><circle cx="12" cy="12" r="10.5"/><path d="M12 10 V18" stroke-width="2.2"/><circle cx="12" cy="6.5" r="1.2" fill="#1F4A76" stroke="none"/></g></g><g transform="translate(404.0 30.0) scale(1.0)"><g fill="#fff" stroke="#111" stroke-width="1.2" stroke-linejoin="round"><path d="M2 20 L8 17 L10 22 Z" fill="#777" stroke="none"/><path d="M6 5 L19 2 L22 18 L9 21 Z"/></g><circle cx="18" cy="5" r="2" fill="#F00"/><circle cx="9" cy="21" r="1.6" fill="#000"/><path d="M20 8 L21 16 M14 19 L20 17" stroke="#000" stroke-width="1.4"/></g><g transform="translate(437.0 30.0) scale(1.0)"><path d="M11 21 A9 9 0 0 1 19 3" fill="none" stroke="#222" stroke-width="1.4"/><path d="M15 16 H22 M18.5 12.5 V19.5" stroke="#F00" stroke-width="2"/></g><g transform="translate(470.0 30.0) scale(1.0)"><path d="M3 19 L8 11 L15 7 L21 8" fill="none" stroke="#222" stroke-width="1.2"/><circle cx="3" cy="19" r="2.6" fill="#F00" stroke="#600" stroke-width=".4"/><circle cx="8" cy="11" r="2.6" fill="#F00" stroke="#600" stroke-width=".4"/><circle cx="15" cy="7" r="2.6" fill="#F00" stroke="#600" stroke-width=".4"/><circle cx="21" cy="8" r="2.6" fill="#F00" stroke="#600" stroke-width=".4"/></g><g transform="translate(501.5 30.0) scale(1.0)"><g fill="#fff" stroke="#111" stroke-width="1.2" stroke-linejoin="round"><path d="M4 9 L10 3 L15 7 L12 14 L4 15 Z"/></g><path d="M12 14 L15 8 L23 16 L15 19 Z" fill="#F04010" stroke="#222" stroke-width=".8"/><path d="M1 15 L6 13 L4 17 Z" fill="#111"/></g><g transform="translate(533.0 30.0) scale(1.0)"><g fill="#fff" stroke="#111" stroke-width="1.2" stroke-linejoin="round"><path d="M2 17 L12 22 L22 17 L12 12 Z"/><path d="M2 14 L12 19 L22 14 L12 9 Z"/></g><path d="M2 11 L12 16 L22 11 L12 6 Z" fill="#E04848" stroke="#111" stroke-width="1"/><path d="M2 8 L12 13 L22 8 L12 3 Z" fill="#fff" stroke="#111" stroke-width="1"/></g><g transform="translate(565.0 30.0) scale(1.0)"><path d="M8 17 L14 21 L22 18 L16 14 Z" fill="#8bc77a" stroke="#888" stroke-width=".8"/><path d="M10 14 L16 18 L22 15 L16 11 Z" fill="#f0b060"/><path d="M10 11 L16 15 L22 12 L16 8 Z" fill="#b08ee0"/><path d="M10 8 L16 12 L22 9 L16 5 Z" fill="#6ad0e8"/><path d="M11 5 L16 8 L22 6 L16 2 Z" fill="#fff" stroke="#555" stroke-width=".8"/><path d="M2 17 L7 14 L12 17 L7 20 Z" fill="#fff" stroke="#777" stroke-width=".8"/><path d="M9 6 Q5 6 5 11 L3 10 M5 11 L7 10" stroke="#F00" stroke-width="1.6" fill="none"/></g><g transform="translate(597.0 30.0) scale(1.0)"><path d="M2 22 L23 8" stroke="#111" stroke-width="1.3"/><path d="M4 2 L14 13" stroke="#F00" stroke-width="1.4"/><path d="M10 11 L14 8 L17 12 L13 15 Z" fill="#fff" stroke="#111"/><circle cx="13" cy="14" r="2.2" fill="#F00" stroke="#000" stroke-width=".6"/></g><g transform="translate(629.5 30.0) scale(1.0)"><g fill="#fff" stroke="#111" stroke-width="1.2" stroke-linejoin="round"><path d="M3 18 L9 15 L12 21 Z" fill="#555" stroke="none"/><path d="M7 7 L13 4 L18 8 L18 16 L13 20 L8 18 L6 12 Z"/></g><path d="M4 7 L13 2 L21 6 L22 14 L18 19" fill="none" stroke="#111" stroke-dasharray="2 1.5"/></g><g transform="translate(661.0 30.0) scale(1.0)"><g fill="#fff" stroke="#111" stroke-width="1.2" stroke-linejoin="round"><path d="M2 8 L7 6 L11 9 L17 7 L22 12 L15 16 L13 13 L8 18 L2 14 Z"/></g><path d="M3 4 V12 M16 3 V7" stroke="#111"/></g><g transform="translate(693.0 30.0) scale(1.0)"><g fill="#fff" stroke="#111" stroke-width="1.2" stroke-linejoin="round"><path d="M3 10 L9 7 L13 10 L15 5 L21 3 L22 11 L16 14 L12 12 L9 16 L3 17 Z"/></g><path d="M2 22 L8 13 M9 14 L17 11" stroke="#F00" stroke-width="1.2"/></g><g transform="translate(725.0 30.0) scale(1.0)"><path d="M1 9 L7 16 L10 14" fill="#888" stroke="none"/><path d="M4 3 Q18 2 20 14 Q20 20 17 22 L11 20 Q13 12 5 9 Z" fill="#eee" stroke="#222" stroke-width="1.1"/><path d="M6 4 Q16 5 16 17" fill="none" stroke="#c05080" stroke-width="1"/><path d="M6 5 Q15 6 15 17" fill="none" stroke="#5060c0" stroke-width=".8"/></g><g transform="translate(757.0 30.0) scale(1.0)"><g fill="#fff" stroke="#111" stroke-width="1.2" stroke-linejoin="round"><path d="M3 15 L8 5 L16 5 L22 15 L13 22 Z"/><path d="M3 15 L12 13 L22 15 M12 13 V22 M8 5 L12 13 L16 5"/></g><path d="M7 5 L12 2 L17 5 L12 8 Z" fill="none" stroke="#F00" stroke-width="1.3"/></g><g transform="translate(789.0 30.0) scale(1.0)"><g fill="#fff" stroke="#111" stroke-width="1.2" stroke-linejoin="round"><path d="M2 14 L9 3 L9 21 L2 22 Z" fill="#ccc"/><path d="M10 10 L22 6 L22 14 L10 18 Z" fill="#cfe0e8"/></g><path d="M4 15 L8 9 L8 15 L4 19 Z" fill="none" stroke="#F00" stroke-width="1.2"/></g><g transform="translate(821.0 30.0) scale(1.0)"><g fill="#fff" stroke="#111" stroke-width="1.2" stroke-linejoin="round"><path d="M3 10 L6 6 L6 20 L3 18 Z" fill="#888" stroke="none"/><ellipse cx="12" cy="6" rx="7" ry="4" fill="#ccd"/><path d="M6 9 Q3 16 10 21 L18 19 Q21 13 17 8"/></g><path d="M12 7 V20" stroke="#F00" stroke-width="1.6"/></g><g transform="translate(853.0 30.0) scale(1.0)"><g fill="#fff" stroke="#111" stroke-width="1.2" stroke-linejoin="round"><path d="M2 7 L11 3 L19 7 L22 14 L12 21 L2 18 Z"/><path d="M2 7 L13 12 L22 14 M13 12 L12 21"/></g><circle cx="14" cy="11" r="2" fill="#F00"/><path d="M20 9 L24 13 L20 16 Z" fill="#000"/></g><g transform="translate(885.0 30.0) scale(1.0)"><path d="M3 22 V8 Q3 3 8 3 H22" fill="none" stroke="#111" stroke-width="1.6"/><path d="M3 13 Q3 4 10 3" fill="none" stroke="#F00" stroke-width="1.6"/></g><g transform="translate(917.0 30.0) scale(1.0)"><path d="M4 22 V3 H22" fill="none" stroke="#111" stroke-width="1.6" stroke-dasharray="14 2 40"/><path d="M4 13 L13 3" stroke="#F00" stroke-width="1.4"/></g><g transform="translate(949.0 30.0) scale(1.0)"><path d="M3 21 L22 5 M10 15 H22" fill="none" stroke="#111" stroke-width="1.6"/><path d="M3 21 L10 15 H16" stroke="#F00" stroke-width="1.4" fill="none"/><circle cx="8" cy="16" r="2" fill="#F00" stroke="#000" stroke-width=".6"/></g><g transform="translate(981.0 30.0) scale(1.0)"><g fill="#fff" stroke="#111" stroke-width="1.2" stroke-linejoin="round"><path d="M6 9 L12 2 L22 3 L22 21 L10 17 Z"/></g><path d="M2 8 L6 17 L22 22" fill="none" stroke="#F00" stroke-width="2.2"/><path d="M3 12 L6 19 L22 23" fill="none" stroke="#999" stroke-width="1.4"/></g><g transform="translate(1013.0 30.0) scale(1.0)"><g fill="#fff" stroke="#111" stroke-width="1.2" stroke-linejoin="round"><path d="M3 6 L10 2 L22 3 L22 21 L4 21 Z"/><path d="M3 6 L22 6 M8 6 V21 M12 9 L15 16 L18 9 V21"/></g><path d="M3 15 L10 12 L15 14 L22 12" fill="none" stroke="#F00" stroke-width="1.4"/><path d="M1 14 L4 14 L4 21 L1 19 Z" fill="#777"/></g><g transform="translate(1045.0 30.0) scale(1.0)"><g fill="#fff" stroke="#111" stroke-width="1.2" stroke-linejoin="round"><path d="M9 2 L21 18 L9 22 L3 17 Z" fill="#e8e8e8"/></g><path d="M9 2 Q19 8 20 18" fill="none" stroke="#F00" stroke-width="1.6"/><path d="M6 15 Q12 13 17 19" fill="none" stroke="#3050d0" stroke-width="1.2"/></g><g transform="translate(1077.0 30.0) scale(1.0)"><g fill="#fff" stroke="#111" stroke-width="1.2" stroke-linejoin="round"><path d="M10 6 L16 2 L23 9 L16 14 Z"/></g><path d="M9 12 L13 9 L16 13 L12 16 Z" fill="#F00" stroke="#000" stroke-width=".8"/><path d="M2 22 L14 2 M2 20 H6 M4 18 V22" stroke="#F00" stroke-width="1"/><path d="M8 15 L22 17" stroke="#111" stroke-width="1"/></g><g transform="translate(1109.0 30.0) scale(1.0)"><g fill="#fff" stroke="#111" stroke-width="1.2" stroke-linejoin="round"><rect x="4" y="9" width="4" height="12"/><rect x="11" y="5" width="4" height="13"/><path d="M19 2 Q17 8 19 14"/></g><path d="M1 22 L4 19" stroke="#111"/></g><g transform="translate(1141.0 30.0) scale(1.0)"><g fill="#fff" stroke="#111" stroke-width="1.2" stroke-linejoin="round"><rect x="2" y="8" width="3" height="11"/><rect x="6" y="4" width="3" height="16"/><rect x="10" y="6" width="3" height="16"/><rect x="14" y="3" width="3" height="15"/><rect x="18" y="7" width="3" height="13"/></g></g><g transform="translate(1173.0 30.0) scale(1.0)"><g fill="#fff" stroke="#111" stroke-width="1.2" stroke-linejoin="round"><ellipse cx="13" cy="16" rx="9" ry="5"/><path d="M4 16 V6 Q13 0 22 6 V16"/><path d="M7 4 V14 M10 3 V13 M13 2 V12 M16 3 V13 M19 4 V14" stroke-width="1.5"/></g></g><g transform="translate(1205.0 30.0) scale(1.0)"><g fill="#fff" stroke="#111" stroke-width="1.2" stroke-linejoin="round"><rect x="3" y="14" width="3" height="8" transform="rotate(10 4 18)"/><rect x="8" y="13" width="4" height="6"/><rect x="12" y="9" width="5" height="6" transform="rotate(-20 14 12)"/><rect x="16" y="3" width="6" height="6" transform="rotate(-10 19 6)" fill="#ccc"/></g></g><g transform="translate(1237.0 30.0) scale(1.0)"><path d="M1 15 L7 8 L8 20 Z" fill="#888"/><g fill="#fff" stroke="#111" stroke-width="1.2" stroke-linejoin="round"><path d="M7 8 L13 6 L14 19 L8 22 Z"/><path d="M13 6 L21 3 L22 16 L14 19"/></g></g><g transform="translate(1269.0 30.0) scale(1.0)"><path d="M1 12 L11 6 L11 18 Z" fill="#888"/><g fill="#fff" stroke="#111" stroke-width="1.2" stroke-linejoin="round"><path d="M11 6 L22 1 L22 17 L11 22 Z"/></g><rect x="15" y="8" width="3" height="5" fill="#333"/></g><g transform="translate(1301.0 30.0) scale(1.0)"><path d="M2 2 L7 2 L7 20 L2 17 Z" fill="#777"/><g fill="#fff" stroke="#111" stroke-width="1.2" stroke-linejoin="round"><path d="M7 2 L22 6 V22 L7 20 Z"/><path d="M7 7 L22 10 M7 12 L22 14 M7 16 L22 18"/></g></g><g transform="translate(1333.0 30.0) scale(1.0)"><path d="M2 8 L9 20 L11 12" fill="#888"/><g fill="#fff" stroke="#111" stroke-width="1.2" stroke-linejoin="round"><path d="M9 5 H20 L17 8 L16 20 L13 23 L12 9 Z"/></g></g><g transform="translate(1365.0 30.0) scale(1.0)"><g fill="#fff" stroke="#111" stroke-width="1.2" stroke-linejoin="round"><path d="M2 16 L10 12 L22 16 L13 21 Z" fill="#eee"/><path d="M10 3 H16 V15 H10 Z"/></g></g><g transform="translate(1397.0 30.0) scale(1.0)"><path d="M3 3 L13 20 M13 20 L22 8" stroke="#111" stroke-width="4" stroke-linecap="round"/><path d="M3 3 L13 20 M13 20 L22 8" stroke="#fff" stroke-width="2.2"/><path d="M5 6 L11 16 M15 17 L20 10" stroke="#F00" stroke-width="1.4"/><path d="M14 17 H24" stroke="#555" stroke-width="1"/></g><g transform="translate(1420.0 30.0) scale(1.0)"><path d="M12 3 L18 8 L12 14 L18 20" fill="none" stroke="#111" stroke-width="1.4"/></g><rect x="784.5" y="59.5" width="211" height="36" fill="none" stroke="#DCDCE2"/><g transform="translate(777.0 66.0) scale(1.0)"><g fill="#bbb"><rect x="10" y="4" width="1" height="1"/><rect x="10" y="7" width="1" height="1"/><rect x="10" y="10" width="1" height="1"/><rect x="10" y="13" width="1" height="1"/><rect x="10" y="16" width="1" height="1"/><rect x="10" y="19" width="1" height="1"/><rect x="13" y="4" width="1" height="1"/><rect x="13" y="7" width="1" height="1"/><rect x="13" y="10" width="1" height="1"/><rect x="13" y="13" width="1" height="1"/><rect x="13" y="16" width="1" height="1"/><rect x="13" y="19" width="1" height="1"/></g></g><g transform="translate(799.0 66.0) scale(1.0)"><g stroke="#bbb" stroke-width=".8" fill="none"><path d="M1 6 L13 1 L23 6 V20 L12 23 L1 20 Z"/></g><g stroke="#555" stroke-width="1.2" stroke-linejoin="round"><path d="M5 8 L13 5 L20 8 L20 18 L12 21 L5 18 Z" fill="#fff"/><path d="M13 11 L20 8 V18 L13 21 Z" fill="#ccc"/><path d="M5 8 L13 11 V21" fill="none"/></g><circle cx="8" cy="15" r=".8" fill="#555"/></g><g transform="translate(831.0 66.0) scale(1.0)"><g stroke="#555" stroke-width="1.2" stroke-linejoin="round"><path d="M5 8 L13 5 L20 8 L20 18 L12 21 L5 18 Z" fill="#fff"/><path d="M13 11 L20 8 V18 L13 21 Z" fill="#ccc"/><path d="M5 8 L13 11 V21" fill="none"/></g><path d="M12 0 V24 M0 15 L24 11" stroke="#555" stroke-width="1.4"/></g><g transform="translate(863.0 66.0) scale(1.0)"><g stroke="#555" stroke-width="1.2" stroke-linejoin="round"><path d="M5 8 L13 5 L20 8 L20 18 L12 21 L5 18 Z" fill="#fff"/><path d="M13 11 L20 8 V18 L13 21 Z" fill="#ccc"/><path d="M5 8 L13 11 V21" fill="none"/></g><path d="M1 11 L6 12 M19 15 L24 16" stroke="#666" stroke-width="1.6"/></g><g transform="translate(895.0 66.0) scale(1.0)"><g stroke="#555" stroke-width="1.2" stroke-linejoin="round"><path d="M5 8 L13 5 L20 8 L20 18 L12 21 L5 18 Z" fill="#fff"/><path d="M13 11 L20 8 V18 L13 21 Z" fill="#ccc"/><path d="M5 8 L13 11 V21" fill="none"/></g><path d="M0 17 L6 15 M19 11 L24 9" stroke="#666" stroke-width="1.6"/></g><g transform="translate(927.0 66.0) scale(1.0)"><g stroke="#555" stroke-width="1.2" stroke-linejoin="round"><path d="M5 8 L13 5 L20 8 L20 18 L12 21 L5 18 Z" fill="#fff"/><path d="M13 11 L20 8 V18 L13 21 Z" fill="#ccc"/><path d="M5 8 L13 11 V21" fill="none"/></g><path d="M12 0 V5 M12 20 V24" stroke="#555" stroke-width="1.6"/></g><g transform="translate(963.0 66.0) scale(1.0)"><path d="M3 2 V20" stroke="#555" stroke-width="1.3"/><rect x="15" y="2" width="8" height="8" fill="#ccc" stroke="#555"/><rect x="7" y="12" width="7" height="6" fill="#fff" stroke="#555"/><path d="M10 18 L8 23 M10 18 L12 23" stroke="#555"/></g><rect x="997.5" y="59.5" width="44" height="36" fill="none" stroke="#DCDCE2"/><g transform="translate(989.0 66.0) scale(1.0)"><g fill="#bbb"><rect x="10" y="4" width="1" height="1"/><rect x="10" y="7" width="1" height="1"/><rect x="10" y="10" width="1" height="1"/><rect x="10" y="13" width="1" height="1"/><rect x="10" y="16" width="1" height="1"/><rect x="10" y="19" width="1" height="1"/><rect x="13" y="4" width="1" height="1"/><rect x="13" y="7" width="1" height="1"/><rect x="13" y="10" width="1" height="1"/><rect x="13" y="13" width="1" height="1"/><rect x="13" y="16" width="1" height="1"/><rect x="13" y="19" width="1" height="1"/></g></g><g><rect x="1010" y="62" width="19" height="3" fill="#1b5f8f"/><path d="M1013 65 H1026 L1022 72 H1017 Z" fill="#2a90c8"/><path d="M1017 72 H1022 L1020 80 Z" fill="#1b5f8f"/><path d="M1019.5 75 V94" stroke="#333" stroke-width="1.6"/><path d="M1017 82 L1022 81 M1017 85 L1022 84 M1017 88 L1022 87 M1017 91 L1022 90" stroke="#333" stroke-width="1"/><text x="0" y="0" transform="translate(1038 94) rotate(-90)" font-family="Liberation Sans" font-weight="bold" font-size="13" fill="#F01030">ABF</text><path d="M1034 64 V68" stroke="#F01030" stroke-width="1.5"/></g><rect x="1043.5" y="59.5" width="176" height="36" fill="none" stroke="#DCDCE2"/><g transform="translate(1034.0 66.0) scale(1.0)"><g fill="#bbb"><rect x="10" y="4" width="1" height="1"/><rect x="10" y="7" width="1" height="1"/><rect x="10" y="10" width="1" height="1"/><rect x="10" y="13" width="1" height="1"/><rect x="10" y="16" width="1" height="1"/><rect x="10" y="19" width="1" height="1"/><rect x="13" y="4" width="1" height="1"/><rect x="13" y="7" width="1" height="1"/><rect x="13" y="10" width="1" height="1"/><rect x="13" y="13" width="1" height="1"/><rect x="13" y="16" width="1" height="1"/><rect x="13" y="19" width="1" height="1"/></g></g><rect x="1053.5" y="67.5" width="165" height="21" rx="3" fill="#fff" stroke="#C8C8CE"/><path d="M1061 78 L1064 82 L1070 73" fill="none" stroke="#111" stroke-width="1.6"/><text x="1077" y="83" font-family="Liberation Sans" font-size="12.5" fill="#222">Untagged</text><path d="M1202 76 H1212 L1207 81 Z" fill="#777"/><rect x="1221.5" y="59.5" width="52" height="36" fill="none" stroke="#DCDCE2"/><g transform="translate(1215.0 66.0) scale(1.0)"><g fill="#bbb"><rect x="10" y="4" width="1" height="1"/><rect x="10" y="7" width="1" height="1"/><rect x="10" y="10" width="1" height="1"/><rect x="10" y="13" width="1" height="1"/><rect x="10" y="16" width="1" height="1"/><rect x="10" y="19" width="1" height="1"/><rect x="13" y="4" width="1" height="1"/><rect x="13" y="7" width="1" height="1"/><rect x="13" y="10" width="1" height="1"/><rect x="13" y="13" width="1" height="1"/><rect x="13" y="16" width="1" height="1"/><rect x="13" y="19" width="1" height="1"/></g></g><text x="1234" y="84" font-family="Liberation Serif" font-style="italic" font-weight="bold" font-size="20" fill="#1E1EA0">Cz</text><rect x="1234" y="88" width="30" height="4.5" fill="#F010C0"/><path d="M1269 66 V86" stroke="#888" stroke-width="1.5"/><rect x="1275.5" y="59.5" width="108" height="36" fill="none" stroke="#DCDCE2"/><g transform="translate(1267.0 66.0) scale(1.0)"><g fill="#bbb"><rect x="10" y="4" width="1" height="1"/><rect x="10" y="7" width="1" height="1"/><rect x="10" y="10" width="1" height="1"/><rect x="10" y="13" width="1" height="1"/><rect x="10" y="16" width="1" height="1"/><rect x="10" y="19" width="1" height="1"/><rect x="13" y="4" width="1" height="1"/><rect x="13" y="7" width="1" height="1"/><rect x="13" y="10" width="1" height="1"/><rect x="13" y="13" width="1" height="1"/><rect x="13" y="16" width="1" height="1"/><rect x="13" y="19" width="1" height="1"/></g></g><path d="M1293 70 Q1300 64 1311 68 Q1313 80 1305 90 Q1297 88 1292 80 Z" fill="#f0c8b8" stroke="#222" stroke-width="1.2"/><path d="M1298 70 Q1300 78 1297 86 M1303 68 Q1306 78 1302 88" stroke="#7a4a3a" stroke-width=".8" fill="none"/><path d="M1325 80 Q1327 64 1335 66 Q1341 70 1340 84" fill="none" stroke="#e86868" stroke-width="1.3"/><rect x="1321" y="78" width="9" height="8" fill="#2aa050" stroke="#156" stroke-width=".6"/><circle cx="1340" cy="86" r="4.2" fill="#F0C010" stroke="#333" stroke-width=".6"/><path d="M1354 82 L1362 69 L1376 79 L1375 89 L1360 90 Z M1362 69 L1365 82 L1354 82 M1365 82 L1375 89 M1365 82 L1360 90 M1365 82 L1376 79" fill="none" stroke="#20a030" stroke-width="1.2"/><rect x="1385.5" y="59.5" width="50" height="36" fill="none" stroke="#DCDCE2"/><g transform="translate(1377.0 66.0) scale(1.0)"><g fill="#bbb"><rect x="10" y="4" width="1" height="1"/><rect x="10" y="7" width="1" height="1"/><rect x="10" y="10" width="1" height="1"/><rect x="10" y="13" width="1" height="1"/><rect x="10" y="16" width="1" height="1"/><rect x="10" y="19" width="1" height="1"/><rect x="13" y="4" width="1" height="1"/><rect x="13" y="7" width="1" height="1"/><rect x="13" y="10" width="1" height="1"/><rect x="13" y="13" width="1" height="1"/><rect x="13" y="16" width="1" height="1"/><rect x="13" y="19" width="1" height="1"/></g></g><rect x="1396" y="68" width="4" height="20" fill="#888"/><rect x="1420" y="68" width="5" height="20" fill="#888"/><path d="M1403 68 H1415 L1419 88 H1405 Z" fill="#333"/><path d="M1403 66 L1399 90 M1415 66 L1421 90 M1403 66 H1415 M1399 90 H1421" fill="none" stroke="#e04040" stroke-width="1.4"/><circle cx="1403" cy="66" r="2.2" fill="#fff" stroke="#e04040"/><circle cx="1415" cy="66" r="2.2" fill="#fff" stroke="#e04040"/><g transform="translate(23.0 89.0) scale(1.0)"><g fill="#bbb"><rect x="4" y="11" width="1" height="1"/><rect x="4" y="13" width="1" height="1"/><rect x="7" y="11" width="1" height="1"/><rect x="7" y="13" width="1" height="1"/><rect x="10" y="11" width="1" height="1"/><rect x="10" y="13" width="1" height="1"/><rect x="13" y="11" width="1" height="1"/><rect x="13" y="13" width="1" height="1"/><rect x="16" y="11" width="1" height="1"/><rect x="16" y="13" width="1" height="1"/><rect x="19" y="11" width="1" height="1"/><rect x="19" y="13" width="1" height="1"/></g></g><rect x="3.5" y="107.5" width="31" height="31" rx="4" fill="#DCEAF7" stroke="#3A8BD0" stroke-width="1.2"/><g transform="translate(5.5 111.0) scale(1.0)"><path d="M8 5 L8 19 L11 16 L14 21 L16 20 L13 15 L17 15 Z" fill="#1F4A76"/></g><g transform="translate(37.0 111.0) scale(1.0)"><path d="M6 3 L6 14 L9 11 L11 15 L13 14 L11 10 L14 10 Z" fill="#1F4A76"/><path d="M10 5 Q20 3 20 11 Q19 18 11 17 Q6 17 8 22" fill="none" stroke="#3AA3DC" stroke-width="1.3" stroke-dasharray="2.5 1.5"/></g><g transform="translate(5.5 142.0) scale(1.0)"><path d="M7 11 L14 4 L22 12 L15 19 Z" fill="#DCEBF8" stroke="#1F4A76" stroke-width="1.3"/><path d="M10 7 Q14 0 20 3 Q23 6 19 9" fill="none" stroke="#1F4A76" stroke-width="1.2"/><path d="M13 5 Q4 5 3 14 Q2 19 4 21 Q6 14 10 10 Z" fill="#3AA3DC"/></g><g transform="translate(37.0 142.0) scale(1.0)"><path d="M3 16 L13 5 L21 11 L12 21 H7 Z" fill="#DCEBF8" stroke="#1F4A76" stroke-width="1.2"/><path d="M8 10 L13 5 L21 11 L16 16 Z" fill="#3AA3DC" opacity=".8"/><path d="M13 5 L21 11 L16 16 L8 10 Z" fill="none" stroke="#1F4A76"/><path d="M5 23 H22" stroke="#3AA3DC" stroke-width="1.5"/></g><g transform="translate(5.5 176.0) scale(1.0)"><g fill="#DCEBF8" stroke="#1F4A76" stroke-width="1.2"><path d="M9 3 L13 1 L17 3 V8 L13 10 L9 8 Z"/><path d="M4 11 L8 9 L12 11 V16 L8 18 L4 16 Z"/><path d="M13 11 L17 9 L21 11 V16 L17 18 L13 16 Z"/></g></g><g transform="translate(37.0 176.0) scale(1.0)"><path d="M4 13 L14 3 H21 V10 L11 20 L7 22 L3 18 Z" fill="#DCEBF8" stroke="#1F4A76" stroke-width="1.3"/><circle cx="8" cy="17" r="1.2" fill="#3AA3DC"/></g><g transform="translate(5.5 213.0) scale(1.0)"><path d="M4 21 L6 15 L18 3 L21 6 L9 18 Z" fill="#fff" stroke="#F00" stroke-width="1.4"/><path d="M4 21 L6 15 L9 18 Z" fill="#1F4A76"/></g><g transform="translate(37.0 213.0) scale(1.0)"><path d="M5 19 Q10 14 6 9 Q4 5 10 7 Q16 12 13 16 Q12 21 19 14 L20 7" fill="none" stroke="#3AA3DC" stroke-width="1.5"/><circle cx="5" cy="19" r="2" fill="#1F4A76"/><circle cx="20" cy="5" r="2.5" fill="#F00"/></g><g transform="translate(5.5 245.0) scale(1.0)"><rect x="4" y="5" width="16" height="16" fill="#DCEBF8" stroke="#3AA3DC" stroke-width="1.4"/><path d="M4 21 L20 5" stroke="#1F4A76" stroke-width="1.2"/><circle cx="4" cy="21" r="1.8" fill="#1F4A76"/><circle cx="20" cy="5" r="2.6" fill="#F00"/></g><g transform="translate(37.0 245.0) scale(1.0)"><path d="M4 7 H20 V21 H4" fill="#DCEBF8" stroke="#3AA3DC" stroke-width="1.4"/><path d="M4 7 Q16 8 16 21" fill="none" stroke="#1F4A76" stroke-width="1.2"/><circle cx="4" cy="21" r="1.8" fill="#1F4A76"/><circle cx="20" cy="21" r="1.8" fill="#1F4A76"/><circle cx="4" cy="7" r="2.8" fill="#F00"/></g><g transform="translate(5.5 277.0) scale(1.0)"><circle cx="12" cy="13" r="9" fill="#DCEBF8" stroke="#3AA3DC" stroke-width="1.4"/><path d="M12 13 L19 6" stroke="#1F4A76" stroke-width="1.2"/><circle cx="12" cy="13" r="1.8" fill="#1F4A76"/><circle cx="19" cy="6" r="2.6" fill="#F00"/></g><g transform="translate(37.0 277.0) scale(1.0)"><path d="M7 4 H17 L22 13 L17 22 H7 L2 13 Z" fill="#DCEBF8" stroke="#3AA3DC" stroke-width="1.4"/><path d="M12 13 L18 6" stroke="#1F4A76" stroke-width="1.2"/><circle cx="12" cy="13" r="1.8" fill="#1F4A76"/><circle cx="18" cy="5" r="2.6" fill="#F00"/></g><g transform="translate(5.5 309.0) scale(1.0)"><path d="M4 5 V20 L20 5" fill="none" stroke="#1F4A76" stroke-width="1.2"/><path d="M4 20 Q18 20 20 5" fill="none" stroke="#3AA3DC" stroke-width="1.4"/><circle cx="4" cy="5" r="1.8" fill="#1F4A76"/><circle cx="4" cy="20" r="1.8" fill="#1F4A76"/><circle cx="20" cy="5" r="2.6" fill="#F00"/></g><g transform="translate(37.0 309.0) scale(1.0)"><path d="M4 6 Q12 0 20 6" fill="none" stroke="#3AA3DC" stroke-width="1.4"/><path d="M4 6 Q2 16 7 20" fill="none" stroke="#3AA3DC" stroke-width="1.4"/><path d="M20 6 L7 20" stroke="#1F4A76" stroke-width="1.2"/><circle cx="20" cy="6" r="1.8" fill="#1F4A76"/><circle cx="7" cy="20" r="1.8" fill="#1F4A76"/><circle cx="4" cy="6" r="2.6" fill="#F00"/></g><g transform="translate(5.5 341.0) scale(1.0)"><path d="M9 4 Q22 8 17 19 Q10 22 4 16" fill="none" stroke="#3AA3DC" stroke-width="1.4"/><path d="M9 4 L17 19 L4 16" fill="none" stroke="#1F4A76" stroke-width="1.2"/><circle cx="4" cy="16" r="1.8" fill="#1F4A76"/><circle cx="17" cy="19" r="1.8" fill="#1F4A76"/><circle cx="9" cy="4" r="2.6" fill="#F00"/></g><g transform="translate(37.0 341.0) scale(1.0)"><path d="M4 4 V20 Q18 20 20 4 Z" fill="#DCEBF8"/><path d="M4 4 V20 L20 4 H4" fill="none" stroke="#1F4A76" stroke-width="1.2"/><path d="M4 20 Q18 20 20 4" fill="none" stroke="#3AA3DC" stroke-width="1.4"/><circle cx="4" cy="4" r="1.8" fill="#1F4A76"/><circle cx="4" cy="20" r="1.8" fill="#1F4A76"/><circle cx="20" cy="4" r="2.6" fill="#F00"/></g><g transform="translate(5.5 379.0) scale(1.0)"><g fill="#F00"><path d="M12 1 L16 6 H8 Z"/><path d="M12 23 L16 18 H8 Z"/><path d="M1 12 L6 8 V16 Z"/><path d="M23 12 L18 8 V16 Z"/></g><path d="M12 6 V18 M6 12 H18" stroke="#F00" stroke-width="1.5" stroke-dasharray="2 1.5"/></g><g transform="translate(37.0 379.0) scale(1.0)"><path d="M1 15 L12 9 L23 15 L12 21 Z" fill="#DCEBF8" stroke="#3AA3DC" stroke-width="1.3"/><path d="M1 15 V18 L12 24 L23 18 V15" fill="#3AA3DC" opacity=".5" stroke="#3AA3DC"/><path d="M12 2 L17 8 H14 V14 H10 V8 H7 Z" fill="#F00"/></g><g transform="translate(5.5 411.0) scale(1.0)"><path d="M5 13 A7 7 0 0 1 17 7" fill="none" stroke="#F00" stroke-width="1.8"/><path d="M19 11 A7 7 0 0 1 7 17" fill="none" stroke="#F00" stroke-width="1.8"/><path d="M15 3 L20 7 L14 9 Z M9 21 L4 17 L10 15 Z" fill="#F00"/></g><g transform="translate(37.0 411.0) scale(1.0)"><path d="M5 8 Q4 14 8 19 L13 16 Q10 12 11 9 Z" fill="#DCEBF8" stroke="#3AA3DC" stroke-width="1.3"/><ellipse cx="10.5" cy="17.5" rx="3" ry="2" fill="#DCEBF8" stroke="#3AA3DC"/><path d="M5 8 Q10 2 17 4" fill="none" stroke="#1F4A76" stroke-width="1.2"/><circle cx="19" cy="6" r="2.6" fill="#F00"/></g><g transform="translate(5.5 443.0) scale(1.0)"><rect x="2" y="2" width="20" height="20" fill="#DCEBF8" stroke="#3AA3DC" stroke-width="1.4"/><path d="M2 11 H12 V22" fill="none" stroke="#1F4A76" stroke-width="1.6"/><path d="M2 22 V2 H22" fill="none" stroke="#1F4A76" stroke-width="1.2"/><path d="M10 14 L18 6 L15 4 H22 V11 L20 8 L12 16 Z" fill="#F00"/></g><g transform="translate(37.0 443.0) scale(1.0)"><path d="M4 8 Q12 0 20 8" fill="none" stroke="#3AA3DC" stroke-width="1.4"/><path d="M20 11 Q22 20 14 22" fill="none" stroke="#3AA3DC" stroke-width="1.4"/><path d="M6 18 Q7 11 12 11" fill="none" stroke="#1F4A76" stroke-width="1.6"/><path d="M10 15 L17 7 L15 5 H22 V12 L20 10 L13 17 Z" fill="#F00"/></g><g transform="translate(5.5 475.0) scale(1.0)"><path d="M12 14 V2" stroke="#3AA3DC" stroke-width="1.3"/><path d="M12 2 L10 6 H14 Z" fill="#3AA3DC"/><path d="M12 14 L21 8" stroke="#3a3" stroke-width="1.3"/><path d="M21 7 L17 8 L19 11 Z" fill="#3a3"/><path d="M12 14 L21 21" stroke="#F00" stroke-width="1.3"/><path d="M22 22 L17 21 L20 18 Z" fill="#F00"/><path d="M12 14 L3 8 M12 14 L3 21" stroke="#F00" stroke-width="1" stroke-dasharray="1.5 1.5"/><circle cx="12" cy="14" r="3" fill="#1F4A76"/></g><g transform="translate(37.0 475.0) scale(1.0)"><path d="M2 22 L12 2 L22 22 Z" fill="#DCEBF8" stroke="#1F4A76" stroke-width="1.3"/><path d="M2 22 L12 2 V22 Z" fill="#fff" stroke="#1F4A76" stroke-width="1.3"/><path d="M12 1 V23" stroke="#e66" stroke-width="1.6" stroke-dasharray="2 1"/></g><g transform="translate(5.5 512.0) scale(1.0)"><path d="M4 9 L14 2 L21 9 L12 17 Q5 17 4 9 Z" fill="#DCEBF8" stroke="#1F4A76" stroke-width="1.3"/><circle cx="12" cy="9" r="3.5" fill="#F00"/><path d="M3 21 L11 16" stroke="#1F4A76" stroke-width="1.2"/></g><g transform="translate(37.0 512.0) scale(1.0)"><path d="M3 15 L13 3 M3 11 L7 18 M9 4 L14 9" stroke="#1F4A76" stroke-width="1.2"/><circle cx="18" cy="11" r="2.6" fill="#F00"/><circle cx="9" cy="19" r="2.6" fill="#F00"/><text x="6" y="9" font-size="6" fill="#1F4A76" transform="rotate(-45 7 8)">5</text></g><g transform="translate(5.5 544.0) scale(1.0)"><path d="M3 20 L20 4 A12 12 0 0 0 3 20 Z" fill="#DCEBF8" stroke="#1F4A76" stroke-width="1.4"/><path d="M6 17 L17 7 A8 8 0 0 0 6 17 Z" fill="none" stroke="#1F4A76" stroke-width=".8" stroke-dasharray="1 1"/></g><g transform="translate(37.0 544.0) scale(1.0)"><rect x="9" y="3" width="14" height="12" fill="#fff" stroke="#1F4A76" stroke-width="1.3"/><text x="11" y="12.5" font-size="8" font-family="Liberation Mono" fill="#1F4A76">A1</text><path d="M4 9 V20 M9 9 H4" fill="none" stroke="#1F4A76" stroke-width="1.3"/><path d="M1 19 L4 23 L7 19 Z" fill="#1F4A76"/></g><g transform="translate(5.5 577.0) scale(1.0)"><circle cx="12" cy="12" r="8" fill="#fff" stroke="#1F4A76" stroke-width="1.4"/><path d="M1 12 H23" stroke="#1F4A76" stroke-width="1.2"/><path d="M19 8 L24 12 L19 16" fill="none" stroke="#1F4A76" stroke-width="1.2"/><text x="10" y="10" font-size="4.5" fill="#1F4A76">C</text><text x="7.5" y="17" font-size="4.5" fill="#1F4A76">A-B</text></g><g transform="translate(37.0 577.0) scale(1.0)"><path d="M4 22 L10 2 H15 L21 22 H17 L15.5 16 H9.5 L8 22 Z M10.5 12.5 H14.5 L12.5 5 Z" fill="#3AA3DC" fill-rule="evenodd"/><path d="M6 22 L11 4" fill="none" stroke="#bfe4f8" stroke-width="1.4"/></g><g transform="translate(5.5 614.0) scale(1.0)"><path d="M12 1 V23" stroke="#1F4A76" stroke-width="1.4"/><ellipse cx="12" cy="13" rx="10" ry="4.5" fill="none" stroke="#F00" stroke-width="2.6" stroke-dasharray="8 3 30"/><path d="M3 8 L1 13 L6 13 Z" fill="#F00"/></g><g transform="translate(37.0 614.0) scale(1.0)"><path d="M9 12 V5 Q11 3 12 5 V11 M12 10 Q14 8 15 10 V12 Q17 10 18 12 V13 Q20 12 21 14 V19 Q19 23 14 23 Q10 23 6 16 Q6 14 9 16 Z" fill="#DCEBF8" stroke="#1F4A76" stroke-width="1.1"/><path d="M3 4 H21" stroke="#F00" stroke-width="1.6"/><path d="M1 4 L5 1 V7 Z M23 4 L19 1 V7 Z" fill="#F00"/></g><g transform="translate(5.5 647.0) scale(1.0)"><circle cx="14" cy="9" r="7" fill="#fff" stroke="#1F4A76" stroke-width="1.6"/><path d="M9 14 L2 21" stroke="#1F4A76" stroke-width="2.6" stroke-linecap="round"/></g><g transform="translate(37.0 647.0) scale(1.0)"><rect x="2" y="2" width="21" height="20" fill="none" stroke="#3AA3DC" stroke-width="1.4" stroke-dasharray="1.2 1.2"/><circle cx="14" cy="10" r="6" fill="#fff" stroke="#1F4A76" stroke-width="1.6"/><path d="M10 14 L4 20" stroke="#1F4A76" stroke-width="2.4" stroke-linecap="round"/></g><g transform="translate(5.5 679.0) scale(1.0)"><circle cx="12" cy="13" r="6" fill="#fff" stroke="#1F4A76" stroke-width="1.6"/><path d="M8 17 L2 23" stroke="#1F4A76" stroke-width="2.4"/><path d="M2 2 L7 3 L3 7 Z M22 2 L17 3 L21 7 Z M22 23 L17 22 L21 18 Z" fill="#F00"/><path d="M3 3 L7 7 M21 3 L17 7 M21 22 L17 18" stroke="#F00" stroke-width="1.4"/></g><g transform="translate(37.0 679.0) scale(1.0)"><path d="M3 8 H8 L10 5 H15 L17 8 V18 H3 Z" fill="none" stroke="#aaa" stroke-width="1.3"/><path d="M13 12 A5 5 0 1 1 14 21 H10" fill="none" stroke="#aaa" stroke-width="1.3"/></g><g transform="translate(5.5 717.0) scale(1.0)"><rect x="5" y="5" width="14" height="11" rx="2" fill="#DCEBF8" stroke="#1F4A76" stroke-width="1.3"/><circle cx="12" cy="10" r="3.4" fill="#F00"/><path d="M8 16 L5 23 M16 16 L19 23 M12 16 V21" stroke="#1F4A76" stroke-width="1.3"/><ellipse cx="12" cy="23" rx="6" ry="1" fill="#ccc"/></g><g transform="translate(37.0 717.0) scale(1.0)"><circle cx="13" cy="3" r="2" fill="#888"/><path d="M12 6 L10 14 L6 23 M10 14 L14 18 L15 23 M12 8 L16 12 M11 8 L7 13" stroke="#888" stroke-width="2.2" fill="none"/><path d="M19 9 V23 M4 23 H22" stroke="#999" stroke-width="1"/></g><g transform="translate(5.5 749.0) scale(1.0)"><path d="M2 12 Q12 2 22 12 Q12 22 2 12 Z" fill="#fff" stroke="#1F4A76" stroke-width="1.6"/><circle cx="13" cy="12" r="6" fill="#3AA3DC"/><circle cx="13" cy="12" r="2.6" fill="#fff"/><path d="M3 12 Q11 3 22 11 Q14 4 4 8" fill="#1F4A76"/><path d="M1 9 H5 M1 11 H4" stroke="#1F4A76" stroke-width="1"/></g><g transform="translate(37.0 749.0) scale(1.0)"><path d="M22 4 L3 12 L22 20" fill="none" stroke="#999" stroke-width="1.3"/><path d="M16 6 Q19 12 16 18 M20 5 Q23 12 20 19" fill="none" stroke="#999" stroke-width="1.2" stroke-dasharray="2 1"/></g><g transform="translate(5.5 787.0) scale(1.0)"><path d="M3 6 L12 1 L21 6 V16 L12 21 L3 16 Z" fill="none" stroke="#1F4A76" stroke-width="2.4"/><path d="M8 9 L12 7 L16 9 V14 L12 16 L8 14 Z" fill="none" stroke="#1F4A76" stroke-width="1.2"/><path d="M15 14 H21 V19 H24 L18 24 L12 19 H15 Z" fill="#fff" stroke="#3AA3DC" stroke-width="1.4"/></g><g transform="translate(37.0 787.0) scale(1.0)"><path d="M2 3 L12 10 L22 3 M2 10 L12 17 L22 10" fill="none" stroke="#1F4A76" stroke-width="3"/><path d="M2 17 L10 11 M22 17 L14 11" stroke="#1F4A76" stroke-width="3"/><circle cx="18" cy="18" r="5.5" fill="#fff" stroke="#1F4A76" stroke-width="1.4"/><path d="M15 18 A3 3 0 0 1 21 17 M21 18 A3 3 0 0 1 15 19" fill="none" stroke="#1F4A76" stroke-width="1"/></g><g transform="translate(5.5 819.0) scale(1.0)"><path d="M2 8 L11 3 L20 8 L11 13 Z M2 12 L11 17 L20 12 M2 16 L11 21 L20 16" fill="none" stroke="#1F4A76" stroke-width="2.2"/><path d="M12 15 H18 V12 L23 17 L18 22 V19 H12 Z" fill="#fff" stroke="#3AA3DC" stroke-width="1.3"/></g><g transform="translate(37.0 819.0) scale(1.0)"><path d="M2 3 L12 10 L22 3 M2 10 L12 17 L22 10" fill="none" stroke="#1F4A76" stroke-width="3"/><path d="M2 17 L10 11 M22 17 L14 11" stroke="#1F4A76" stroke-width="3"/><circle cx="18" cy="18" r="5" fill="#fff" stroke="#1F4A76" stroke-width="2.2" stroke-dasharray="1.6 1"/><circle cx="18" cy="18" r="2" fill="#fff" stroke="#1F4A76" stroke-width="1.2"/></g><rect x="8" y="206" width="52" height="2" fill="#858585"/><rect x="8" y="372" width="52" height="2" fill="#858585"/><rect x="8" y="505" width="52" height="2" fill="#858585"/><rect x="8" y="608" width="52" height="2" fill="#858585"/><rect x="8" y="710" width="52" height="2" fill="#858585"/><rect x="8" y="780" width="52" height="2" fill="#858585"/><circle cx="104.5" cy="109.5" r="5.2" fill="none" stroke="#111" stroke-width="1.6"/><path d="M100.8 113.2 L93.5 120.5" stroke="#111" stroke-width="2.2"/><rect x="1250.5" y="92.5" width="190" height="56" fill="#F0F0F5" stroke="#C8C8D0"/><rect x="1252" y="94" width="190" height="19" fill="#9DB7D4"/><text x="1256" y="108" font-family="Liberation Sans" font-weight="bold" font-size="12.5" fill="#3a3a48">Keyframe Animation</text><path d="M1258 119 L1279 131 L1258 143 Z" fill="#2a68d8"/><path d="M1258 119 L1279 131 L1258 131 Z" fill="#4a90f0"/><circle cx="1300" cy="131" r="10.5" fill="#fff" stroke="#444" stroke-width="2.2"/><circle cx="1300" cy="131" r="4.5" fill="#E00010"/><rect x="1321" y="120" width="22" height="22" fill="none" stroke="#3650c0" stroke-width="1.6" stroke-dasharray="3 3"/><g fill="#3650c0"><rect x="1320" y="119" width="3" height="3"/><rect x="1341" y="119" width="3" height="3"/><rect x="1320" y="140" width="3" height="3"/><rect x="1341" y="140" width="3" height="3"/></g><circle cx="1364" cy="131" r="11" fill="#9a9a9a"/><circle cx="1364" cy="130" r="9" fill="#b8b8b8"/><path d="M1359 126 L1369 136 M1369 126 L1359 136" stroke="#fff" stroke-width="2.6"/><circle cx="1395" cy="133" r="9" fill="none" stroke="#3a50c0" stroke-width="2.6"/><path d="M1392 120 H1398 M1395 120 V124 M1402 123 L1405 126" stroke="#3a50c0" stroke-width="2.4"/><path d="M1395 133 L1399 128" stroke="#3a50c0" stroke-width="2"/><rect x="1416" y="120" width="18" height="22" fill="#333"/><rect x="1417" y="124" width="17" height="14" fill="#2a8ad8"/><rect x="1422" y="124" width="1" height="14" fill="#8ccaf0"/><g fill="#fff"><rect x="1418" y="121" width="2" height="2"/><rect x="1422" y="121" width="2" height="2"/><rect x="1426" y="121" width="2" height="2"/><rect x="1430" y="121" width="2" height="2"/><rect x="1418" y="139" width="2" height="2"/><rect x="1422" y="139" width="2" height="2"/><rect x="1426" y="139" width="2" height="2"/><rect x="1430" y="139" width="2" height="2"/></g><rect x="1414.5" y="205.5" width="20" height="56" fill="#F0F0F5" stroke="#C8C8D0"/><rect x="1416" y="207" width="18" height="19" fill="#9DB7D4"/><text x="1419" y="221" font-family="Liberation Sans" font-weight="bold" font-size="10" fill="#333">...</text><path d="M1420 236 L1432 232 V255 H1420 Z" fill="#b8b8b8" stroke="#999"/><rect x="137" y="967" width="157" height="2" fill="#888"/><rect x="297" y="962" width="1" height="7" fill="#D8D8DE"/><rect x="380" y="962" width="1" height="7" fill="#D8D8DE"/><rect x="493" y="962" width="1" height="7" fill="#D8D8DE"/><rect x="720" y="962" width="1" height="7" fill="#D8D8DE"/><rect x="866" y="962" width="1" height="7" fill="#D8D8DE"/><rect x="1146" y="962" width="1" height="7" fill="#D8D8DE"/><rect x="1193" y="962" width="1" height="7" fill="#D8D8DE"/><circle cx="325" cy="972" r="8" fill="none" stroke="#f08050" stroke-width="1.2"/><rect x="322" y="965" width="6" height="4" fill="#e85020"/><path d="M357 969 L365 963 V969 Z" fill="#333"/><rect x="399" y="966" width="16" height="3" fill="#c8d870"/><rect x="437" y="966" width="8" height="3" fill="#e0e040"/><rect x="445" y="965" width="8" height="4" fill="#2030d0"/><rect x="472" y="965" width="29" height="8" rx="3" fill="none" stroke="#3a8bd0" stroke-width="1.2"/><rect x="522" y="966" width="10" height="3" fill="#e04040" opacity=".7"/><rect x="546" y="966" width="10" height="3" fill="#3a3" opacity=".7"/><rect x="585" y="966" width="10" height="3" fill="#4a4" opacity=".7"/><rect x="628" y="966" width="10" height="3" fill="#6a6" opacity=".7"/><rect x="660" y="966" width="10" height="3" fill="#a44" opacity=".7"/><rect x="690" y="966" width="10" height="3" fill="#b22" opacity=".7"/><rect x="745" y="966" width="12" height="3" fill="#3aa0dc"/><rect x="812" y="966" width="12" height="3" fill="#3aa0dc"/><rect x="876" y="966" width="12" height="3" fill="#3aa0dc"/><rect x="908" y="966" width="12" height="3" fill="#3aa0dc"/><rect x="1022" y="966" width="16" height="2" fill="#777"/><rect x="1055" y="966" width="16" height="2" fill="#777"/><rect x="1088" y="966" width="16" height="2" fill="#777"/><rect x="1118" y="966" width="16" height="2" fill="#777"/><circle cx="1218" cy="972" r="9" fill="none" stroke="#f08050" stroke-width="1.2"/><rect x="1242" y="964" width="16" height="5" fill="#d8a040"/><rect x="1275" y="965" width="26" height="4" fill="#c07020"/><circle cx="1322" cy="968" r="5" fill="#222"/><rect x="1350" y="966" width="14" height="3" fill="none" stroke="#666"/>
<g fill="#E8204A" stroke="#E8204A" stroke-width="1" font-family="Liberation Sans" font-size="15.5">
<g stroke="none"></g>
</g>
<g stroke="#E81C48" stroke-width="1" fill="none" stroke-linejoin="round" stroke-linecap="square">
<path d="M581.3 221.5 H599.3" fill="none"/><path d="M0 0 H6.5 V1.5 L1.5 11" transform="translate(600.5 209.5)"/><path d="M2 0 H5 L7 2 V9 L5 11 H2 L0 9 V2 Z" transform="translate(608.5 209.5)"/><path d="M2.8 10 V11" transform="translate(616.5 209.5)"/><path d="M0 0 V11 H6.3" transform="translate(627.5 209.5)"/><path d="M0 0 V11 H5.5 L7 9.5 V6.5 L5.5 5 H0 M5.5 5 L6.3 4.2 V1 L5.3 0 H0" transform="translate(636.5 209.5)"/><path d="M1 6 H5.5" transform="translate(644.5 209.5)"/><path d="M0 2 H2.5 M2.5 0 V11 M0 11 H5" transform="translate(652.5 209.5)"/><path d="M0 0 H6.5 V1.5 L1.5 11" transform="translate(660.5 209.5)"/><path d="M676.0 213.5 L691.4 213.5 L720.1 361.5" fill="none"/><path d="M0 0 L-8.5 -2.8 L-8.5 2.8 Z" transform="translate(720.1 361.5) rotate(79.0)" stroke="none" fill="#E81C48"/><path d="M609.8 270.5 H627.8" fill="none"/><path d="M6 0 H0 V4 H4.5 L6.5 6 V9.5 L5 11 H1 L0 10" transform="translate(628.5 258.5)"/><path d="M2.8 10 V11" transform="translate(637.5 258.5)"/><path d="M0 0 V11 H6.3" transform="translate(648.5 258.5)"/><path d="M0 0 V11 H5.5 L7 9.5 V6.5 L5.5 5 H0 M5.5 5 L6.3 4.2 V1 L5.3 0 H0" transform="translate(656.5 258.5)"/><path d="M1 6 H5.5" transform="translate(664.5 258.5)"/><path d="M0 2 H2.5 M2.5 0 V11 M0 11 H5" transform="translate(672.5 258.5)"/><path d="M0 0 H6.5 V1.5 L1.5 11" transform="translate(681.5 258.5)"/><path d="M696.0 262.5 L711.3 262.5 L752.9 299.3" fill="none"/><circle cx="752.9" cy="299.3" r="1.1" stroke="none" fill="#E81C48"/><path d="M415.7 329.5 H433.7" fill="none"/><path d="M6 0 H0 V4 H4.5 L6.5 6 V9.5 L5 11 H1 L0 10" transform="translate(434.5 317.5)"/><path d="M6 0 H0 V4 H4.5 L6.5 6 V9.5 L5 11 H1 L0 10" transform="translate(443.5 317.5)"/><path d="M2.8 10 V11" transform="translate(451.5 317.5)"/><path d="M0 0 V11 H6.3" transform="translate(462.5 317.5)"/><path d="M0 0 V11 H5.5 L7 9.5 V6.5 L5.5 5 H0 M5.5 5 L6.3 4.2 V1 L5.3 0 H0" transform="translate(470.5 317.5)"/><path d="M1 6 H5.5" transform="translate(478.5 317.5)"/><path d="M0 2 H2.5 M2.5 0 V11 M0 11 H5" transform="translate(486.5 317.5)"/><path d="M0 0 H6.5 V1.5 L1.5 11" transform="translate(495.5 317.5)"/><path d="M511.0 320.5 L526.7 320.5 L596.5 348.5" fill="none"/><circle cx="596.5" cy="348.5" r="1.1" stroke="none" fill="#E81C48"/><path d="M901.8 326.5 H919.8" fill="none"/><path d="M6.5 0 H3 L0 3 V9.5 L1.5 11 H5 L6.5 9.5 V6 L5 4.5 H1.5 L0 6" transform="translate(920.5 313.5)"/><path d="M2 0 H5 L7 2 V9 L5 11 H2 L0 9 V2 Z" transform="translate(929.5 313.5)"/><path d="M2.8 10 V11" transform="translate(937.5 313.5)"/><path d="M0 0 V11 H6.3" transform="translate(948.5 313.5)"/><path d="M0 0 V11 H5.5 L7 9.5 V6.5 L5.5 5 H0 M5.5 5 L6.3 4.2 V1 L5.3 0 H0" transform="translate(956.5 313.5)"/><path d="M1 6 H5.5" transform="translate(964.5 313.5)"/><path d="M0 2 H2.5 M2.5 0 V11 M0 11 H5" transform="translate(973.5 313.5)"/><path d="M0 0 H6.5 V1.5 L1.5 11" transform="translate(981.5 313.5)"/><path d="M893.0 318.5 L877.7 318.5 L869.2 372.6" fill="none"/><circle cx="869.2" cy="372.6" r="1.1" stroke="none" fill="#E81C48"/><path d="M339.9 391.5 H357.9" fill="none"/><path d="M6 0 H0 V4 H4.5 L6.5 6 V9.5 L5 11 H1 L0 10" transform="translate(359.5 379.5)"/><path d="M0 11 H3.5 L6.5 8 V1.5 L5 0 H1.5 L0 1.5 V5 L1.5 6.5 H6.5" transform="translate(367.5 379.5)"/><path d="M2.8 10 V11" transform="translate(375.5 379.5)"/><path d="M0 0 V11 H6.3" transform="translate(386.5 379.5)"/><path d="M0 0 V11 H5.5 L7 9.5 V6.5 L5.5 5 H0 M5.5 5 L6.3 4.2 V1 L5.3 0 H0" transform="translate(394.5 379.5)"/><path d="M1 6 H5.5" transform="translate(402.5 379.5)"/><path d="M0 2 H2.5 M2.5 0 V11 M0 11 H5" transform="translate(411.5 379.5)"/><path d="M0 0 H6.5 V1.5 L1.5 11" transform="translate(419.5 379.5)"/><path d="M435.5 383.5 L450.9 383.5 L516.0 416.0" fill="none"/><circle cx="516" cy="416" r="1.1" stroke="none" fill="#E81C48"/><path d="M976.3 387.5 H994.3" fill="none"/><path d="M6.5 0 H3 L0 3 V9.5 L1.5 11 H5 L6.5 9.5 V6 L5 4.5 H1.5 L0 6" transform="translate(995.5 375.5)"/><path d="M2.8 10 V11" transform="translate(1003.5 375.5)"/><path d="M0 0 V11 H6.3" transform="translate(1014.5 375.5)"/><path d="M0 0 V11 H5.5 L7 9.5 V6.5 L5.5 5 H0 M5.5 5 L6.3 4.2 V1 L5.3 0 H0" transform="translate(1022.5 375.5)"/><path d="M1 6 H5.5" transform="translate(1031.5 375.5)"/><path d="M0 2 H2.5 M2.5 0 V11 M0 11 H5" transform="translate(1039.5 375.5)"/><path d="M0 0 H6.5 V1.5 L1.5 11" transform="translate(1047.5 375.5)"/><path d="M967.7 379.5 L951.4 379.5 L938.4 451.2" fill="none"/><circle cx="938.4" cy="451.2" r="1.1" stroke="none" fill="#E81C48"/><path d="M301.9 446.5 H319.9" fill="none"/><path d="M6 0 H0 V4 H4.5 L6.5 6 V9.5 L5 11 H1 L0 10" transform="translate(321.5 433.5)"/><path d="M6 11 V0 L0 6.5 V7 H7.5" transform="translate(329.5 433.5)"/><path d="M2.8 10 V11" transform="translate(337.5 433.5)"/><path d="M0 0 V11 H6.3" transform="translate(348.5 433.5)"/><path d="M0 0 V11 H5.5 L7 9.5 V6.5 L5.5 5 H0 M5.5 5 L6.3 4.2 V1 L5.3 0 H0" transform="translate(356.5 433.5)"/><path d="M1 6 H5.5" transform="translate(364.5 433.5)"/><path d="M0 2 H2.5 M2.5 0 V11 M0 11 H5" transform="translate(373.5 433.5)"/><path d="M0 0 H6.5 V1.5 L1.5 11" transform="translate(381.5 433.5)"/><path d="M396.9 438.5 L412.9 438.5 L456.0 461.3" fill="none"/><path d="M0 0 L-8.5 -2.8 L-8.5 2.8 Z" transform="translate(456 461.3) rotate(27.9)" stroke="none" fill="#E81C48"/><path d="M1084.6 460.5 H1102.6" fill="none"/><path d="M0 0 H6.5 V1.5 L1.5 11" transform="translate(1103.5 448.5)"/><path d="M2.8 10 V11" transform="translate(1112.5 448.5)"/><path d="M0 0 V11 H6.3" transform="translate(1122.5 448.5)"/><path d="M0 0 V11 H5.5 L7 9.5 V6.5 L5.5 5 H0 M5.5 5 L6.3 4.2 V1 L5.3 0 H0" transform="translate(1131.5 448.5)"/><path d="M1 6 H5.5" transform="translate(1139.5 448.5)"/><path d="M0 2 H2.5 M2.5 0 V11 M0 11 H5" transform="translate(1147.5 448.5)"/><path d="M0 0 H6.5 V1.5 L1.5 11" transform="translate(1155.5 448.5)"/><path d="M1076.2 452.5 L1058.0 452.5 L994.5 461.2" fill="none"/><path d="M0 0 L-8.5 -2.8 L-8.5 2.8 Z" transform="translate(994.5 461.2) rotate(172.2)" stroke="none" fill="#E81C48"/><path d="M297.5 508.5 H315.5" fill="none"/><path d="M6 0 H0 V4 H4.5 L6.5 6 V9.5 L5 11 H1 L0 10" transform="translate(316.5 496.5)"/><path d="M1.5 0 H5 L6.5 1.5 V3.5 L5 5 H1.5 L0 3.5 V1.5 Z M1.5 5 L0 6.5 V9.5 L1.5 11 H5 L6.5 9.5 V6.5 L5 5" transform="translate(324.5 496.5)"/><path d="M2.8 10 V11" transform="translate(333.5 496.5)"/><path d="M0 0 V11 H6.3" transform="translate(343.5 496.5)"/><path d="M0 0 V11 H5.5 L7 9.5 V6.5 L5.5 5 H0 M5.5 5 L6.3 4.2 V1 L5.3 0 H0" transform="translate(352.5 496.5)"/><path d="M1 6 H5.5" transform="translate(360.5 496.5)"/><path d="M0 2 H2.5 M2.5 0 V11 M0 11 H5" transform="translate(368.5 496.5)"/><path d="M0 0 H6.5 V1.5 L1.5 11" transform="translate(376.5 496.5)"/><path d="M391.0 501.5 L407.0 501.5 L429.3 507.8" fill="none"/><circle cx="429.3" cy="507.8" r="1.1" stroke="none" fill="#E81C48"/><path d="M266.0 519.5 H284.0" fill="none"/><path d="M6.5 0 H3 L0 3 V9.5 L1.5 11 H5 L6.5 9.5 V6 L5 4.5 H1.5 L0 6" transform="translate(285.5 507.5)"/><path d="M1.5 0 H5 L6.5 1.5 V3.5 L5 5 H1.5 L0 3.5 V1.5 Z M1.5 5 L0 6.5 V9.5 L1.5 11 H5 L6.5 9.5 V6.5 L5 5" transform="translate(293.5 507.5)"/><path d="M2.8 10 V11" transform="translate(301.5 507.5)"/><path d="M0 0 V11 H6.3" transform="translate(312.5 507.5)"/><path d="M0 0 V11 H5.5 L7 9.5 V6.5 L5.5 5 H0 M5.5 5 L6.3 4.2 V1 L5.3 0 H0" transform="translate(320.5 507.5)"/><path d="M1 6 H5.5" transform="translate(328.5 507.5)"/><path d="M0 2 H2.5 M2.5 0 V11 M0 11 H5" transform="translate(337.5 507.5)"/><path d="M0 0 H6.5 V1.5 L1.5 11" transform="translate(345.5 507.5)"/><path d="M362.0 512.5 L377.0 512.5 L434.2 596.8" fill="none"/><path d="M0 0 L-8.5 -2.8 L-8.5 2.8 Z" transform="translate(434.2 596.8) rotate(55.8)" stroke="none" fill="#E81C48"/><path d="M1078.0 507.5 H1096.0" fill="none"/><path d="M6.5 0 H3 L0 3 V9.5 L1.5 11 H5 L6.5 9.5 V6 L5 4.5 H1.5 L0 6" transform="translate(1097.5 494.5)"/><path d="M0 2 H2.5 M2.5 0 V11 M0 11 H5" transform="translate(1105.5 494.5)"/><path d="M2.8 10 V11" transform="translate(1113.5 494.5)"/><path d="M0 0 V11 H6.3" transform="translate(1124.5 494.5)"/><path d="M0 0 V11 H5.5 L7 9.5 V6.5 L5.5 5 H0 M5.5 5 L6.3 4.2 V1 L5.3 0 H0" transform="translate(1132.5 494.5)"/><path d="M1 6 H5.5" transform="translate(1141.5 494.5)"/><path d="M0 2 H2.5 M2.5 0 V11 M0 11 H5" transform="translate(1149.5 494.5)"/><path d="M0 0 H6.5 V1.5 L1.5 11" transform="translate(1157.5 494.5)"/><path d="M1069.4 498.5 L1053.5 498.5 L1017.0 532.3" fill="none"/><circle cx="1017" cy="532.3" r="1.1" stroke="none" fill="#E81C48"/><path d="M250.0 588.5 H268.0" fill="none"/><path d="M6 0 H0 V4 H4.5 L6.5 6 V9.5 L5 11 H1 L0 10" transform="translate(269.5 575.5)"/><path d="M0 1 L1 0 H5 L6.5 1.5 V3.5 L5 5 H2 M5 5 L6.5 6.5 V9.5 L5 11 H1 L0 10" transform="translate(277.5 575.5)"/><path d="M2.8 10 V11" transform="translate(285.5 575.5)"/><path d="M0 0 V11 H6.3" transform="translate(296.5 575.5)"/><path d="M0 0 V11 H5.5 L7 9.5 V6.5 L5.5 5 H0 M5.5 5 L6.3 4.2 V1 L5.3 0 H0" transform="translate(304.5 575.5)"/><path d="M1 6 H5.5" transform="translate(312.5 575.5)"/><path d="M0 2 H2.5 M2.5 0 V11 M0 11 H5" transform="translate(321.5 575.5)"/><path d="M0 0 H6.5 V1.5 L1.5 11" transform="translate(329.5 575.5)"/><path d="M345.0 580.5 L361.0 580.5 L412.3 600.4" fill="none"/><circle cx="412.3" cy="600.4" r="1.1" stroke="none" fill="#E81C48"/><path d="M1176.8 686.5 H1194.8" fill="none"/><path d="M6.5 0 H3 L0 3 V9.5 L1.5 11 H5 L6.5 9.5 V6 L5 4.5 H1.5 L0 6" transform="translate(1196.5 673.5)"/><path d="M0 11 H3.5 L6.5 8 V1.5 L5 0 H1.5 L0 1.5 V5 L1.5 6.5 H6.5" transform="translate(1204.5 673.5)"/><path d="M2.8 10 V11" transform="translate(1212.5 673.5)"/><path d="M0 0 V11 H6.3" transform="translate(1223.5 673.5)"/><path d="M0 0 V11 H5.5 L7 9.5 V6.5 L5.5 5 H0 M5.5 5 L6.3 4.2 V1 L5.3 0 H0" transform="translate(1231.5 673.5)"/><path d="M1 6 H5.5" transform="translate(1239.5 673.5)"/><path d="M0 2 H2.5 M2.5 0 V11 M0 11 H5" transform="translate(1248.5 673.5)"/><path d="M0 0 H6.5 V1.5 L1.5 11" transform="translate(1256.5 673.5)"/><path d="M1168.0 678.5 L1152.3 678.5 L960.0 690.0" fill="none"/><path d="M0 0 L-8.5 -2.8 L-8.5 2.8 Z" transform="translate(960 690) rotate(176.6)" stroke="none" fill="#E81C48"/><path d="M1160.7 717.5 H1178.7" fill="none"/><path d="M1.5 0 H5 L6.5 1.5 V3.5 L5 5 H1.5 L0 3.5 V1.5 Z M1.5 5 L0 6.5 V9.5 L1.5 11 H5 L6.5 9.5 V6.5 L5 5" transform="translate(1179.5 705.5)"/><path d="M2.8 10 V11" transform="translate(1188.5 705.5)"/><path d="M0 0 V11 H6.3" transform="translate(1198.5 705.5)"/><path d="M0 0 V11 H5.5 L7 9.5 V6.5 L5.5 5 H0 M5.5 5 L6.3 4.2 V1 L5.3 0 H0" transform="translate(1207.5 705.5)"/><path d="M1 6 H5.5" transform="translate(1215.5 705.5)"/><path d="M0 2 H2.5 M2.5 0 V11 M0 11 H5" transform="translate(1223.5 705.5)"/><path d="M0 0 H6.5 V1.5 L1.5 11" transform="translate(1231.5 705.5)"/><path d="M1152.3 710.5 L1136.5 710.5 L1071.6 678.4" fill="none"/><circle cx="1071.6" cy="678.4" r="1.1" stroke="none" fill="#E81C48"/><path d="M236.1 707.5 H254.1" fill="none"/><path d="M0 1 L1 0 H5 L6.5 1.5 V4 L0 10 V11 H6.5" transform="translate(255.5 695.5)"/><path d="M6.5 0 H3 L0 3 V9.5 L1.5 11 H5 L6.5 9.5 V6 L5 4.5 H1.5 L0 6" transform="translate(263.5 695.5)"/><path d="M2.8 10 V11" transform="translate(271.5 695.5)"/><path d="M0 0 V11 H6.3" transform="translate(282.5 695.5)"/><path d="M0 0 V11 H5.5 L7 9.5 V6.5 L5.5 5 H0 M5.5 5 L6.3 4.2 V1 L5.3 0 H0" transform="translate(290.5 695.5)"/><path d="M1 6 H5.5" transform="translate(299.5 695.5)"/><path d="M0 2 H2.5 M2.5 0 V11 M0 11 H5" transform="translate(307.5 695.5)"/><path d="M0 0 H6.5 V1.5 L1.5 11" transform="translate(315.5 695.5)"/><path d="M331.2 698.5 L346.6 698.5 L417.6 728.7" fill="none"/><circle cx="417.6" cy="728.7" r="1.1" stroke="none" fill="#E81C48"/><path d="M1082.1 824.5 H1100.1" fill="none"/><path d="M0 11 H3.5 L6.5 8 V1.5 L5 0 H1.5 L0 1.5 V5 L1.5 6.5 H6.5" transform="translate(1101.5 811.5)"/><path d="M2.8 10 V11" transform="translate(1109.5 811.5)"/><path d="M0 0 V11 H6.3" transform="translate(1120.5 811.5)"/><path d="M0 0 V11 H5.5 L7 9.5 V6.5 L5.5 5 H0 M5.5 5 L6.3 4.2 V1 L5.3 0 H0" transform="translate(1128.5 811.5)"/><path d="M1 6 H5.5" transform="translate(1136.5 811.5)"/><path d="M0 2 H2.5 M2.5 0 V11 M0 11 H5" transform="translate(1145.5 811.5)"/><path d="M0 0 H6.5 V1.5 L1.5 11" transform="translate(1153.5 811.5)"/><path d="M1073.3 816.5 L1057.5 816.5 L1029.0 772.5" fill="none"/><path d="M0 0 L-8.5 -2.8 L-8.5 2.8 Z" transform="translate(1029 772.5) rotate(-122.9)" stroke="none" fill="#E81C48"/><path d="M294.1 844.5 H312.1" fill="none"/><path d="M0 2 H2.5 M2.5 0 V11 M0 11 H5" transform="translate(313.5 831.5)"/><path d="M0 1 L1 0 H5 L6.5 1.5 V4 L0 10 V11 H6.5" transform="translate(321.5 831.5)"/><path d="M2.8 10 V11" transform="translate(329.5 831.5)"/><path d="M0 0 V11 H6.3" transform="translate(340.5 831.5)"/><path d="M0 0 V11 H5.5 L7 9.5 V6.5 L5.5 5 H0 M5.5 5 L6.3 4.2 V1 L5.3 0 H0" transform="translate(348.5 831.5)"/><path d="M1 6 H5.5" transform="translate(357.5 831.5)"/><path d="M0 2 H2.5 M2.5 0 V11 M0 11 H5" transform="translate(365.5 831.5)"/><path d="M0 0 H6.5 V1.5 L1.5 11" transform="translate(373.5 831.5)"/><path d="M389.4 836.5 L405.5 836.5 L525.5 811.0" fill="none"/><circle cx="525.5" cy="811" r="1.1" stroke="none" fill="#E81C48"/><path d="M964.8 880.5 H982.8" fill="none"/><path d="M0 2 H2.5 M2.5 0 V11 M0 11 H5" transform="translate(984.5 867.5)"/><path d="M2 0 H5 L7 2 V9 L5 11 H2 L0 9 V2 Z" transform="translate(992.5 867.5)"/><path d="M2.8 10 V11" transform="translate(1000.5 867.5)"/><path d="M0 0 V11 H6.3" transform="translate(1011.5 867.5)"/><path d="M0 0 V11 H5.5 L7 9.5 V6.5 L5.5 5 H0 M5.5 5 L6.3 4.2 V1 L5.3 0 H0" transform="translate(1019.5 867.5)"/><path d="M1 6 H5.5" transform="translate(1027.5 867.5)"/><path d="M0 2 H2.5 M2.5 0 V11 M0 11 H5" transform="translate(1036.5 867.5)"/><path d="M0 0 H6.5 V1.5 L1.5 11" transform="translate(1044.5 867.5)"/><path d="M956.0 872.5 L940.0 872.5 L898.7 834.0" fill="none"/><circle cx="898.7" cy="834" r="1.1" stroke="none" fill="#E81C48"/><path d="M470.0 903.5 H488.0" fill="none"/><path d="M6 0 H0 V4 H4.5 L6.5 6 V9.5 L5 11 H1 L0 10" transform="translate(489.5 890.5)"/><path d="M0 0 H6.5 V1.5 L1.5 11" transform="translate(497.5 890.5)"/><path d="M2.8 10 V11" transform="translate(505.5 890.5)"/><path d="M0 0 V11 H6.3" transform="translate(516.5 890.5)"/><path d="M0 0 V11 H5.5 L7 9.5 V6.5 L5.5 5 H0 M5.5 5 L6.3 4.2 V1 L5.3 0 H0" transform="translate(524.5 890.5)"/><path d="M1 6 H5.5" transform="translate(532.5 890.5)"/><path d="M0 2 H2.5 M2.5 0 V11 M0 11 H5" transform="translate(541.5 890.5)"/><path d="M0 0 H6.5 V1.5 L1.5 11" transform="translate(549.5 890.5)"/><path d="M565.0 895.5 L579.8 895.5 L629.9 848.0" fill="none"/><circle cx="629.9" cy="848" r="1.1" stroke="none" fill="#E81C48"/><path d="M575.3 931.5 H593.3" fill="none"/><path d="M0 2 H2.5 M2.5 0 V11 M0 11 H5" transform="translate(594.5 919.5)"/><path d="M0 2 H2.5 M2.5 0 V11 M0 11 H5" transform="translate(602.5 919.5)"/><path d="M2.8 10 V11" transform="translate(610.5 919.5)"/><path d="M0 0 V11 H6.3" transform="translate(621.5 919.5)"/><path d="M0 0 V11 H5.5 L7 9.5 V6.5 L5.5 5 H0 M5.5 5 L6.3 4.2 V1 L5.3 0 H0" transform="translate(630.5 919.5)"/><path d="M1 6 H5.5" transform="translate(638.5 919.5)"/><path d="M0 2 H2.5 M2.5 0 V11 M0 11 H5" transform="translate(646.5 919.5)"/><path d="M0 0 H6.5 V1.5 L1.5 11" transform="translate(654.5 919.5)"/><path d="M670.2 923.5 L685.1 923.5 L713.7 856.7" fill="none"/><circle cx="713.7" cy="856.7" r="1.1" stroke="none" fill="#E81C48"/><path d="M820.1 920.5 H838.1" fill="none"/><path d="M6.5 0 H3 L0 3 V9.5 L1.5 11 H5 L6.5 9.5 V6 L5 4.5 H1.5 L0 6" transform="translate(839.5 907.5)"/><path d="M0 1 L1 0 H5 L6.5 1.5 V4 L0 10 V11 H6.5" transform="translate(847.5 907.5)"/><path d="M2.8 10 V11" transform="translate(855.5 907.5)"/><path d="M0 0 V11 H6.3" transform="translate(866.5 907.5)"/><path d="M0 0 V11 H5.5 L7 9.5 V6.5 L5.5 5 H0 M5.5 5 L6.3 4.2 V1 L5.3 0 H0" transform="translate(874.5 907.5)"/><path d="M1 6 H5.5" transform="translate(883.5 907.5)"/><path d="M0 2 H2.5 M2.5 0 V11 M0 11 H5" transform="translate(891.5 907.5)"/><path d="M0 0 H6.5 V1.5 L1.5 11" transform="translate(899.5 907.5)"/><path d="M811.7 912.5 L795.6 912.5 L773.3 854.5" fill="none"/><circle cx="773.3" cy="854.5" r="1.1" stroke="none" fill="#E81C48"/>
</g>
</svg>
</body></html>
